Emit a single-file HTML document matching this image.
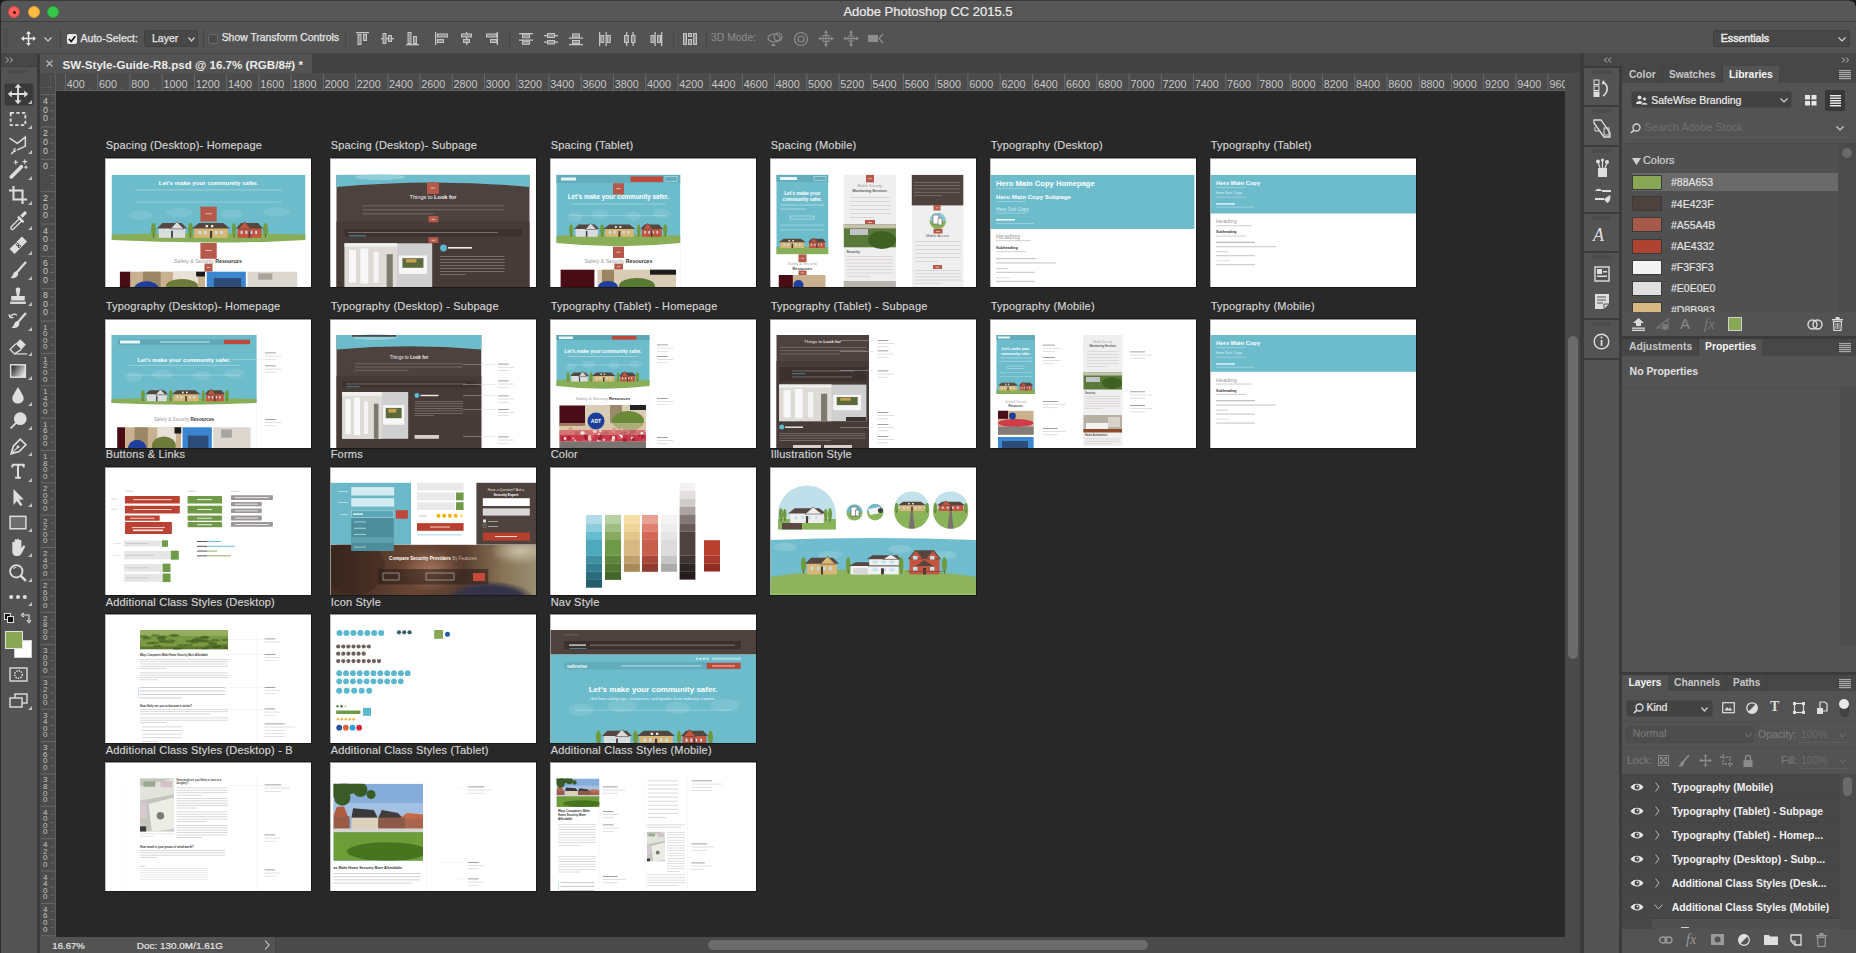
<!DOCTYPE html><html><head><meta charset="utf-8"><title>Photoshop</title><style>
*{margin:0;padding:0;box-sizing:border-box}
html,body{width:1856px;height:953px;overflow:hidden;background:#535353;font-family:"Liberation Sans",sans-serif;color:#ddd;position:relative}
.a{position:absolute}
.t{white-space:nowrap;line-height:1.2}
svg.a{overflow:visible}
</style></head><body><div class="a" style="left:0px;top:0px;width:1856px;height:21px;background:#565656;"></div><div class="a" style="left:0px;top:21px;width:1856px;height:1px;background:#3e3e3e;"></div><div class="a" style="left:0px;top:0px;width:1856px;height:1px;background:#3a3a3a;"></div><div class="a" style="left:8px;top:6px;width:12px;height:12px;border-radius:6px;background:#fc605c;border:0.5px solid #d24a46"></div><div class="a" style="left:12.5px;top:10.5px;width:3px;height:3px;border-radius:2px;background:#4d0000"></div><div class="a" style="left:28px;top:6px;width:12px;height:12px;border-radius:6px;background:#fdbc40;border:0.5px solid #d9a033"></div><div class="a" style="left:47px;top:6px;width:12px;height:12px;border-radius:6px;background:#34c84a;border:0.5px solid #2aa63b"></div><div class="a t" style="left:0;top:4.2px;width:1856px;text-align:center;font-size:13px;color:#ececec;-webkit-text-stroke:0.2px #ececec">Adobe Photoshop CC 2015.5</div><div class="a" style="left:0px;top:22px;width:1856px;height:32px;background:#535353;"></div><div class="a" style="left:0px;top:53px;width:1856px;height:1px;background:#474747;"></div><svg class="a" style="left:4px;top:28px" width="5" height="20" viewBox="0 0 5 20" ><rect x="0" y="0" width="4" height="1" fill="#464646"/><rect x="0" y="2" width="4" height="1" fill="#464646"/><rect x="0" y="4" width="4" height="1" fill="#464646"/><rect x="0" y="6" width="4" height="1" fill="#464646"/><rect x="0" y="8" width="4" height="1" fill="#464646"/><rect x="0" y="10" width="4" height="1" fill="#464646"/><rect x="0" y="12" width="4" height="1" fill="#464646"/><rect x="0" y="14" width="4" height="1" fill="#464646"/><rect x="0" y="16" width="4" height="1" fill="#464646"/><rect x="0" y="18" width="4" height="1" fill="#464646"/></svg><svg class="a" style="left:21px;top:31px" width="15" height="15" viewBox="0 0 15 15" ><path d="M7.5 1 L7.5 14 M1 7.5 L14 7.5" stroke="#e6e6e6" stroke-width="1.6"/><path d="M7.5 0 L5 3 L10 3Z M7.5 15 L5 12 L10 12Z M0 7.5 L3 5 L3 10Z M15 7.5 L12 5 L12 10Z" fill="#e6e6e6"/></svg><svg class="a" style="left:44px;top:37px" width="8" height="5" viewBox="0 0 8 5" ><path d="M0.5 0.5 L4.0 4 L7.5 0.5" stroke="#cfcfcf" stroke-width="1.2" fill="none"/></svg><div class="a" style="left:60px;top:29px;width:1px;height:19px;background:#474747;"></div><div class="a" style="left:203px;top:29px;width:1px;height:19px;background:#474747;"></div><div class="a" style="left:345px;top:29px;width:1px;height:19px;background:#474747;"></div><div class="a" style="left:509px;top:29px;width:1px;height:19px;background:#474747;"></div><div class="a" style="left:673px;top:29px;width:1px;height:19px;background:#474747;"></div><div class="a" style="left:706px;top:29px;width:1px;height:19px;background:#474747;"></div><div class="a" style="left:67px;top:34px;width:10px;height:10px;border-radius:2px;background:#e9e9e9"></div><svg class="a" style="left:67px;top:34px" width="10" height="10" viewBox="0 0 10 10" ><path d="M2 5 L4.2 7.5 L8.3 2.3" stroke="#111" stroke-width="1.7" fill="none"/></svg><div class="a t" style="left:80.5px;top:32.31px;font-size:10.55px;color:#e6e6e6;font-weight:normal;-webkit-text-stroke:0.25px #e6e6e6">Auto-Select:</div><div class="a" style="left:144px;top:30px;width:54px;height:17px;border-radius:3px;background:#474747;border:1px solid #404040"></div><div class="a t" style="left:152px;top:32.31px;font-size:10.55px;color:#e6e6e6;font-weight:normal;-webkit-text-stroke:0.25px #e6e6e6">Layer</div><svg class="a" style="left:188px;top:37px" width="7" height="5" viewBox="0 0 7 5" ><path d="M0.5 0.5 L3.5 4 L6.5 0.5" stroke="#cfcfcf" stroke-width="1.2" fill="none"/></svg><div class="a" style="left:208px;top:34px;width:10px;height:10px;border-radius:2px;background:#4a4a4a;border:1px solid #6a6a6a"></div><div class="a t" style="left:221.7px;top:32.46px;font-size:10.4px;color:#e6e6e6;font-weight:normal;-webkit-text-stroke:0.25px #e6e6e6">Show Transform Controls</div><svg class="a" style="left:356px;top:31.5px" width="14" height="14" viewBox="0 0 14 14" ><rect x="0" y="0" width="13" height="1.3" fill="#c4c4c4"/><rect x="2.0" y="2.5" width="3" height="10" fill="#8c8c8c" stroke="#c4c4c4" stroke-width="1"/><rect x="7.5" y="2.5" width="3" height="6" fill="#8c8c8c" stroke="#c4c4c4" stroke-width="1"/></svg><svg class="a" style="left:381px;top:31.5px" width="14" height="14" viewBox="0 0 14 14" ><rect x="0" y="6" width="13" height="1.3" fill="#c4c4c4"/><rect x="2.0" y="1.5" width="3" height="10" fill="#8c8c8c" stroke="#c4c4c4" stroke-width="1"/><rect x="7.5" y="3.5" width="3" height="6" fill="#8c8c8c" stroke="#c4c4c4" stroke-width="1"/></svg><svg class="a" style="left:406px;top:31.5px" width="14" height="14" viewBox="0 0 14 14" ><rect x="0" y="12" width="13" height="1.3" fill="#c4c4c4"/><rect x="2.0" y="0.5" width="3" height="11" fill="#8c8c8c" stroke="#c4c4c4" stroke-width="1"/><rect x="7.5" y="4.5" width="3" height="7" fill="#8c8c8c" stroke="#c4c4c4" stroke-width="1"/></svg><svg class="a" style="left:435px;top:31.5px" width="14" height="14" viewBox="0 0 14 14" ><rect x="0" y="0" width="1.3" height="13" fill="#c4c4c4"/><rect x="2.5" y="2.0" width="10" height="3" fill="#8c8c8c" stroke="#c4c4c4" stroke-width="1"/><rect x="2.5" y="7.5" width="6" height="3" fill="#8c8c8c" stroke="#c4c4c4" stroke-width="1"/></svg><svg class="a" style="left:460px;top:31.5px" width="14" height="14" viewBox="0 0 14 14" ><rect x="6" y="0" width="1.3" height="13" fill="#c4c4c4"/><rect x="1.5" y="2.0" width="10" height="3" fill="#8c8c8c" stroke="#c4c4c4" stroke-width="1"/><rect x="3.5" y="7.5" width="6" height="3" fill="#8c8c8c" stroke="#c4c4c4" stroke-width="1"/></svg><svg class="a" style="left:485px;top:31.5px" width="14" height="14" viewBox="0 0 14 14" ><rect x="11.7" y="0" width="1.3" height="13" fill="#c4c4c4"/><rect x="1.5" y="2.0" width="10" height="3" fill="#8c8c8c" stroke="#c4c4c4" stroke-width="1"/><rect x="5.5" y="7.5" width="6" height="3" fill="#8c8c8c" stroke="#c4c4c4" stroke-width="1"/></svg><svg class="a" style="left:519px;top:31.5px" width="14" height="14" viewBox="0 0 14 14" ><rect x="0" y="1" width="14" height="1.3" fill="#c4c4c4"/><rect x="0" y="7.5" width="14" height="1.3" fill="#c4c4c4"/><rect x="3.5" y="2.8" width="7" height="3" fill="#8c8c8c" stroke="#c4c4c4" stroke-width="1"/><rect x="3.5" y="9.3" width="7" height="3" fill="#8c8c8c" stroke="#c4c4c4" stroke-width="1"/></svg><svg class="a" style="left:544px;top:31.5px" width="14" height="14" viewBox="0 0 14 14" ><rect x="0" y="3" width="14" height="1.3" fill="#c4c4c4"/><rect x="0" y="9.5" width="14" height="1.3" fill="#c4c4c4"/><rect x="3.5" y="1.5" width="7" height="4" fill="#8c8c8c" stroke="#c4c4c4" stroke-width="1"/><rect x="3.5" y="8.5" width="7" height="3.5" fill="#8c8c8c" stroke="#c4c4c4" stroke-width="1"/></svg><svg class="a" style="left:569px;top:31.5px" width="14" height="14" viewBox="0 0 14 14" ><rect x="0" y="5.5" width="14" height="1.3" fill="#c4c4c4"/><rect x="0" y="12" width="14" height="1.3" fill="#c4c4c4"/><rect x="3.5" y="2.0" width="7" height="3" fill="#8c8c8c" stroke="#c4c4c4" stroke-width="1"/><rect x="3.5" y="8.5" width="7" height="3" fill="#8c8c8c" stroke="#c4c4c4" stroke-width="1"/></svg><svg class="a" style="left:598px;top:31.5px" width="14" height="14" viewBox="0 0 14 14" ><rect x="1" y="0" width="1.3" height="14" fill="#c4c4c4"/><rect x="7.5" y="0" width="1.3" height="14" fill="#c4c4c4"/><rect x="2.8" y="3.5" width="3" height="7" fill="#8c8c8c" stroke="#c4c4c4" stroke-width="1"/><rect x="9.3" y="3.5" width="3" height="7" fill="#8c8c8c" stroke="#c4c4c4" stroke-width="1"/></svg><svg class="a" style="left:623px;top:31.5px" width="14" height="14" viewBox="0 0 14 14" ><rect x="3" y="0" width="1.3" height="14" fill="#c4c4c4"/><rect x="9.5" y="0" width="1.3" height="14" fill="#c4c4c4"/><rect x="1.5" y="3.5" width="4" height="7" fill="#8c8c8c" stroke="#c4c4c4" stroke-width="1"/><rect x="8.5" y="3.5" width="3.5" height="7" fill="#8c8c8c" stroke="#c4c4c4" stroke-width="1"/></svg><svg class="a" style="left:649px;top:31.5px" width="14" height="14" viewBox="0 0 14 14" ><rect x="5.5" y="0" width="1.3" height="14" fill="#c4c4c4"/><rect x="12" y="0" width="1.3" height="14" fill="#c4c4c4"/><rect x="2.0" y="3.5" width="3" height="7" fill="#8c8c8c" stroke="#c4c4c4" stroke-width="1"/><rect x="8.5" y="3.5" width="3" height="7" fill="#8c8c8c" stroke="#c4c4c4" stroke-width="1"/></svg><svg class="a" style="left:683px;top:31.5px" width="14" height="14" viewBox="0 0 14 14" ><rect x="0.5" y="1.5" width="3" height="11" fill="#8c8c8c" stroke="#c4c4c4" stroke-width="1"/><rect x="5.5" y="1.5" width="3" height="3" fill="#8c8c8c" stroke="#c4c4c4" stroke-width="1"/><rect x="5.5" y="7.5" width="3" height="5" fill="#8c8c8c" stroke="#c4c4c4" stroke-width="1"/><rect x="10.5" y="1.5" width="3" height="11" fill="#8c8c8c" stroke="#c4c4c4" stroke-width="1"/></svg><div class="a t" style="left:711px;top:32.46px;font-size:10.4px;color:#8e8e8e;font-weight:normal;">3D Mode:</div><svg class="a" style="left:767px;top:30px" width="18" height="17" viewBox="0 0 18 17" ><ellipse cx="7" cy="8" rx="6" ry="4" stroke="#8e8e8e" stroke-width="1.2" fill="none"/><circle cx="11" cy="7" r="4" stroke="#8e8e8e" stroke-width="1.2" fill="none"/><path d="M6 13 L9 16 L4 16Z" fill="#8e8e8e"/></svg><svg class="a" style="left:793px;top:30px" width="16" height="17" viewBox="0 0 16 17" ><circle cx="8" cy="9" r="6.5" stroke="#8e8e8e" stroke-width="1.2" fill="none"/><circle cx="8" cy="9" r="3" stroke="#8e8e8e" stroke-width="1.2" fill="none"/></svg><svg class="a" style="left:818px;top:30px" width="16" height="17" viewBox="0 0 16 17" ><path d="M8 1 L8 16 M1 8.5 L15 8.5" stroke="#8e8e8e" stroke-width="1.2"/><rect x="5" y="5.5" width="6" height="6" stroke="#8e8e8e" fill="none"/><path d="M8 0 L6 3 L10 3Z M8 17 L6 14 L10 14Z M0 8.5 L3 6.5 L3 10.5Z M16 8.5 L13 6.5 L13 10.5Z" fill="#8e8e8e"/></svg><svg class="a" style="left:843px;top:30px" width="16" height="17" viewBox="0 0 16 17" ><path d="M8 1 L8 16 M1 8.5 L15 8.5" stroke="#8e8e8e" stroke-width="1.2"/><path d="M8 4 L12 8.5 L8 13 L4 8.5Z" stroke="#8e8e8e" fill="none"/><path d="M8 0 L6 3 L10 3Z M8 17 L6 14 L10 14Z M0 8.5 L3 6.5 L3 10.5Z M16 8.5 L13 6.5 L13 10.5Z" fill="#8e8e8e"/></svg><svg class="a" style="left:867px;top:31px" width="18" height="15" viewBox="0 0 18 15" ><rect x="1" y="4" width="10" height="7" fill="#8e8e8e"/><path d="M12 7.5 L16 3 M12 7.5 L16 12" stroke="#8e8e8e" stroke-width="1.2"/></svg><div class="a" style="left:1713px;top:30px;width:137px;height:17px;border-radius:3px;background:#474747;border:1px solid #3f3f3f"></div><div class="a t" style="left:1720.8px;top:32.27px;font-size:10.6px;color:#ececec;font-weight:normal;-webkit-text-stroke:0.45px #ececec">Essentials</div><svg class="a" style="left:1838px;top:37px" width="8" height="5" viewBox="0 0 8 5" ><path d="M0.5 0.5 L4.0 4 L7.5 0.5" stroke="#d0d0d0" stroke-width="1.2" fill="none"/></svg><div class="a" style="left:0px;top:54px;width:37px;height:899px;background:#535353;"></div><div class="a" style="left:37px;top:54px;width:3px;height:899px;background:#3b3b3b;"></div><div class="a" style="left:0px;top:54px;width:37px;height:12px;background:#474747;"></div><svg class="a" style="left:5px;top:57px" width="10" height="7" viewBox="0 0 10 7" ><path d="M1 0.5 L3.5 3 L1 5.5 M5 0.5 L7.5 3 L5 5.5" stroke="#bdbdbd" stroke-width="1" fill="none"/></svg><div class="a" style="left:0px;top:66px;width:37px;height:1px;background:#3e3e3e;"></div><svg class="a" style="left:9px;top:70px" width="20" height="3" viewBox="0 0 20 3" ><rect x="0" y="0" width="1" height="3" fill="#444"/><rect x="2" y="0" width="1" height="3" fill="#444"/><rect x="4" y="0" width="1" height="3" fill="#444"/><rect x="6" y="0" width="1" height="3" fill="#444"/><rect x="8" y="0" width="1" height="3" fill="#444"/><rect x="10" y="0" width="1" height="3" fill="#444"/><rect x="12" y="0" width="1" height="3" fill="#444"/><rect x="14" y="0" width="1" height="3" fill="#444"/><rect x="16" y="0" width="1" height="3" fill="#444"/><rect x="18" y="0" width="1" height="3" fill="#444"/></svg><div class="a" style="left:4px;top:83px;width:30px;height:23px;border-radius:3px;background:#3a3a3a;border:1px solid #454545"></div><svg class="a" style="left:8.7px;top:85px" width="18" height="18" viewBox="0 0 18 18" ><g transform="translate(9,9) scale(1.13) translate(-9,-9)"><path d="M9 2 L9 16 M2 9 L16 9" stroke="#dedede" stroke-width="1.7"/><path d="M9 0 L6 3.5 L12 3.5Z M9 18 L6 14.5 L12 14.5Z M0 9 L3.5 6 L3.5 12Z M18 9 L14.5 6 L14.5 12Z" fill="#dedede"/></g></svg><svg class="a" style="left:28px;top:100px" width="4" height="4" viewBox="0 0 4 4" ><path d="M4 0 L4 4 L0 4Z" fill="#bdbdbd"/></svg><svg class="a" style="left:8.7px;top:110px" width="18" height="18" viewBox="0 0 18 18" ><g transform="translate(9,9) scale(1.13) translate(-9,-9)"><rect x="2.5" y="3.5" width="13" height="11" stroke="#dedede" stroke-width="1.6" stroke-dasharray="3 2" fill="none"/></g></svg><svg class="a" style="left:28px;top:125px" width="4" height="4" viewBox="0 0 4 4" ><path d="M4 0 L4 4 L0 4Z" fill="#bdbdbd"/></svg><svg class="a" style="left:8.7px;top:136px" width="18" height="18" viewBox="0 0 18 18" ><g transform="translate(9,9) scale(1.13) translate(-9,-9)"><path d="M1.5 3 L8.5 7.5 L15.5 2 L15.5 10 L8 13.5 M7 12.5 C5 12 5 15 7 14.5 M6 14 L3 17" stroke="#dedede" stroke-width="1.3" fill="none"/></g></svg><svg class="a" style="left:28px;top:150px" width="4" height="4" viewBox="0 0 4 4" ><path d="M4 0 L4 4 L0 4Z" fill="#bdbdbd"/></svg><svg class="a" style="left:8.7px;top:160px" width="18" height="18" viewBox="0 0 18 18" ><g transform="translate(9,9) scale(1.13) translate(-9,-9)"><path d="M3 16 L12 7" stroke="#dedede" stroke-width="3.2" stroke-linecap="round"/><path d="M7 1 L7 5 M5 3 L9 3 M15 0.5 L15 4.5 M13 2.5 L17 2.5 M16 6 L16 9 M14.5 7.5 L17.5 7.5" stroke="#dedede" stroke-width="1"/></g></svg><svg class="a" style="left:28px;top:176px" width="4" height="4" viewBox="0 0 4 4" ><path d="M4 0 L4 4 L0 4Z" fill="#bdbdbd"/></svg><svg class="a" style="left:8.7px;top:186px" width="18" height="18" viewBox="0 0 18 18" ><g transform="translate(9,9) scale(1.13) translate(-9,-9)"><path d="M5 1 L5 13 L17 13 M1 5 L13 5 L13 17" stroke="#dedede" stroke-width="1.8" fill="none"/></g></svg><svg class="a" style="left:28px;top:201px" width="4" height="4" viewBox="0 0 4 4" ><path d="M4 0 L4 4 L0 4Z" fill="#bdbdbd"/></svg><svg class="a" style="left:8.7px;top:211px" width="18" height="18" viewBox="0 0 18 18" ><g transform="translate(9,9) scale(1.13) translate(-9,-9)"><path d="M3 15 L10 8 L12 10 L5 17 C3.5 18 2 16.5 3 15Z" stroke="#dedede" stroke-width="1.2" fill="none"/><path d="M9 6 L14 11" stroke="#dedede" stroke-width="2"/><path d="M11 5 L14.5 1.5 C15.5 0.5 17.5 2.5 16.5 3.5 L13 7Z" fill="#dedede"/></g></svg><svg class="a" style="left:28px;top:226px" width="4" height="4" viewBox="0 0 4 4" ><path d="M4 0 L4 4 L0 4Z" fill="#bdbdbd"/></svg><svg class="a" style="left:8.7px;top:236px" width="18" height="18" viewBox="0 0 18 18" ><g transform="translate(9,9) scale(1.13) translate(-9,-9)"><path d="M1.5 12.5 L12.5 1.5 L17 6 L6 17Z" fill="#dedede"/><path d="M6.5 7.5 L11 12 M7.5 6.5 L12 11" stroke="#535353" stroke-width="0.8"/><circle cx="9.5" cy="9.5" r="0.8" fill="#535353"/><circle cx="8" cy="9.5" r="0.6" fill="#535353"/><circle cx="11" cy="9.5" r="0.6" fill="#535353"/><circle cx="9.5" cy="8" r="0.6" fill="#535353"/><circle cx="9.5" cy="11" r="0.6" fill="#535353"/></g></svg><svg class="a" style="left:28px;top:251px" width="4" height="4" viewBox="0 0 4 4" ><path d="M4 0 L4 4 L0 4Z" fill="#bdbdbd"/></svg><svg class="a" style="left:8.7px;top:261px" width="18" height="18" viewBox="0 0 18 18" ><g transform="translate(9,9) scale(1.13) translate(-9,-9)"><path d="M16 2 L8 11" stroke="#dedede" stroke-width="2"/><path d="M8 10 C4 10 5 15 2 16 C6 17 10 15 9 11Z" fill="#dedede"/></g></svg><svg class="a" style="left:28px;top:276px" width="4" height="4" viewBox="0 0 4 4" ><path d="M4 0 L4 4 L0 4Z" fill="#bdbdbd"/></svg><svg class="a" style="left:8.7px;top:287px" width="18" height="18" viewBox="0 0 18 18" ><g transform="translate(9,9) scale(1.13) translate(-9,-9)"><path d="M7 3 C7 1 11 1 11 3 L10 9 L8 9Z" fill="#dedede"/><rect x="3" y="9" width="12" height="4" fill="#dedede"/><rect x="2" y="14" width="14" height="2" fill="#dedede"/></g></svg><svg class="a" style="left:28px;top:302px" width="4" height="4" viewBox="0 0 4 4" ><path d="M4 0 L4 4 L0 4Z" fill="#bdbdbd"/></svg><svg class="a" style="left:8.7px;top:312px" width="18" height="18" viewBox="0 0 18 18" ><g transform="translate(9,9) scale(1.13) translate(-9,-9)"><path d="M16 2 L9 10" stroke="#dedede" stroke-width="2"/><path d="M9 9 C5 9 6 14 3 15 C7 16 11 14 10 10Z" fill="#dedede"/><path d="M2 6 C3 3 6 2 8 4 M2 6 L1 3 M2 6 L5 6" stroke="#dedede" stroke-width="1.2" fill="none"/></g></svg><svg class="a" style="left:28px;top:327px" width="4" height="4" viewBox="0 0 4 4" ><path d="M4 0 L4 4 L0 4Z" fill="#bdbdbd"/></svg><svg class="a" style="left:8.7px;top:337px" width="18" height="18" viewBox="0 0 18 18" ><g transform="translate(9,9) scale(1.13) translate(-9,-9)"><path d="M7 7 L11 3 L16 8 L12 12Z" fill="#dedede"/><path d="M7 7 L2 12 L6 16 L12 12" stroke="#dedede" stroke-width="1.2" fill="none"/><path d="M6 16 L17 16" stroke="#dedede" stroke-width="1.1"/></g></svg><svg class="a" style="left:28px;top:352px" width="4" height="4" viewBox="0 0 4 4" ><path d="M4 0 L4 4 L0 4Z" fill="#bdbdbd"/></svg><svg class="a" style="left:8.7px;top:362px" width="18" height="18" viewBox="0 0 18 18" ><g transform="translate(9,9) scale(1.13) translate(-9,-9)"><defs><linearGradient id="gg" x1="0" y1="0.2" x2="1" y2="0.8"><stop offset="0" stop-color="#222"/><stop offset="1" stop-color="#f4f4f4"/></linearGradient></defs><rect x="2.5" y="3.5" width="13" height="11" stroke="#dedede" stroke-width="1.3" fill="url(#gg)"/></g></svg><svg class="a" style="left:28px;top:376px" width="4" height="4" viewBox="0 0 4 4" ><path d="M4 0 L4 4 L0 4Z" fill="#bdbdbd"/></svg><svg class="a" style="left:8.7px;top:386px" width="18" height="18" viewBox="0 0 18 18" ><g transform="translate(9,9) scale(1.13) translate(-9,-9)"><path d="M9 2 C6 7 4 10 4 12 C4 15 6.5 16.5 9 16.5 C11.5 16.5 14 15 14 12 C14 10 12 7 9 2Z" fill="#dedede"/></g></svg><svg class="a" style="left:28px;top:402px" width="4" height="4" viewBox="0 0 4 4" ><path d="M4 0 L4 4 L0 4Z" fill="#bdbdbd"/></svg><svg class="a" style="left:8.7px;top:412px" width="18" height="18" viewBox="0 0 18 18" ><g transform="translate(9,9) scale(1.13) translate(-9,-9)"><circle cx="11" cy="7" r="5" stroke="#dedede" stroke-width="1.3" fill="#dedede"/><path d="M7.5 10.5 L2.5 15.5" stroke="#dedede" stroke-width="1.6"/></g></svg><svg class="a" style="left:28px;top:426px" width="4" height="4" viewBox="0 0 4 4" ><path d="M4 0 L4 4 L0 4Z" fill="#bdbdbd"/></svg><svg class="a" style="left:8.7px;top:438px" width="18" height="18" viewBox="0 0 18 18" ><g transform="translate(9,9) scale(1.13) translate(-9,-9)"><path d="M3 15 L5 8 L11 2 L16 7 L10 13Z" stroke="#dedede" stroke-width="1.5" fill="none"/><path d="M3 15 L8.5 9.5" stroke="#dedede" stroke-width="1"/><circle cx="9" cy="9" r="1.3" fill="#dedede"/></g></svg><svg class="a" style="left:28px;top:452px" width="4" height="4" viewBox="0 0 4 4" ><path d="M4 0 L4 4 L0 4Z" fill="#bdbdbd"/></svg><svg class="a" style="left:8.7px;top:462px" width="18" height="18" viewBox="0 0 18 18" ><g transform="translate(9,9) scale(1.13) translate(-9,-9)"><path d="M4 3.5 L14 3.5 L14 6 M4 3.5 L4 6 M9 3.5 L9 15 M6.5 15 L11.5 15" stroke="#dedede" stroke-width="1.8" fill="none"/></g></svg><svg class="a" style="left:28px;top:478px" width="4" height="4" viewBox="0 0 4 4" ><path d="M4 0 L4 4 L0 4Z" fill="#bdbdbd"/></svg><svg class="a" style="left:8.7px;top:488px" width="18" height="18" viewBox="0 0 18 18" ><g transform="translate(9,9) scale(1.13) translate(-9,-9)"><path d="M5 2 L5 16 L8 12.5 L11 17 L13 16 L10 11.5 L14 11Z" fill="#dedede"/></g></svg><svg class="a" style="left:28px;top:503px" width="4" height="4" viewBox="0 0 4 4" ><path d="M4 0 L4 4 L0 4Z" fill="#bdbdbd"/></svg><svg class="a" style="left:8.7px;top:513px" width="18" height="18" viewBox="0 0 18 18" ><g transform="translate(9,9) scale(1.13) translate(-9,-9)"><rect x="2" y="4" width="14" height="11" stroke="#dedede" stroke-width="1.3" fill="#6e6e6e"/></g></svg><svg class="a" style="left:28px;top:528px" width="4" height="4" viewBox="0 0 4 4" ><path d="M4 0 L4 4 L0 4Z" fill="#bdbdbd"/></svg><svg class="a" style="left:8.7px;top:538px" width="18" height="18" viewBox="0 0 18 18" ><g transform="translate(9,9) scale(1.13) translate(-9,-9)"><path d="M4 9 L4 5 C4 4 6 4 6 5 L6 9 L6 3 C6 2 8 2 8 3 L8 9 L8 2.5 C8 1.5 10 1.5 10 2.5 L10 9 L10 3.5 C10 2.5 12 2.5 12 3.5 L12 10 L13.5 8 C14.5 7 16 8 15 9.5 L12 15 C11 16.5 10 17 8 17 C5 17 4 15 4 13Z" fill="#dedede"/></g></svg><svg class="a" style="left:28px;top:553px" width="4" height="4" viewBox="0 0 4 4" ><path d="M4 0 L4 4 L0 4Z" fill="#bdbdbd"/></svg><svg class="a" style="left:8.7px;top:564px" width="18" height="18" viewBox="0 0 18 18" ><g transform="translate(9,9) scale(1.13) translate(-9,-9)"><circle cx="7.5" cy="7.5" r="5.5" stroke="#dedede" stroke-width="1.6" fill="none"/><path d="M11.5 11.5 L16 16" stroke="#dedede" stroke-width="2.2"/><path d="M5 5.5 C5.5 4.5 6.5 4 7.5 4" stroke="#dedede" stroke-width="0.9" fill="none"/></g></svg><svg class="a" style="left:28px;top:578px" width="4" height="4" viewBox="0 0 4 4" ><path d="M4 0 L4 4 L0 4Z" fill="#bdbdbd"/></svg><svg class="a" style="left:8.7px;top:588px" width="18" height="18" viewBox="0 0 18 18" ><g transform="translate(9,9) scale(1.13) translate(-9,-9)"><circle cx="3" cy="9" r="1.8" fill="#dedede"/><circle cx="9" cy="9" r="1.8" fill="#dedede"/><circle cx="15" cy="9" r="1.8" fill="#dedede"/></g></svg><svg class="a" style="left:28px;top:602px" width="4" height="4" viewBox="0 0 4 4" ><path d="M4 0 L4 4 L0 4Z" fill="#bdbdbd"/></svg><svg class="a" style="left:4px;top:613px" width="28" height="12" viewBox="0 0 28 12" ><rect x="0.5" y="0.5" width="6" height="6" fill="#111" stroke="#ddd" stroke-width="1"/><rect x="3.5" y="3.5" width="6" height="6" fill="#111" stroke="#ddd" stroke-width="1"/><path d="M19 2 L25 2 L25 8 M17 2 L20 0 M17 2 L20 4 M25 10 L23 7 M25 10 L27 7" stroke="#ddd" stroke-width="1.2" fill="none"/></svg><div class="a" style="left:14px;top:640px;width:18px;height:18px;background:#ffffff;border:1px solid #cfcfcf"></div><div class="a" style="left:5px;top:631px;width:18px;height:18px;background:#88a653;border:1px solid #e2e2e2"></div><svg class="a" style="left:9px;top:667px" width="19" height="16" viewBox="0 0 19 16" ><rect x="1" y="1" width="17" height="13" stroke="#dedede" stroke-width="1.4" fill="none"/><circle cx="9.5" cy="7.5" r="3.8" stroke="#dedede" stroke-width="1.4" stroke-dasharray="1.5 1" fill="none"/></svg><svg class="a" style="left:9px;top:693px" width="19" height="16" viewBox="0 0 19 16" ><rect x="6" y="1" width="12" height="9" stroke="#dedede" stroke-width="1.4" fill="#535353"/><rect x="1" y="5" width="12" height="9" stroke="#dedede" stroke-width="1.4" fill="#535353"/></svg><svg class="a" style="left:28px;top:706px" width="4" height="4" viewBox="0 0 4 4" ><path d="M4 0 L4 4 L0 4Z" fill="#bdbdbd"/></svg><div class="a" style="left:40px;top:54px;width:1540px;height:19px;background:#424242;"></div><div class="a" style="left:40px;top:54px;width:272px;height:19px;background:#535353;"></div><svg class="a" style="left:46px;top:60px" width="7" height="7" viewBox="0 0 7 7" ><path d="M0.5 0.5 L6.5 6.5 M6.5 0.5 L0.5 6.5" stroke="#bdbdbd" stroke-width="1.1"/></svg><div class="a t" style="left:62.5px;top:57.72px;font-size:11.6px;color:#ececec;font-weight:bold;">SW-Style-Guide-R8.psd @ 16.7% (RGB/8#) *</div><div class="a" style="left:56px;top:91px;width:1509px;height:846px;background:#282828;"></div><div class="a" style="left:105px;top:157px;width:207px;height:131px;background:#1a1a1a"></div><svg class="a" style="left:105px;top:158px;background:#fff;overflow:hidden" width="206" height="129" viewBox="0 0 206 129"><rect x="6.80" y="16.90" width="193.50" height="65.10" fill="#6dbccc" /><ellipse cx="35.82" cy="57.26" rx="11.61" ry="4.56" fill="#7cc3d2"/><ellipse cx="74.52" cy="54.66" rx="13.55" ry="4.56" fill="#7cc3d2"/><ellipse cx="126.77" cy="55.96" rx="11.61" ry="4.56" fill="#7cc3d2"/><ellipse cx="171.28" cy="54.01" rx="13.55" ry="4.56" fill="#7cc3d2"/><text x="103.55" y="27.00" font-size="6.2" fill="#ffffff" font-family="Liberation Sans" font-weight="bold" text-anchor="middle" >Let's make your community safer.</text><rect x="30.02" y="31.50" width="147.06" height="1.00" fill="#ffffff" opacity="0.32"/><rect x="30.02" y="43.50" width="147.06" height="1.20" fill="#ffffff" opacity="0.22"/><path d="M6.80 76.50 Q103.55 73.75 200.30 76.50 L200.30 82.00 Q103.55 86.95 6.80 82.00Z" fill="#88ae58"/><ellipse cx="48.50" cy="71.55" rx="2.50" ry="6.75" fill="#6f9a3e"/><rect x="48.15" y="76.80" width="0.70" height="3.00" fill="#5a4a3a" /><rect x="53.80" y="69.88" width="26.40" height="9.92" fill="#dcdcdc" /><path d="M52.00 70.38 L57.40 65.08 L76.60 65.08 L82.00 70.38Z" fill="#55463f"/><path d="M65.50 70.88 L71.80 63.80 L79.00 70.88Z" fill="#dcdcdc" stroke="#55463f" stroke-width="0.6"/><rect x="57.10" y="72.86" width="2.10" height="3.17" fill="#bfe3ee" /><rect x="62.50" y="72.86" width="2.10" height="3.17" fill="#bfe3ee" /><rect x="67.90" y="72.86" width="2.10" height="3.17" fill="#bfe3ee" /><rect x="73.30" y="72.86" width="2.10" height="3.17" fill="#bfe3ee" /><rect x="66.10" y="72.86" width="1.80" height="6.94" fill="#4a3a34" /><ellipse cx="85.50" cy="71.55" rx="2.50" ry="6.75" fill="#6f9a3e"/><rect x="85.15" y="76.80" width="0.70" height="3.00" fill="#5a4a3a" /><rect x="89.28" y="69.88" width="33.44" height="9.92" fill="#d9b676" /><path d="M87.00 70.38 L93.84 65.08 L118.16 65.08 L125.00 70.38Z" fill="#55463f"/><rect x="100.68" y="67.00" width="2.28" height="2.24" fill="#f5f0e0" /><rect x="106.00" y="67.00" width="2.28" height="2.24" fill="#f5f0e0" /><rect x="93.46" y="72.86" width="2.66" height="3.17" fill="#bfe3ee" /><rect x="98.93" y="72.86" width="2.66" height="3.17" fill="#bfe3ee" /><rect x="104.40" y="72.86" width="2.66" height="3.17" fill="#bfe3ee" /><rect x="109.88" y="72.86" width="2.66" height="3.17" fill="#bfe3ee" /><rect x="115.35" y="72.86" width="2.66" height="3.17" fill="#bfe3ee" /><rect x="104.86" y="72.86" width="2.28" height="6.94" fill="#4a3a34" /><ellipse cx="129.00" cy="71.55" rx="2.00" ry="6.75" fill="#6f9a3e"/><rect x="128.65" y="76.80" width="0.70" height="3.00" fill="#5a4a3a" /><rect x="132.62" y="69.88" width="23.76" height="9.92" fill="#c4553f" /><path d="M131.00 70.38 L135.86 65.08 L153.14 65.08 L158.00 70.38Z" fill="#55463f"/><path d="M133.70 70.88 L139.64 63.80 L145.85 70.88Z" fill="#c4553f" stroke="#55463f" stroke-width="0.6"/><rect x="135.59" y="72.86" width="1.89" height="3.17" fill="#bfe3ee" /><rect x="140.45" y="72.86" width="1.89" height="3.17" fill="#bfe3ee" /><rect x="145.31" y="72.86" width="1.89" height="3.17" fill="#bfe3ee" /><rect x="150.17" y="72.86" width="1.89" height="3.17" fill="#bfe3ee" /><rect x="143.69" y="72.86" width="1.62" height="6.94" fill="#4a3a34" /><ellipse cx="160.50" cy="71.55" rx="2.50" ry="6.75" fill="#6f9a3e"/><rect x="160.15" y="76.80" width="0.70" height="3.00" fill="#5a4a3a" /><rect x="95.40" y="48.70" width="16.30" height="14.90" fill="#b5594a" /><rect x="100.29" y="55.41" width="6.52" height="0.80" fill="#f0d0c8" /><rect x="95.40" y="85.00" width="16.30" height="15.80" fill="#b5594a" /><rect x="100.29" y="92.11" width="6.52" height="0.80" fill="#f0d0c8" /><text x="103.00" y="105.00" font-size="5.2" fill="#999" font-family="Liberation Sans"  text-anchor="middle" >Safety &amp; Security <tspan font-weight="bold" fill="#333">Resources</tspan></text><rect x="99.50" y="105.60" width="8.00" height="8.00" fill="#b5594a" /><rect x="101.90" y="109.20" width="3.20" height="0.80" fill="#f0d0c8" /><rect x="14.90" y="113.70" width="10.64" height="16.00" fill="#4a0c14" /><defs></defs><rect x="25.54" y="113.70" width="74.47" height="16.00" fill="#c9b190" /><rect x="37.95" y="113.70" width="17.73" height="16.00" fill="#9c8866" /><rect x="68.09" y="113.70" width="24.82" height="16.00" fill="#e8e2d6" /><ellipse cx="76.95" cy="128.10" rx="15.96" ry="7.20" fill="#6c7a3a"/><rect x="91.14" y="113.70" width="8.87" height="4.80" fill="#1a1a1a" /><ellipse cx="41.50" cy="130.50" rx="12.41" ry="7.20" fill="#1e3d9c"/><rect x="101.78" y="113.70" width="39.01" height="16.00" fill="#3a86d0" /><rect x="108.87" y="120.10" width="27.30" height="9.60" fill="#2d4c7a" /><rect x="142.56" y="113.70" width="49.64" height="16.00" fill="#dcd8d0" /><rect x="153.19" y="115.30" width="14.18" height="6.40" fill="#a8a49c" /><rect x="200.00" y="81.00" width="0.50" height="48.00" fill="#eee" /><rect x="0" y="0" width="206" height="0.8" fill="#777"/><rect x="0" y="0" width="0.8" height="129" fill="#aaa"/></svg><div class="a" style="left:330px;top:157px;width:207px;height:131px;background:#1a1a1a"></div><svg class="a" style="left:330px;top:158px;background:#fff;overflow:hidden" width="206" height="129" viewBox="0 0 206 129"><rect x="6.50" y="16.90" width="193.00" height="112.10" fill="#4e423f" /><path d="M6.5 16.9 L199.5 16.9 L199.5 29 Q103 20 6.5 29Z" fill="#6dbccc"/><ellipse cx="50" cy="19" rx="25" ry="3" fill="#9fd6e0" opacity="0.7"/><rect x="6.50" y="63.60" width="193.00" height="65.40" fill="#473b38" /><rect x="97.00" y="24.40" width="12.00" height="11.50" fill="#b5594a" /><rect x="100.60" y="29.57" width="4.80" height="0.80" fill="#f0d0c8" /><text x="103.00" y="41.00" font-size="5.6" fill="#f2f2f2" font-family="Liberation Sans"  text-anchor="middle" >Things to <tspan font-weight="bold">Look for</tspan></text><rect x="32.50" y="47.50" width="141.50" height="0.70" fill="#857976" /><rect x="32.50" y="51.50" width="141.50" height="0.70" fill="#857976" /><rect x="32.50" y="55.50" width="70.75" height="0.70" fill="#857976" /><rect x="98.50" y="58.00" width="9.80" height="6.30" fill="#b5594a" /><rect x="101.44" y="60.84" width="3.92" height="0.80" fill="#f0d0c8" /><rect x="14.60" y="71.00" width="177.40" height="7.50" fill="#3b312f" /><rect x="18.00" y="74.00" width="150.00" height="1.00" fill="#7a6e6a" /><rect x="19.00" y="77.50" width="17.00" height="0.70" fill="#5ab8cc" /><rect x="98.50" y="79.20" width="9.80" height="5.80" fill="#b5594a" /><rect x="101.44" y="81.81" width="3.92" height="0.80" fill="#f0d0c8" /><rect x="14.60" y="85.30" width="87.60" height="43.70" fill="#cfcfcf" /><rect x="14.60" y="85.30" width="52.56" height="43.70" fill="#dedbd6" /><rect x="18.98" y="91.86" width="7.01" height="32.78" fill="#f8f8f8" /><rect x="30.37" y="90.54" width="7.88" height="34.96" fill="#f8f8f8" /><rect x="43.51" y="94.04" width="5.26" height="30.59" fill="#f4f4f4" /><rect x="56.65" y="96.22" width="6.13" height="32.78" fill="#7d7a70" /><rect x="14.60" y="85.30" width="52.56" height="3.50" fill="#f0f0f0" /><rect x="68.91" y="97.54" width="28.03" height="18.35" fill="#f6f6f6" /><rect x="72.42" y="100.16" width="21.02" height="9.61" fill="#5a6a3a" /><rect x="75.92" y="101.03" width="10.51" height="3.50" fill="#c8a050" /><circle cx="113.50" cy="90.00" r="3.40" fill="#5ab8d0" /><rect x="118.00" y="89.00" width="24.00" height="1.60" fill="#eee" /><rect x="110.00" y="98.00" width="64.60" height="0.70" fill="#8e8480" /><rect x="110.00" y="101.00" width="64.60" height="0.70" fill="#8e8480" /><rect x="110.00" y="104.00" width="64.60" height="0.70" fill="#8e8480" /><rect x="110.00" y="107.00" width="64.60" height="0.70" fill="#8e8480" /><rect x="110.00" y="110.00" width="64.60" height="0.70" fill="#8e8480" /><rect x="110.00" y="113.00" width="64.60" height="0.70" fill="#8e8480" /><rect x="110.00" y="116.00" width="25.84" height="0.70" fill="#8e8480" /><rect x="0" y="0" width="206" height="0.8" fill="#777"/><rect x="0" y="0" width="0.8" height="129" fill="#aaa"/></svg><div class="a" style="left:550px;top:157px;width:207px;height:131px;background:#1a1a1a"></div><svg class="a" style="left:550px;top:158px;background:#fff;overflow:hidden" width="206" height="129" viewBox="0 0 206 129"><rect x="6.50" y="16.90" width="123.70" height="68.10" fill="#6dbccc" /><ellipse cx="25.05" cy="59.12" rx="7.42" ry="4.77" fill="#7cc3d2"/><ellipse cx="49.79" cy="56.40" rx="8.66" ry="4.77" fill="#7cc3d2"/><ellipse cx="83.19" cy="57.76" rx="7.42" ry="4.77" fill="#7cc3d2"/><ellipse cx="111.64" cy="55.72" rx="8.66" ry="4.77" fill="#7cc3d2"/><rect x="6.50" y="16.90" width="123.70" height="8.10" fill="#62acbc" /><rect x="80.50" y="18.50" width="32.50" height="5.50" fill="#c0483a" /><rect x="11.00" y="19.50" width="15.00" height="3.00" fill="#e8f4f7" /><rect x="115.00" y="18.70" width="12.00" height="5.00" fill="none" stroke="#d8eef3" stroke-width="0.5"/><text x="68.35" y="41.00" font-size="6.3" fill="#ffffff" font-family="Liberation Sans" font-weight="bold" text-anchor="middle" >Let's make your community safer.</text><rect x="21.34" y="45.50" width="94.01" height="1.00" fill="#ffffff" opacity="0.32"/><rect x="21.34" y="57.00" width="94.01" height="1.20" fill="#ffffff" opacity="0.22"/><path d="M6.50 77.80 Q68.35 74.20 130.20 77.80 L130.20 85.00 Q68.35 91.48 6.50 85.00Z" fill="#88ae58"/><ellipse cx="21.10" cy="71.85" rx="2.10" ry="5.67" fill="#6f9a3e"/><rect x="20.75" y="76.26" width="0.70" height="2.52" fill="#5a4a3a" /><rect x="25.55" y="70.45" width="22.18" height="8.33" fill="#dcdcdc" /><path d="M24.04 70.95 L28.58 66.42 L44.70 66.42 L49.24 70.95Z" fill="#55463f"/><path d="M35.38 71.45 L40.67 65.34 L46.72 71.45Z" fill="#dcdcdc" stroke="#55463f" stroke-width="0.6"/><rect x="28.32" y="72.95" width="1.76" height="2.67" fill="#bfe3ee" /><rect x="32.86" y="72.95" width="1.76" height="2.67" fill="#bfe3ee" /><rect x="37.40" y="72.95" width="1.76" height="2.67" fill="#bfe3ee" /><rect x="41.93" y="72.95" width="1.76" height="2.67" fill="#bfe3ee" /><rect x="35.88" y="72.95" width="1.51" height="5.83" fill="#4a3a34" /><ellipse cx="52.18" cy="71.85" rx="2.10" ry="5.67" fill="#6f9a3e"/><rect x="51.83" y="76.26" width="0.70" height="2.52" fill="#5a4a3a" /><rect x="55.36" y="70.45" width="28.09" height="8.33" fill="#d9b676" /><path d="M53.44 70.95 L59.19 66.42 L79.61 66.42 L85.36 70.95Z" fill="#55463f"/><rect x="64.93" y="68.03" width="1.92" height="1.88" fill="#f5f0e0" /><rect x="69.40" y="68.03" width="1.92" height="1.88" fill="#f5f0e0" /><rect x="58.87" y="72.95" width="2.23" height="2.67" fill="#bfe3ee" /><rect x="63.46" y="72.95" width="2.23" height="2.67" fill="#bfe3ee" /><rect x="68.06" y="72.95" width="2.23" height="2.67" fill="#bfe3ee" /><rect x="72.66" y="72.95" width="2.23" height="2.67" fill="#bfe3ee" /><rect x="77.25" y="72.95" width="2.23" height="2.67" fill="#bfe3ee" /><rect x="68.44" y="72.95" width="1.92" height="5.83" fill="#4a3a34" /><ellipse cx="88.72" cy="71.85" rx="1.68" ry="5.67" fill="#6f9a3e"/><rect x="88.37" y="76.26" width="0.70" height="2.52" fill="#5a4a3a" /><rect x="91.76" y="70.45" width="19.96" height="8.33" fill="#c4553f" /><path d="M90.40 70.95 L94.48 66.42 L109.00 66.42 L113.08 70.95Z" fill="#55463f"/><path d="M92.67 71.45 L97.66 65.34 L102.87 71.45Z" fill="#c4553f" stroke="#55463f" stroke-width="0.6"/><rect x="94.26" y="72.95" width="1.59" height="2.67" fill="#bfe3ee" /><rect x="98.34" y="72.95" width="1.59" height="2.67" fill="#bfe3ee" /><rect x="102.42" y="72.95" width="1.59" height="2.67" fill="#bfe3ee" /><rect x="106.50" y="72.95" width="1.59" height="2.67" fill="#bfe3ee" /><rect x="101.06" y="72.95" width="1.36" height="5.83" fill="#4a3a34" /><ellipse cx="115.18" cy="71.85" rx="2.10" ry="5.67" fill="#6f9a3e"/><rect x="114.83" y="76.26" width="0.70" height="2.52" fill="#5a4a3a" /><rect x="63.00" y="25.30" width="11.00" height="11.20" fill="#b5594a" /><rect x="66.30" y="30.34" width="4.40" height="0.80" fill="#f0d0c8" /><rect x="63.00" y="88.70" width="11.00" height="11.30" fill="#b5594a" /><rect x="66.30" y="93.78" width="4.40" height="0.80" fill="#f0d0c8" /><text x="68.50" y="104.50" font-size="5.2" fill="#999" font-family="Liberation Sans"  text-anchor="middle" >Safety &amp; Security <tspan font-weight="bold" fill="#333">Resources</tspan></text><rect x="64.30" y="105.60" width="8.70" height="6.10" fill="#b5594a" /><rect x="66.91" y="108.34" width="3.48" height="0.80" fill="#f0d0c8" /><rect x="10.60" y="111.70" width="33.80" height="17.30" fill="#4a0c14" /><rect x="47.40" y="111.70" width="78.60" height="17.30" fill="#d8ccb4" /><rect x="52.00" y="111.70" width="12.00" height="17.30" fill="#9c8660" /><rect x="100.00" y="111.70" width="26.00" height="5.00" fill="#1c1c1c" /><ellipse cx="87" cy="128" rx="18" ry="8" fill="#587a32"/><ellipse cx="58" cy="129" rx="10" ry="6" fill="#1e3d9c"/><rect x="130.20" y="84.00" width="0.50" height="45.00" fill="#eee" /><rect x="0" y="0" width="206" height="0.8" fill="#777"/><rect x="0" y="0" width="0.8" height="129" fill="#aaa"/></svg><div class="a" style="left:770px;top:157px;width:207px;height:131px;background:#1a1a1a"></div><svg class="a" style="left:770px;top:158px;background:#fff;overflow:hidden" width="206" height="129" viewBox="0 0 206 129"><rect x="6.50" y="16.90" width="51.70" height="79.20" fill="#6dbccc" /><rect x="6.50" y="16.90" width="51.70" height="7.00" fill="#62acbc" /><rect x="10.00" y="19.00" width="17.00" height="3.00" fill="#e8f4f7" /><rect x="44.00" y="18.50" width="12.00" height="4.00" fill="none" stroke="#d8eef3" stroke-width="0.5"/><text x="32.30" y="37.00" font-size="4.8" fill="#fff" font-family="Liberation Sans" font-weight="bold" text-anchor="middle" >Let's make your</text><text x="32.30" y="43.00" font-size="4.8" fill="#fff" font-family="Liberation Sans" font-weight="bold" text-anchor="middle" >community safer.</text><rect x="10.00" y="46.50" width="44.00" height="1.00" fill="#a8d7e1" /><rect x="10.00" y="50.50" width="26.40" height="1.00" fill="#a8d7e1" /><rect x="20.00" y="58.00" width="24.00" height="3.00" fill="none" stroke="#d8eef3" stroke-width="0.5"/><rect x="10.00" y="66.50" width="44.00" height="1.20" fill="#92ccd8" /><rect x="10.00" y="71.50" width="44.00" height="1.20" fill="#92ccd8" /><rect x="6.50" y="89.00" width="51.70" height="7.10" fill="#88ae58" /><rect x="10.42" y="83.80" width="23.76" height="6.20" fill="#d9b676" /><path d="M8.80 84.30 L13.66 80.80 L30.94 80.80 L35.80 84.30Z" fill="#55463f"/><rect x="18.52" y="82.00" width="1.62" height="1.40" fill="#f5f0e0" /><rect x="22.30" y="82.00" width="1.62" height="1.40" fill="#f5f0e0" /><rect x="13.39" y="85.66" width="1.89" height="1.98" fill="#bfe3ee" /><rect x="17.28" y="85.66" width="1.89" height="1.98" fill="#bfe3ee" /><rect x="21.17" y="85.66" width="1.89" height="1.98" fill="#bfe3ee" /><rect x="25.05" y="85.66" width="1.89" height="1.98" fill="#bfe3ee" /><rect x="28.94" y="85.66" width="1.89" height="1.98" fill="#bfe3ee" /><rect x="21.49" y="85.66" width="1.62" height="4.34" fill="#4a3a34" /><rect x="39.08" y="83.80" width="15.84" height="6.20" fill="#c4553f" /><path d="M38.00 84.30 L41.24 80.80 L52.76 80.80 L56.00 84.30Z" fill="#55463f"/><path d="M39.80 84.80 L43.76 80.00 L47.90 84.80Z" fill="#c4553f" stroke="#55463f" stroke-width="0.6"/><rect x="41.06" y="85.66" width="1.26" height="1.98" fill="#bfe3ee" /><rect x="44.30" y="85.66" width="1.26" height="1.98" fill="#bfe3ee" /><rect x="47.54" y="85.66" width="1.26" height="1.98" fill="#bfe3ee" /><rect x="50.78" y="85.66" width="1.26" height="1.98" fill="#bfe3ee" /><rect x="46.46" y="85.66" width="1.08" height="4.34" fill="#4a3a34" /><rect x="28.50" y="96.40" width="8.00" height="7.80" fill="#b5594a" /><rect x="30.90" y="99.91" width="3.20" height="0.80" fill="#f0d0c8" /><text x="32.30" y="107.00" font-size="3.8" fill="#aaa" font-family="Liberation Sans"  text-anchor="middle" >Safety &amp; Security</text><text x="32.30" y="112.00" font-size="3.8" fill="#444" font-family="Liberation Sans" font-weight="bold" text-anchor="middle" >Resources</text><rect x="28.50" y="112.50" width="8.00" height="4.50" fill="#b5594a" /><rect x="30.90" y="114.53" width="3.20" height="0.80" fill="#f0d0c8" /><rect x="8.80" y="117.00" width="46.70" height="12.00" fill="#c9b190" /><rect x="8.80" y="117.00" width="14.00" height="12.00" fill="#4a0c14" /><circle cx="28.50" cy="127.00" r="5.00" fill="#1e3d9c" /><rect x="73.80" y="16.90" width="52.10" height="112.10" fill="#f0efef" /><rect x="96.00" y="16.90" width="8.00" height="7.50" fill="#b5594a" /><rect x="98.40" y="20.27" width="3.20" height="0.80" fill="#f0d0c8" /><text x="99.80" y="28.50" font-size="3.6" fill="#999" font-family="Liberation Sans"  text-anchor="middle" >Mobile Security</text><text x="99.80" y="33.50" font-size="3.6" fill="#555" font-family="Liberation Sans" font-weight="bold" text-anchor="middle" >Monitoring Services</text><rect x="80.00" y="39.00" width="40.00" height="0.90" fill="#d6d2d0" /><rect x="80.00" y="43.00" width="40.00" height="0.90" fill="#d6d2d0" /><rect x="80.00" y="47.00" width="40.00" height="0.90" fill="#d6d2d0" /><rect x="80.00" y="51.00" width="40.00" height="0.90" fill="#d6d2d0" /><rect x="80.00" y="55.00" width="40.00" height="0.90" fill="#d6d2d0" /><rect x="80.00" y="59.00" width="24.00" height="0.90" fill="#d6d2d0" /><rect x="95.00" y="62.00" width="10.00" height="4.50" fill="#b5594a" /><rect x="98.00" y="64.03" width="4.00" height="0.80" fill="#f0d0c8" /><rect x="73.80" y="66.30" width="52.10" height="23.00" fill="#5a7a3a" /><rect x="73.80" y="66.30" width="52.10" height="4.00" fill="#c8c0b0" /><rect x="80.00" y="71.00" width="18.00" height="6.00" fill="#c0c4c8" /><ellipse cx="112" cy="82" rx="14" ry="9" fill="#3e6022"/><text x="76.50" y="94.50" font-size="3.4" fill="#555" font-family="Liberation Sans" font-weight="bold" text-anchor="start" >Security</text><rect x="76.50" y="98.00" width="46.00" height="0.90" fill="#d6d2d0" /><rect x="76.50" y="101.30" width="46.00" height="0.90" fill="#d6d2d0" /><rect x="76.50" y="104.60" width="46.00" height="0.90" fill="#d6d2d0" /><rect x="76.50" y="107.90" width="46.00" height="0.90" fill="#d6d2d0" /><rect x="76.50" y="111.20" width="46.00" height="0.90" fill="#d6d2d0" /><rect x="76.50" y="114.50" width="46.00" height="0.90" fill="#d6d2d0" /><rect x="76.50" y="117.80" width="23.00" height="0.90" fill="#d6d2d0" /><rect x="73.80" y="123.00" width="52.10" height="6.00" fill="#b8b4ae" /><rect x="141.80" y="16.90" width="51.50" height="112.10" fill="#f0efef" /><rect x="141.80" y="16.90" width="51.50" height="30.50" fill="#4e423f" /><rect x="144.00" y="24.00" width="46.00" height="0.70" fill="#857976" /><rect x="144.00" y="27.30" width="46.00" height="0.70" fill="#857976" /><rect x="144.00" y="30.60" width="46.00" height="0.70" fill="#857976" /><rect x="144.00" y="33.90" width="46.00" height="0.70" fill="#857976" /><rect x="144.00" y="37.20" width="27.60" height="0.70" fill="#857976" /><rect x="163.50" y="47.00" width="7.00" height="5.50" fill="#b5594a" /><rect x="165.60" y="49.48" width="2.80" height="0.80" fill="#f0d0c8" /><circle cx="167.80" cy="63.20" r="8.20" fill="#8ab05a" /><path d="M159.6 63.2 A8.2 8.2 0 0 1 176 63.2Z" fill="#8ccde0"/><rect x="163.00" y="57.00" width="6.00" height="9.00" fill="#fff" stroke="#555" stroke-width="0.6"/><rect x="168.00" y="60.00" width="4.00" height="7.00" fill="#fff" stroke="#555" stroke-width="0.6"/><rect x="163.50" y="71.00" width="9.00" height="4.50" fill="#b5594a" /><rect x="166.20" y="73.03" width="3.60" height="0.80" fill="#f0d0c8" /><text x="167.50" y="79.00" font-size="3.6" fill="#666" font-family="Liberation Sans"  text-anchor="middle" >Mobile Access</text><rect x="145.00" y="83.00" width="46.00" height="0.90" fill="#d6d2d0" /><rect x="145.00" y="87.00" width="46.00" height="0.90" fill="#d6d2d0" /><rect x="145.00" y="91.00" width="46.00" height="0.90" fill="#d6d2d0" /><rect x="145.00" y="95.00" width="46.00" height="0.90" fill="#d6d2d0" /><rect x="145.00" y="99.00" width="46.00" height="0.90" fill="#d6d2d0" /><rect x="145.00" y="103.00" width="23.00" height="0.90" fill="#d6d2d0" /><rect x="163.00" y="107.00" width="9.00" height="4.00" fill="#b5594a" /><rect x="165.70" y="108.80" width="3.60" height="0.80" fill="#f0d0c8" /><rect x="145.00" y="112.00" width="46.00" height="0.90" fill="#d6d2d0" /><rect x="145.00" y="115.20" width="46.00" height="0.90" fill="#d6d2d0" /><rect x="145.00" y="118.40" width="46.00" height="0.90" fill="#d6d2d0" /><rect x="145.00" y="121.60" width="46.00" height="0.90" fill="#d6d2d0" /><rect x="145.00" y="124.80" width="27.60" height="0.90" fill="#d6d2d0" /><rect x="0" y="0" width="206" height="0.8" fill="#777"/><rect x="0" y="0" width="0.8" height="129" fill="#aaa"/></svg><div class="a" style="left:990px;top:157px;width:207px;height:131px;background:#1a1a1a"></div><svg class="a" style="left:990px;top:158px;background:#fff;overflow:hidden" width="206" height="129" viewBox="0 0 206 129"><rect x="0.00" y="16.90" width="204.40" height="54.10" fill="#6dbccc" /><text x="6.00" y="28.00" font-size="7.6" fill="#fff" font-family="Liberation Sans" font-weight="bold" text-anchor="start" >Hero Main Copy Homepage</text><rect x="6.00" y="29.80" width="30.00" height="0.90" fill="#9fd2dc" /><text x="6.00" y="41.00" font-size="6.2" fill="#fff" font-family="Liberation Sans" font-weight="bold" text-anchor="start" >Hero Main Copy Subpage</text><rect x="6.00" y="43.00" width="30.00" height="0.90" fill="#9fd2dc" /><text x="6.00" y="52.50" font-size="4.8" fill="#d6eef3" font-family="Liberation Sans"  text-anchor="start" >Hero Sub Copy</text><rect x="6.00" y="54.60" width="30.00" height="0.90" fill="#9fd2dc" /><rect x="6.00" y="61.00" width="19.00" height="1.60" fill="#eaf6f8" /><rect x="6.00" y="65.00" width="38.00" height="0.90" fill="#9fd2dc" /><text x="6.00" y="80.50" font-size="6.4" fill="#999" font-family="Liberation Sans"  text-anchor="start" >Heading</text><rect x="6.00" y="82.30" width="35.00" height="0.90" fill="#cccccc" /><text x="6.00" y="90.50" font-size="3.8" fill="#333" font-family="Liberation Sans" font-weight="bold" text-anchor="start" >Subheading</text><rect x="6.00" y="93.20" width="30.00" height="0.90" fill="#cccccc" /><rect x="6.00" y="100.00" width="40.00" height="1.20" fill="#c8c8c8" /><rect x="6.00" y="104.50" width="60.00" height="0.90" fill="#bcbcbc" /><rect x="6.00" y="110.00" width="12.00" height="0.90" fill="#cccccc" /><rect x="6.00" y="113.80" width="39.00" height="0.90" fill="#bcbcbc" /><rect x="6.00" y="119.30" width="14.00" height="0.90" fill="#ddd" /><rect x="6.00" y="122.80" width="39.00" height="0.90" fill="#bcbcbc" /><rect x="0" y="0" width="206" height="0.8" fill="#777"/><rect x="0" y="0" width="0.8" height="129" fill="#aaa"/></svg><div class="a" style="left:1210px;top:157px;width:207px;height:131px;background:#1a1a1a"></div><svg class="a" style="left:1210px;top:158px;background:#fff;overflow:hidden" width="206" height="129" viewBox="0 0 206 129"><rect x="0.00" y="16.90" width="206.00" height="38.60" fill="#6dbccc" /><text x="6.00" y="26.90" font-size="5.8" fill="#fff" font-family="Liberation Sans" font-weight="bold" text-anchor="start" >Hero Main Copy</text><rect x="6.00" y="29.10" width="30.00" height="0.90" fill="#9fd2dc" /><text x="6.00" y="36.20" font-size="3.8" fill="#d6eef3" font-family="Liberation Sans"  text-anchor="start" >Hero Sub Copy</text><rect x="6.00" y="38.70" width="30.00" height="0.90" fill="#9fd2dc" /><rect x="6.00" y="45.20" width="19.00" height="1.40" fill="#eaf6f8" /><rect x="6.00" y="48.70" width="38.00" height="0.90" fill="#9fd2dc" /><text x="6.00" y="65.30" font-size="5.6" fill="#999" font-family="Liberation Sans"  text-anchor="start" >Heading</text><rect x="6.00" y="67.30" width="36.00" height="0.90" fill="#c8c8c8" /><text x="6.00" y="75.30" font-size="3.6" fill="#333" font-family="Liberation Sans" font-weight="bold" text-anchor="start" >Subheading</text><rect x="6.00" y="77.60" width="30.00" height="0.90" fill="#c8c8c8" /><rect x="6.00" y="83.80" width="39.00" height="1.20" fill="#bcbcbc" /><rect x="6.00" y="88.30" width="60.00" height="0.90" fill="#bcbcbc" /><rect x="6.00" y="93.30" width="12.00" height="0.90" fill="#c8c8c8" /><rect x="6.00" y="97.30" width="39.00" height="0.90" fill="#bcbcbc" /><rect x="6.00" y="102.30" width="14.00" height="0.90" fill="#ddd" /><rect x="6.00" y="106.30" width="39.00" height="0.90" fill="#bcbcbc" /><rect x="0" y="0" width="206" height="0.8" fill="#777"/><rect x="0" y="0" width="0.8" height="129" fill="#aaa"/></svg><div class="a" style="left:105px;top:318px;width:207px;height:131px;background:#1a1a1a"></div><svg class="a" style="left:105px;top:319px;background:#fff;overflow:hidden" width="206" height="129" viewBox="0 0 206 129"><rect x="6.50" y="16.00" width="145.10" height="68.00" fill="#6dbccc" /><ellipse cx="28.26" cy="58.16" rx="8.71" ry="4.76" fill="#7cc3d2"/><ellipse cx="57.28" cy="55.44" rx="10.16" ry="4.76" fill="#7cc3d2"/><ellipse cx="96.46" cy="56.80" rx="8.71" ry="4.76" fill="#7cc3d2"/><ellipse cx="129.83" cy="54.76" rx="10.16" ry="4.76" fill="#7cc3d2"/><rect x="13.00" y="20.30" width="132.00" height="5.40" fill="#5fa6b6" /><rect x="119.00" y="20.80" width="26.00" height="4.20" fill="#c0483a" /><rect x="15.00" y="21.50" width="20.00" height="3.00" fill="#eaf5f8" /><rect x="55.00" y="22.50" width="50.00" height="1.00" fill="#c8e6ec" /><text x="79.05" y="43.00" font-size="5.8" fill="#ffffff" font-family="Liberation Sans" font-weight="bold" text-anchor="middle" >Let's make your community safer.</text><rect x="23.91" y="45.80" width="110.28" height="1.00" fill="#ffffff" opacity="0.32"/><rect x="23.91" y="55.50" width="110.28" height="1.20" fill="#ffffff" opacity="0.22"/><path d="M6.50 80.00 Q79.05 78.00 151.60 80.00 L151.60 84.00 Q79.05 87.60 6.50 84.00Z" fill="#88ae58"/><ellipse cx="37.88" cy="76.06" rx="1.88" ry="5.06" fill="#6f9a3e"/><rect x="37.52" y="80.00" width="0.70" height="2.25" fill="#5a4a3a" /><rect x="41.85" y="74.81" width="19.80" height="7.44" fill="#dcdcdc" /><path d="M40.50 75.31 L44.55 71.21 L58.95 71.21 L63.00 75.31Z" fill="#55463f"/><path d="M50.62 75.81 L55.35 70.25 L60.75 75.81Z" fill="#dcdcdc" stroke="#55463f" stroke-width="0.6"/><rect x="44.32" y="77.04" width="1.58" height="2.38" fill="#bfe3ee" /><rect x="48.37" y="77.04" width="1.58" height="2.38" fill="#bfe3ee" /><rect x="52.42" y="77.04" width="1.58" height="2.38" fill="#bfe3ee" /><rect x="56.47" y="77.04" width="1.58" height="2.38" fill="#bfe3ee" /><rect x="51.08" y="77.04" width="1.35" height="5.21" fill="#4a3a34" /><ellipse cx="65.62" cy="76.06" rx="1.88" ry="5.06" fill="#6f9a3e"/><rect x="65.28" y="80.00" width="0.70" height="2.25" fill="#5a4a3a" /><rect x="68.46" y="74.81" width="25.08" height="7.44" fill="#d9b676" /><path d="M66.75 75.31 L71.88 71.21 L90.12 71.21 L95.25 75.31Z" fill="#55463f"/><rect x="77.01" y="72.65" width="1.71" height="1.68" fill="#f5f0e0" /><rect x="81.00" y="72.65" width="1.71" height="1.68" fill="#f5f0e0" /><rect x="71.59" y="77.04" width="2.00" height="2.38" fill="#bfe3ee" /><rect x="75.70" y="77.04" width="2.00" height="2.38" fill="#bfe3ee" /><rect x="79.80" y="77.04" width="2.00" height="2.38" fill="#bfe3ee" /><rect x="83.91" y="77.04" width="2.00" height="2.38" fill="#bfe3ee" /><rect x="88.01" y="77.04" width="2.00" height="2.38" fill="#bfe3ee" /><rect x="80.14" y="77.04" width="1.71" height="5.21" fill="#4a3a34" /><ellipse cx="98.25" cy="76.06" rx="1.50" ry="5.06" fill="#6f9a3e"/><rect x="97.90" y="80.00" width="0.70" height="2.25" fill="#5a4a3a" /><rect x="100.97" y="74.81" width="17.82" height="7.44" fill="#c4553f" /><path d="M99.75 75.31 L103.39 71.21 L116.36 71.21 L120.00 75.31Z" fill="#55463f"/><path d="M101.78 75.81 L106.23 70.25 L110.89 75.81Z" fill="#c4553f" stroke="#55463f" stroke-width="0.6"/><rect x="103.19" y="77.04" width="1.42" height="2.38" fill="#bfe3ee" /><rect x="106.84" y="77.04" width="1.42" height="2.38" fill="#bfe3ee" /><rect x="110.48" y="77.04" width="1.42" height="2.38" fill="#bfe3ee" /><rect x="114.13" y="77.04" width="1.42" height="2.38" fill="#bfe3ee" /><rect x="109.27" y="77.04" width="1.21" height="5.21" fill="#4a3a34" /><ellipse cx="121.88" cy="76.06" rx="1.88" ry="5.06" fill="#6f9a3e"/><rect x="121.53" y="80.00" width="0.70" height="2.25" fill="#5a4a3a" /><text x="79.00" y="101.60" font-size="4.6" fill="#999" font-family="Liberation Sans"  text-anchor="middle" >Safety &amp; Security <tspan font-weight="bold" fill="#333">Resources</tspan></text><rect x="12.20" y="108.30" width="8.00" height="20.70" fill="#4a0c14" /><defs></defs><rect x="20.20" y="108.30" width="55.99" height="20.70" fill="#c9b190" /><rect x="29.53" y="108.30" width="13.33" height="20.70" fill="#9c8866" /><rect x="52.19" y="108.30" width="18.66" height="20.70" fill="#e8e2d6" /><ellipse cx="58.86" cy="126.93" rx="12.00" ry="9.31" fill="#6c7a3a"/><rect x="69.52" y="108.30" width="6.67" height="6.21" fill="#1a1a1a" /><ellipse cx="32.20" cy="130.03" rx="9.33" ry="9.31" fill="#1e3d9c"/><rect x="77.52" y="108.30" width="29.33" height="20.70" fill="#3a86d0" /><rect x="82.85" y="116.58" width="20.53" height="12.42" fill="#2d4c7a" /><rect x="108.18" y="108.30" width="37.32" height="20.70" fill="#dcd8d0" /><rect x="116.17" y="110.37" width="10.66" height="8.28" fill="#a8a49c" /><rect x="151.60" y="83.00" width="0.50" height="46.00" fill="#eee" /><rect x="126.00" y="40.30" width="34.00" height="0.40" fill="#ddd" /><rect x="160.00" y="33.50" width="10.80" height="0.80" fill="#8a8a8a" /><rect x="160.00" y="36.70" width="16.20" height="0.70" fill="#d2d2d2" /><rect x="160.00" y="39.90" width="10.80" height="0.70" fill="#d2d2d2" /><rect x="160.00" y="46.50" width="10.80" height="0.80" fill="#8a8a8a" /><rect x="160.00" y="49.70" width="16.20" height="0.70" fill="#d2d2d2" /><rect x="160.00" y="52.90" width="10.80" height="0.70" fill="#d2d2d2" /><rect x="160.00" y="100.00" width="10.80" height="0.80" fill="#8a8a8a" /><rect x="160.00" y="103.20" width="16.20" height="0.70" fill="#d2d2d2" /><rect x="160.00" y="106.40" width="10.80" height="0.70" fill="#d2d2d2" /><rect x="0" y="0" width="206" height="0.8" fill="#777"/><rect x="0" y="0" width="0.8" height="129" fill="#aaa"/></svg><div class="a" style="left:330px;top:318px;width:207px;height:131px;background:#1a1a1a"></div><svg class="a" style="left:330px;top:319px;background:#fff;overflow:hidden" width="206" height="129" viewBox="0 0 206 129"><rect x="6.50" y="16.00" width="144.80" height="113.00" fill="#4e423f" /><path d="M6.5 16 L151.3 16 L151.3 30.5 Q79 24 6.5 30.5Z" fill="#6dbccc"/><ellipse cx="45" cy="18" rx="22" ry="3" fill="#a5d9e3" opacity="0.7"/><rect x="22.00" y="16.00" width="44.00" height="1.80" fill="#4a4a4a" /><rect x="6.50" y="56.80" width="144.80" height="72.20" fill="#473b38" /><text x="79.00" y="40.00" font-size="4.6" fill="#eee" font-family="Liberation Sans"  text-anchor="middle" >Things to <tspan font-weight="bold">Look for</tspan></text><rect x="25.00" y="44.50" width="107.00" height="0.65" fill="#857976" /><rect x="25.00" y="47.70" width="107.00" height="0.65" fill="#857976" /><rect x="25.00" y="50.90" width="53.50" height="0.65" fill="#857976" /><rect x="12.20" y="62.00" width="133.30" height="6.40" fill="#3b312f" /><rect x="16.00" y="64.50" width="120.00" height="0.90" fill="#7a6e6a" /><rect x="16.50" y="67.50" width="13.00" height="0.60" fill="#5ab8cc" /><rect x="12.20" y="73.00" width="66.00" height="46.80" fill="#cfcfcf" /><rect x="12.20" y="73.00" width="39.60" height="46.80" fill="#dedbd6" /><rect x="15.50" y="80.02" width="5.28" height="35.10" fill="#f8f8f8" /><rect x="24.08" y="78.62" width="5.94" height="37.44" fill="#f8f8f8" /><rect x="33.98" y="82.36" width="3.96" height="32.76" fill="#f4f4f4" /><rect x="43.88" y="84.70" width="4.62" height="35.10" fill="#7d7a70" /><rect x="12.20" y="73.00" width="39.60" height="3.74" fill="#f0f0f0" /><rect x="53.12" y="86.10" width="21.12" height="19.66" fill="#f6f6f6" /><rect x="55.76" y="88.91" width="15.84" height="10.30" fill="#5a6a3a" /><rect x="58.40" y="89.85" width="7.92" height="3.74" fill="#c8a050" /><circle cx="86.90" cy="76.50" r="2.40" fill="#5ab8d0" /><rect x="90.50" y="75.80" width="18.00" height="1.40" fill="#eee" /><rect x="84.60" y="82.00" width="48.40" height="0.65" fill="#8e8480" /><rect x="84.60" y="84.40" width="48.40" height="0.65" fill="#8e8480" /><rect x="84.60" y="86.80" width="48.40" height="0.65" fill="#8e8480" /><rect x="84.60" y="89.20" width="48.40" height="0.65" fill="#8e8480" /><rect x="84.60" y="91.60" width="48.40" height="0.65" fill="#8e8480" /><rect x="84.60" y="94.00" width="48.40" height="0.65" fill="#8e8480" /><rect x="84.60" y="96.40" width="19.36" height="0.65" fill="#8e8480" /><rect x="84.60" y="116.00" width="24.40" height="3.80" fill="#d6cfcc" /><rect x="133.00" y="45.50" width="33.00" height="0.40" fill="#ccc" /><rect x="133.00" y="65.00" width="33.00" height="0.40" fill="#ccc" /><rect x="133.00" y="76.50" width="33.00" height="0.40" fill="#ccc" /><rect x="133.00" y="90.30" width="33.00" height="0.40" fill="#ccc" /><rect x="133.00" y="117.50" width="33.00" height="0.40" fill="#ccc" /><rect x="168.00" y="44.70" width="10.80" height="0.80" fill="#8a8a8a" /><rect x="168.00" y="47.90" width="16.20" height="0.70" fill="#d2d2d2" /><rect x="168.00" y="51.10" width="10.80" height="0.70" fill="#d2d2d2" /><rect x="168.00" y="61.50" width="10.80" height="0.80" fill="#8a8a8a" /><rect x="168.00" y="64.70" width="16.20" height="0.70" fill="#d2d2d2" /><rect x="168.00" y="67.90" width="10.80" height="0.70" fill="#d2d2d2" /><rect x="168.00" y="76.50" width="10.80" height="0.80" fill="#8a8a8a" /><rect x="168.00" y="79.70" width="16.20" height="0.70" fill="#d2d2d2" /><rect x="168.00" y="82.90" width="10.80" height="0.70" fill="#d2d2d2" /><rect x="168.00" y="90.00" width="10.80" height="0.80" fill="#8a8a8a" /><rect x="168.00" y="93.20" width="16.20" height="0.70" fill="#d2d2d2" /><rect x="168.00" y="96.40" width="10.80" height="0.70" fill="#d2d2d2" /><rect x="168.00" y="117.50" width="10.80" height="0.80" fill="#8a8a8a" /><rect x="168.00" y="120.70" width="16.20" height="0.70" fill="#d2d2d2" /><rect x="168.00" y="123.90" width="10.80" height="0.70" fill="#d2d2d2" /><rect x="0" y="0" width="206" height="0.8" fill="#777"/><rect x="0" y="0" width="0.8" height="129" fill="#aaa"/></svg><div class="a" style="left:550px;top:318px;width:207px;height:131px;background:#1a1a1a"></div><svg class="a" style="left:550px;top:319px;background:#fff;overflow:hidden" width="206" height="129" viewBox="0 0 206 129"><rect x="6.50" y="16.00" width="93.00" height="51.00" fill="#6dbccc" /><ellipse cx="20.45" cy="47.62" rx="5.58" ry="3.57" fill="#7cc3d2"/><ellipse cx="39.05" cy="45.58" rx="6.51" ry="3.57" fill="#7cc3d2"/><ellipse cx="64.16" cy="46.60" rx="5.58" ry="3.57" fill="#7cc3d2"/><ellipse cx="85.55" cy="45.07" rx="6.51" ry="3.57" fill="#7cc3d2"/><rect x="6.50" y="16.00" width="93.00" height="4.80" fill="#5fa6b6" /><rect x="62.00" y="17.00" width="24.40" height="3.60" fill="#c0483a" /><rect x="9.00" y="17.50" width="14.00" height="2.50" fill="#eaf5f8" /><text x="53.00" y="34.30" font-size="4.8" fill="#ffffff" font-family="Liberation Sans" font-weight="bold" text-anchor="middle" >Let's make your community safer.</text><rect x="17.66" y="37.00" width="70.68" height="1.00" fill="#ffffff" opacity="0.32"/><rect x="17.66" y="45.50" width="70.68" height="1.20" fill="#ffffff" opacity="0.22"/><path d="M6.50 61.00 Q53.00 58.00 99.50 61.00 L99.50 67.00 Q53.00 72.40 6.50 67.00Z" fill="#88ae58"/><ellipse cx="18.05" cy="57.43" rx="1.55" ry="4.19" fill="#6f9a3e"/><rect x="17.70" y="60.68" width="0.70" height="1.86" fill="#5a4a3a" /><rect x="21.34" y="56.39" width="16.37" height="6.15" fill="#dcdcdc" /><path d="M20.22 56.89 L23.57 53.41 L35.47 53.41 L38.82 56.89Z" fill="#55463f"/><path d="M28.59 57.39 L32.50 52.62 L36.96 57.39Z" fill="#dcdcdc" stroke="#55463f" stroke-width="0.6"/><rect x="23.38" y="58.23" width="1.30" height="1.97" fill="#bfe3ee" /><rect x="26.73" y="58.23" width="1.30" height="1.97" fill="#bfe3ee" /><rect x="30.08" y="58.23" width="1.30" height="1.97" fill="#bfe3ee" /><rect x="33.43" y="58.23" width="1.30" height="1.97" fill="#bfe3ee" /><rect x="28.96" y="58.23" width="1.12" height="4.31" fill="#4a3a34" /><ellipse cx="40.99" cy="57.43" rx="1.55" ry="4.19" fill="#6f9a3e"/><rect x="40.64" y="60.68" width="0.70" height="1.86" fill="#5a4a3a" /><rect x="43.33" y="56.39" width="20.73" height="6.15" fill="#d9b676" /><path d="M41.92 56.89 L46.16 53.41 L61.24 53.41 L65.48 56.89Z" fill="#55463f"/><rect x="50.40" y="54.60" width="1.41" height="1.39" fill="#f5f0e0" /><rect x="53.70" y="54.60" width="1.41" height="1.39" fill="#f5f0e0" /><rect x="45.93" y="58.23" width="1.65" height="1.97" fill="#bfe3ee" /><rect x="49.32" y="58.23" width="1.65" height="1.97" fill="#bfe3ee" /><rect x="52.71" y="58.23" width="1.65" height="1.97" fill="#bfe3ee" /><rect x="56.10" y="58.23" width="1.65" height="1.97" fill="#bfe3ee" /><rect x="59.50" y="58.23" width="1.65" height="1.97" fill="#bfe3ee" /><rect x="52.99" y="58.23" width="1.41" height="4.31" fill="#4a3a34" /><ellipse cx="67.96" cy="57.43" rx="1.24" ry="4.19" fill="#6f9a3e"/><rect x="67.61" y="60.68" width="0.70" height="1.86" fill="#5a4a3a" /><rect x="70.20" y="56.39" width="14.73" height="6.15" fill="#c4553f" /><path d="M69.20 56.89 L72.21 53.41 L82.93 53.41 L85.94 56.89Z" fill="#55463f"/><path d="M70.87 57.39 L74.56 52.62 L78.41 57.39Z" fill="#c4553f" stroke="#55463f" stroke-width="0.6"/><rect x="72.05" y="58.23" width="1.17" height="1.97" fill="#bfe3ee" /><rect x="75.06" y="58.23" width="1.17" height="1.97" fill="#bfe3ee" /><rect x="78.07" y="58.23" width="1.17" height="1.97" fill="#bfe3ee" /><rect x="81.09" y="58.23" width="1.17" height="1.97" fill="#bfe3ee" /><rect x="77.07" y="58.23" width="1.00" height="4.31" fill="#4a3a34" /><ellipse cx="87.49" cy="57.43" rx="1.55" ry="4.19" fill="#6f9a3e"/><rect x="87.14" y="60.68" width="0.70" height="1.86" fill="#5a4a3a" /><text x="53.00" y="80.80" font-size="4.2" fill="#999" font-family="Liberation Sans"  text-anchor="middle" >Safety &amp; Security <tspan font-weight="bold" fill="#333">Resources</tspan></text><rect x="9.50" y="86.00" width="86.50" height="43.00" fill="#d8ccb4" /><rect x="9.50" y="86.60" width="25.50" height="20.40" fill="#4a0c18" /><rect x="60.00" y="86.00" width="12.00" height="18.00" fill="#9c8a6c" /><rect x="80.00" y="86.00" width="16.00" height="5.00" fill="#222" /><ellipse cx="78" cy="102" rx="16" ry="10" fill="#6a8a3a"/><rect x="9.50" y="111.00" width="86.50" height="11.50" fill="#c83848" /><circle cx="63.38" cy="118.90" r="1.85" fill="#f0f0f0" /><circle cx="82.19" cy="119.31" r="1.20" fill="#f0f0f0" /><circle cx="87.43" cy="111.36" r="1.46" fill="#e05060" /><circle cx="42.44" cy="111.22" r="1.20" fill="#e05060" /><circle cx="44.81" cy="112.18" r="1.94" fill="#f4c0c0" /><circle cx="23.31" cy="119.57" r="1.07" fill="#f4c0c0" /><circle cx="20.46" cy="110.02" r="1.95" fill="#e05060" /><circle cx="76.42" cy="121.52" r="1.10" fill="#e05060" /><circle cx="34.52" cy="121.54" r="1.55" fill="#e05060" /><circle cx="25.21" cy="121.62" r="1.14" fill="#f4c0c0" /><circle cx="35.35" cy="114.33" r="1.10" fill="#e05060" /><circle cx="32.32" cy="113.98" r="1.88" fill="#f0f0f0" /><circle cx="61.05" cy="118.49" r="0.98" fill="#a02030" /><circle cx="80.30" cy="115.77" r="1.28" fill="#f4c0c0" /><circle cx="50.37" cy="112.11" r="1.21" fill="#f0f0f0" /><circle cx="91.61" cy="114.29" r="1.39" fill="#f4c0c0" /><circle cx="41.17" cy="116.94" r="0.91" fill="#f0f0f0" /><circle cx="70.72" cy="117.48" r="2.05" fill="#f0f0f0" /><circle cx="74.87" cy="121.16" r="2.03" fill="#a02030" /><circle cx="53.83" cy="120.71" r="1.20" fill="#f4c0c0" /><circle cx="18.85" cy="118.98" r="1.86" fill="#a02030" /><circle cx="12.67" cy="121.35" r="1.01" fill="#a02030" /><circle cx="53.86" cy="114.35" r="1.08" fill="#a02030" /><circle cx="89.44" cy="116.54" r="1.27" fill="#a02030" /><circle cx="35.98" cy="119.59" r="1.65" fill="#a02030" /><circle cx="95.72" cy="111.94" r="0.96" fill="#f4c0c0" /><circle cx="12.25" cy="118.89" r="1.31" fill="#a02030" /><circle cx="48.92" cy="115.06" r="0.97" fill="#f0f0f0" /><circle cx="78.84" cy="114.01" r="1.15" fill="#e05060" /><circle cx="64.03" cy="119.46" r="1.03" fill="#f4c0c0" /><circle cx="41.76" cy="110.71" r="1.40" fill="#e05060" /><circle cx="48.70" cy="121.99" r="1.92" fill="#f4c0c0" /><circle cx="92.55" cy="118.27" r="1.28" fill="#a02030" /><circle cx="34.67" cy="114.85" r="1.08" fill="#f4c0c0" /><circle cx="80.61" cy="116.38" r="1.12" fill="#f4c0c0" /><circle cx="84.56" cy="112.16" r="1.49" fill="#a02030" /><circle cx="14.96" cy="119.54" r="1.33" fill="#f0f0f0" /><circle cx="75.21" cy="114.36" r="1.75" fill="#a02030" /><circle cx="81.75" cy="113.18" r="2.08" fill="#a02030" /><circle cx="92.27" cy="114.08" r="1.11" fill="#f0f0f0" /><circle cx="50.53" cy="119.28" r="1.29" fill="#a02030" /><circle cx="49.54" cy="119.80" r="1.68" fill="#a02030" /><circle cx="39.59" cy="117.73" r="1.79" fill="#f4c0c0" /><circle cx="39.78" cy="120.11" r="1.94" fill="#f4c0c0" /><circle cx="93.93" cy="121.48" r="1.52" fill="#e05060" /><circle cx="26.68" cy="114.34" r="1.92" fill="#a02030" /><circle cx="69.31" cy="118.64" r="1.78" fill="#e05060" /><circle cx="62.85" cy="121.23" r="1.52" fill="#f4c0c0" /><circle cx="35.68" cy="116.64" r="1.94" fill="#a02030" /><circle cx="71.82" cy="110.33" r="1.09" fill="#f4c0c0" /><circle cx="63.48" cy="112.17" r="1.81" fill="#e05060" /><circle cx="64.07" cy="110.50" r="1.47" fill="#e05060" /><circle cx="23.84" cy="120.70" r="1.03" fill="#e05060" /><circle cx="51.25" cy="116.58" r="1.40" fill="#a02030" /><circle cx="42.40" cy="117.34" r="1.61" fill="#e05060" /><circle cx="71.61" cy="114.49" r="1.32" fill="#a02030" /><circle cx="83.53" cy="120.40" r="1.73" fill="#a02030" /><circle cx="92.92" cy="116.60" r="1.26" fill="#a02030" /><circle cx="56.66" cy="114.07" r="1.60" fill="#a02030" /><circle cx="80.30" cy="115.03" r="1.88" fill="#a02030" /><rect x="9.50" y="104.00" width="86.50" height="7.00" fill="#d9c4a0" opacity="0.6"/><rect x="9.50" y="111.00" width="86.50" height="5.00" fill="#e8dcc8" opacity="0.35"/><rect x="9.50" y="122.50" width="86.50" height="6.50" fill="#7a7472" /><circle cx="46.00" cy="102.00" r="8.50" fill="#1c3f9c" /><text x="46.00" y="104.00" font-size="5" fill="#fff" font-family="Liberation Sans" font-weight="bold" text-anchor="middle" >ADT</text><rect x="99.50" y="66.00" width="0.50" height="63.00" fill="#eee" /><rect x="107.00" y="25.50" width="10.80" height="0.80" fill="#8a8a8a" /><rect x="107.00" y="28.70" width="16.20" height="0.70" fill="#d2d2d2" /><rect x="107.00" y="31.90" width="10.80" height="0.70" fill="#d2d2d2" /><rect x="107.00" y="37.00" width="10.80" height="0.80" fill="#8a8a8a" /><rect x="107.00" y="40.20" width="16.20" height="0.70" fill="#d2d2d2" /><rect x="107.00" y="43.40" width="10.80" height="0.70" fill="#d2d2d2" /><rect x="107.00" y="79.00" width="10.80" height="0.80" fill="#8a8a8a" /><rect x="107.00" y="82.20" width="16.20" height="0.70" fill="#d2d2d2" /><rect x="107.00" y="85.40" width="10.80" height="0.70" fill="#d2d2d2" /><rect x="107.00" y="118.00" width="10.80" height="0.80" fill="#8a8a8a" /><rect x="107.00" y="121.20" width="16.20" height="0.70" fill="#d2d2d2" /><rect x="107.00" y="124.40" width="10.80" height="0.70" fill="#d2d2d2" /><rect x="0" y="0" width="206" height="0.8" fill="#777"/><rect x="0" y="0" width="0.8" height="129" fill="#aaa"/></svg><div class="a" style="left:770px;top:318px;width:207px;height:131px;background:#1a1a1a"></div><svg class="a" style="left:770px;top:319px;background:#fff;overflow:hidden" width="206" height="129" viewBox="0 0 206 129"><rect x="6.50" y="16.00" width="92.50" height="113.00" fill="#4e423f" /><rect x="6.50" y="42.00" width="92.50" height="87.00" fill="#473b38" /><text x="52.50" y="23.50" font-size="4.4" fill="#eee" font-family="Liberation Sans"  text-anchor="middle" >Things to <tspan font-weight="bold">Look for</tspan></text><rect x="10.00" y="28.20" width="86.00" height="0.65" fill="#857976" /><rect x="10.00" y="31.40" width="86.00" height="0.65" fill="#857976" /><rect x="10.00" y="34.60" width="60.20" height="0.65" fill="#857976" /><rect x="9.50" y="48.00" width="86.90" height="14.30" fill="#3b312f" /><rect x="22.00" y="51.50" width="62.00" height="0.90" fill="#7a6e6a" /><rect x="22.00" y="54.50" width="13.00" height="0.60" fill="#5ab8cc" /><rect x="22.00" y="57.50" width="60.00" height="0.90" fill="#7a6e6a" /><rect x="9.20" y="65.60" width="87.20" height="36.60" fill="#cfcfcf" /><rect x="9.20" y="65.60" width="52.32" height="36.60" fill="#dedbd6" /><rect x="13.56" y="71.09" width="6.98" height="27.45" fill="#f8f8f8" /><rect x="24.90" y="69.99" width="7.85" height="29.28" fill="#f8f8f8" /><rect x="37.98" y="72.92" width="5.23" height="25.62" fill="#f4f4f4" /><rect x="51.06" y="74.75" width="6.10" height="27.45" fill="#7d7a70" /><rect x="9.20" y="65.60" width="52.32" height="2.93" fill="#f0f0f0" /><rect x="63.26" y="75.85" width="27.90" height="15.37" fill="#f6f6f6" /><rect x="66.75" y="78.04" width="20.93" height="8.05" fill="#5a6a3a" /><rect x="70.24" y="78.78" width="10.46" height="2.93" fill="#c8a050" /><rect x="76.00" y="98.00" width="20.00" height="4.00" fill="#3b312f" /><circle cx="11.70" cy="108.00" r="2.50" fill="#5ab8d0" /><rect x="15.00" y="107.50" width="18.00" height="1.40" fill="#eee" /><rect x="9.50" y="114.00" width="86.00" height="0.65" fill="#8e8480" /><rect x="9.50" y="116.40" width="86.00" height="0.65" fill="#8e8480" /><rect x="9.50" y="118.80" width="86.00" height="0.65" fill="#8e8480" /><rect x="9.50" y="121.20" width="51.60" height="0.65" fill="#8e8480" /><rect x="23.00" y="126.00" width="28.00" height="3.00" fill="#d6cfcc" /><rect x="54.00" y="126.00" width="28.00" height="3.00" fill="#d6cfcc" /><rect x="70.00" y="21.50" width="33.00" height="0.40" fill="#ccc" /><rect x="70.00" y="32.00" width="33.00" height="0.40" fill="#ccc" /><rect x="70.00" y="51.50" width="33.00" height="0.40" fill="#ccc" /><rect x="70.00" y="108.50" width="33.00" height="0.40" fill="#ccc" /><rect x="107.60" y="21.00" width="10.80" height="0.80" fill="#8a8a8a" /><rect x="107.60" y="24.20" width="16.20" height="0.70" fill="#d2d2d2" /><rect x="107.60" y="27.40" width="10.80" height="0.70" fill="#d2d2d2" /><rect x="107.60" y="31.50" width="10.80" height="0.80" fill="#8a8a8a" /><rect x="107.60" y="34.70" width="16.20" height="0.70" fill="#d2d2d2" /><rect x="107.60" y="37.90" width="10.80" height="0.70" fill="#d2d2d2" /><rect x="107.60" y="51.50" width="10.80" height="0.80" fill="#8a8a8a" /><rect x="107.60" y="54.70" width="16.20" height="0.70" fill="#d2d2d2" /><rect x="107.60" y="57.90" width="10.80" height="0.70" fill="#d2d2d2" /><rect x="107.60" y="93.00" width="10.80" height="0.80" fill="#8a8a8a" /><rect x="107.60" y="96.20" width="16.20" height="0.70" fill="#d2d2d2" /><rect x="107.60" y="99.40" width="10.80" height="0.70" fill="#d2d2d2" /><rect x="107.60" y="105.00" width="10.80" height="0.80" fill="#8a8a8a" /><rect x="107.60" y="108.20" width="16.20" height="0.70" fill="#d2d2d2" /><rect x="107.60" y="111.40" width="10.80" height="0.70" fill="#d2d2d2" /><rect x="107.60" y="117.00" width="10.80" height="0.80" fill="#8a8a8a" /><rect x="107.60" y="120.20" width="16.20" height="0.70" fill="#d2d2d2" /><rect x="107.60" y="123.40" width="10.80" height="0.70" fill="#d2d2d2" /><rect x="0" y="0" width="206" height="0.8" fill="#777"/><rect x="0" y="0" width="0.8" height="129" fill="#aaa"/></svg><div class="a" style="left:990px;top:318px;width:207px;height:131px;background:#1a1a1a"></div><svg class="a" style="left:990px;top:319px;background:#fff;overflow:hidden" width="206" height="129" viewBox="0 0 206 129"><rect x="6.50" y="16.00" width="38.50" height="59.00" fill="#6dbccc" /><rect x="6.50" y="16.00" width="38.50" height="5.00" fill="#62acbc" /><rect x="8.00" y="17.50" width="12.00" height="2.00" fill="#eaf5f8" /><text x="25.70" y="31.00" font-size="3.6" fill="#fff" font-family="Liberation Sans" font-weight="bold" text-anchor="middle" >Let's make your</text><text x="25.70" y="36.00" font-size="3.6" fill="#fff" font-family="Liberation Sans" font-weight="bold" text-anchor="middle" >community safer.</text><rect x="9.00" y="38.50" width="33.00" height="0.90" fill="#a8d7e1" /><rect x="9.00" y="41.80" width="33.00" height="0.90" fill="#a8d7e1" /><rect x="17.00" y="47.00" width="17.00" height="2.50" fill="none" stroke="#d8eef3" stroke-width="0.4"/><rect x="9.00" y="53.00" width="33.00" height="0.90" fill="#92ccd8" /><rect x="9.00" y="57.00" width="33.00" height="0.90" fill="#92ccd8" /><rect x="6.50" y="71.00" width="38.50" height="4.00" fill="#88ae58" /><rect x="9.20" y="66.23" width="17.60" height="5.27" fill="#d9b676" /><path d="M8.00 66.73 L11.60 63.68 L24.40 63.68 L28.00 66.73Z" fill="#55463f"/><rect x="15.20" y="64.70" width="1.20" height="1.19" fill="#f5f0e0" /><rect x="18.00" y="64.70" width="1.20" height="1.19" fill="#f5f0e0" /><rect x="11.40" y="67.81" width="1.40" height="1.69" fill="#bfe3ee" /><rect x="14.28" y="67.81" width="1.40" height="1.69" fill="#bfe3ee" /><rect x="17.16" y="67.81" width="1.40" height="1.69" fill="#bfe3ee" /><rect x="20.04" y="67.81" width="1.40" height="1.69" fill="#bfe3ee" /><rect x="22.92" y="67.81" width="1.40" height="1.69" fill="#bfe3ee" /><rect x="17.40" y="67.81" width="1.20" height="3.69" fill="#4a3a34" /><rect x="29.84" y="66.23" width="12.32" height="5.27" fill="#c4553f" /><path d="M29.00 66.73 L31.52 63.68 L40.48 63.68 L43.00 66.73Z" fill="#55463f"/><path d="M30.40 67.23 L33.48 63.00 L36.70 67.23Z" fill="#c4553f" stroke="#55463f" stroke-width="0.6"/><rect x="31.38" y="67.81" width="0.98" height="1.69" fill="#bfe3ee" /><rect x="33.90" y="67.81" width="0.98" height="1.69" fill="#bfe3ee" /><rect x="36.42" y="67.81" width="0.98" height="1.69" fill="#bfe3ee" /><rect x="38.94" y="67.81" width="0.98" height="1.69" fill="#bfe3ee" /><rect x="35.58" y="67.81" width="0.84" height="3.69" fill="#4a3a34" /><text x="25.70" y="83.50" font-size="2.8" fill="#aaa" font-family="Liberation Sans"  text-anchor="middle" >Safety &amp; Security</text><text x="25.70" y="87.50" font-size="2.8" fill="#444" font-family="Liberation Sans" font-weight="bold" text-anchor="middle" >Resources</text><rect x="8.00" y="91.80" width="35.60" height="23.90" fill="#c9b190" /><rect x="8.00" y="91.80" width="10.00" height="8.00" fill="#4a0c18" /><ellipse cx="25.7" cy="104" rx="17.8" ry="4" fill="#d23c4a"/><rect x="8.00" y="107.60" width="35.60" height="8.10" fill="#857c78" /><circle cx="22.50" cy="97.00" r="3.40" fill="#1c3f9c" /><rect x="8.00" y="118.00" width="35.60" height="11.00" fill="#3a86d0" /><rect x="12.00" y="122.00" width="26.00" height="7.00" fill="#2d4c7a" /><rect x="52.80" y="25.70" width="12.00" height="0.80" fill="#8a8a8a" /><rect x="52.80" y="28.90" width="18.00" height="0.70" fill="#d2d2d2" /><rect x="52.80" y="32.10" width="12.00" height="0.70" fill="#d2d2d2" /><rect x="52.80" y="38.00" width="12.00" height="0.80" fill="#8a8a8a" /><rect x="52.80" y="41.20" width="18.00" height="0.70" fill="#d2d2d2" /><rect x="52.80" y="44.40" width="12.00" height="0.70" fill="#d2d2d2" /><rect x="52.80" y="82.00" width="15.00" height="0.80" fill="#8a8a8a" /><rect x="52.80" y="85.20" width="22.50" height="0.70" fill="#d2d2d2" /><rect x="52.80" y="88.40" width="15.00" height="0.70" fill="#d2d2d2" /><rect x="52.80" y="109.00" width="15.00" height="0.80" fill="#8a8a8a" /><rect x="52.80" y="112.20" width="22.50" height="0.70" fill="#d2d2d2" /><rect x="52.80" y="115.40" width="15.00" height="0.70" fill="#d2d2d2" /><rect x="93.00" y="16.00" width="39.60" height="111.00" fill="#f0efef" /><text x="112.80" y="24.00" font-size="2.8" fill="#aaa" font-family="Liberation Sans"  text-anchor="middle" >Mobile Security</text><text x="112.80" y="28.00" font-size="2.8" fill="#555" font-family="Liberation Sans" font-weight="bold" text-anchor="middle" >Monitoring Services</text><rect x="97.00" y="32.00" width="32.00" height="0.80" fill="#d6d2d0" /><rect x="97.00" y="35.00" width="32.00" height="0.80" fill="#d6d2d0" /><rect x="97.00" y="38.00" width="32.00" height="0.80" fill="#d6d2d0" /><rect x="97.00" y="41.00" width="32.00" height="0.80" fill="#d6d2d0" /><rect x="97.00" y="44.00" width="32.00" height="0.80" fill="#d6d2d0" /><rect x="97.00" y="47.00" width="19.20" height="0.80" fill="#d6d2d0" /><rect x="93.50" y="53.50" width="38.50" height="17.00" fill="#5a7a3a" /><rect x="93.50" y="53.50" width="38.50" height="3.00" fill="#c8c0b0" /><ellipse cx="122" cy="64" rx="10" ry="6" fill="#3e6022"/><rect x="96.00" y="58.00" width="14.00" height="5.00" fill="#c0c4c8" /><text x="95.00" y="74.50" font-size="2.6" fill="#555" font-family="Liberation Sans" font-weight="bold" text-anchor="start" >Security</text><rect x="95.00" y="77.00" width="35.00" height="0.80" fill="#d6d2d0" /><rect x="95.00" y="79.40" width="35.00" height="0.80" fill="#d6d2d0" /><rect x="95.00" y="81.80" width="35.00" height="0.80" fill="#d6d2d0" /><rect x="95.00" y="84.20" width="35.00" height="0.80" fill="#d6d2d0" /><rect x="95.00" y="86.60" width="35.00" height="0.80" fill="#d6d2d0" /><rect x="95.00" y="89.00" width="17.50" height="0.80" fill="#d6d2d0" /><rect x="93.50" y="96.00" width="38.50" height="17.40" fill="#b8b0a4" /><rect x="96.00" y="104.00" width="22.00" height="9.00" fill="#f2f2f2" /><rect x="118.00" y="98.00" width="12.00" height="10.00" fill="#d8d4cc" /><rect x="93.50" y="110.00" width="38.50" height="3.40" fill="#8a4a2a" /><text x="95.00" y="117.00" font-size="2.6" fill="#555" font-family="Liberation Sans" font-weight="bold" text-anchor="start" >Home Automation</text><rect x="95.00" y="119.50" width="35.00" height="0.80" fill="#d6d2d0" /><rect x="95.00" y="121.90" width="35.00" height="0.80" fill="#d6d2d0" /><rect x="95.00" y="124.30" width="28.00" height="0.80" fill="#d6d2d0" /><rect x="140.00" y="32.50" width="15.00" height="0.80" fill="#8a8a8a" /><rect x="140.00" y="35.70" width="22.50" height="0.70" fill="#d2d2d2" /><rect x="140.00" y="38.90" width="15.00" height="0.70" fill="#d2d2d2" /><rect x="140.00" y="72.40" width="15.00" height="0.80" fill="#8a8a8a" /><rect x="140.00" y="75.60" width="22.50" height="0.70" fill="#d2d2d2" /><rect x="140.00" y="78.80" width="15.00" height="0.70" fill="#d2d2d2" /><rect x="140.00" y="86.00" width="15.00" height="0.80" fill="#8a8a8a" /><rect x="140.00" y="89.20" width="22.50" height="0.70" fill="#d2d2d2" /><rect x="140.00" y="92.40" width="15.00" height="0.70" fill="#d2d2d2" /><rect x="0" y="0" width="206" height="0.8" fill="#777"/><rect x="0" y="0" width="0.8" height="129" fill="#aaa"/></svg><div class="a" style="left:1210px;top:318px;width:207px;height:131px;background:#1a1a1a"></div><svg class="a" style="left:1210px;top:319px;background:#fff;overflow:hidden" width="206" height="129" viewBox="0 0 206 129"><rect x="0.00" y="16.00" width="206.00" height="36.80" fill="#6dbccc" /><text x="6.00" y="26.00" font-size="5.8" fill="#fff" font-family="Liberation Sans" font-weight="bold" text-anchor="start" >Hero Main Copy</text><rect x="6.00" y="28.20" width="30.00" height="0.90" fill="#9fd2dc" /><text x="6.00" y="35.30" font-size="3.8" fill="#d6eef3" font-family="Liberation Sans"  text-anchor="start" >Hero Sub Copy</text><rect x="6.00" y="37.80" width="30.00" height="0.90" fill="#9fd2dc" /><rect x="6.00" y="44.30" width="19.00" height="1.40" fill="#eaf6f8" /><rect x="6.00" y="47.80" width="38.00" height="0.90" fill="#9fd2dc" /><text x="6.00" y="62.60" font-size="5.6" fill="#999" font-family="Liberation Sans"  text-anchor="start" >Heading</text><rect x="6.00" y="64.60" width="36.00" height="0.90" fill="#c8c8c8" /><text x="6.00" y="72.60" font-size="3.6" fill="#333" font-family="Liberation Sans" font-weight="bold" text-anchor="start" >Subheading</text><rect x="6.00" y="74.90" width="30.00" height="0.90" fill="#c8c8c8" /><rect x="6.00" y="81.10" width="39.00" height="1.20" fill="#bcbcbc" /><rect x="6.00" y="85.60" width="60.00" height="0.90" fill="#bcbcbc" /><rect x="6.00" y="90.60" width="12.00" height="0.90" fill="#c8c8c8" /><rect x="6.00" y="94.60" width="39.00" height="0.90" fill="#bcbcbc" /><rect x="6.00" y="99.60" width="14.00" height="0.90" fill="#ddd" /><rect x="6.00" y="103.60" width="39.00" height="0.90" fill="#bcbcbc" /><rect x="0" y="0" width="206" height="0.8" fill="#777"/><rect x="0" y="0" width="0.8" height="129" fill="#aaa"/></svg><div class="a" style="left:105px;top:466px;width:207px;height:130px;background:#1a1a1a"></div><svg class="a" style="left:105px;top:467px;background:#fff;overflow:hidden" width="206" height="128" viewBox="0 0 206 128"><rect x="20.00" y="23.80" width="8.00" height="0.80" fill="#ccc" /><rect x="82.60" y="23.80" width="8.00" height="0.80" fill="#ccc" /><rect x="126.00" y="23.80" width="8.00" height="0.80" fill="#ccc" /><rect x="6.00" y="31.50" width="6.00" height="0.80" fill="#ccc" /><rect x="6.00" y="41.80" width="6.00" height="0.80" fill="#ccc" /><rect x="19.90" y="28.90" width="54.90" height="7.60" fill="#bb4232" rx="0.6"/><rect x="28.13" y="32.09" width="38.43" height="1.00" fill="#f3d6d0" /><rect x="19.90" y="38.70" width="54.90" height="7.90" fill="#bb4232" rx="0.6"/><rect x="28.13" y="42.02" width="38.43" height="1.00" fill="#f3d6d0" /><rect x="20.00" y="48.60" width="34.70" height="5.10" fill="#bb4232" rx="0.6"/><rect x="25.20" y="50.74" width="24.29" height="1.00" fill="#f3d6d0" /><rect x="20.00" y="55.00" width="46.90" height="12.10" fill="#bb4232" rx="0.6"/><rect x="27.04" y="60.08" width="32.83" height="1.00" fill="#f3d6d0" /><rect x="28.00" y="62.50" width="30.00" height="1.60" fill="#fbeee8" /><rect x="82.60" y="28.90" width="34.40" height="7.60" fill="#6f9a47" rx="0.6"/><rect x="92.00" y="32.09" width="15.00" height="1.00" fill="#e6f0dc" /><rect x="82.60" y="38.70" width="34.40" height="7.90" fill="#6f9a47" rx="0.6"/><rect x="92.00" y="42.02" width="15.00" height="1.00" fill="#e6f0dc" /><rect x="82.60" y="48.60" width="34.40" height="5.10" fill="#6f9a47" rx="0.6"/><rect x="92.00" y="50.74" width="15.00" height="1.00" fill="#e6f0dc" /><rect x="82.60" y="55.00" width="34.40" height="5.20" fill="#6f9a47" rx="0.6"/><rect x="92.00" y="57.18" width="15.00" height="1.00" fill="#e6f0dc" /><rect x="126.00" y="28.20" width="41.90" height="4.70" fill="#9c9898" rx="0.6"/><rect x="130.00" y="30.17" width="33.90" height="0.90" fill="#eeeeee" /><rect x="126.00" y="34.90" width="30.80" height="4.30" fill="#9c9898" rx="0.6"/><rect x="130.00" y="36.71" width="22.80" height="0.90" fill="#eeeeee" /><rect x="126.00" y="41.60" width="30.80" height="4.30" fill="#9c9898" rx="0.6"/><rect x="130.00" y="43.41" width="22.80" height="0.90" fill="#eeeeee" /><rect x="126.00" y="48.60" width="30.80" height="4.80" fill="#9c9898" rx="0.6"/><rect x="130.00" y="50.62" width="22.80" height="0.90" fill="#eeeeee" /><rect x="126.00" y="55.00" width="41.90" height="4.80" fill="#9c9898" rx="0.6"/><rect x="130.00" y="57.02" width="33.90" height="0.90" fill="#eeeeee" /><rect x="19.00" y="73.60" width="38.00" height="5.90" fill="#e6e6e6" /><rect x="57.00" y="73.30" width="6.00" height="6.50" fill="#6f9a47" /><rect x="21.00" y="76.25" width="22.80" height="0.80" fill="#c4c4c4" /><rect x="19.00" y="84.00" width="46.80" height="8.40" fill="#e6e6e6" /><rect x="65.80" y="83.70" width="8.00" height="9.00" fill="#6f9a47" /><rect x="21.00" y="87.78" width="28.08" height="0.80" fill="#c4c4c4" /><rect x="19.00" y="97.00" width="38.70" height="7.70" fill="#e6e6e6" /><rect x="57.70" y="96.70" width="7.80" height="8.30" fill="#6f9a47" /><rect x="21.00" y="100.47" width="23.22" height="0.80" fill="#c4c4c4" /><rect x="19.00" y="106.80" width="38.70" height="8.00" fill="#e6e6e6" /><rect x="57.70" y="106.50" width="7.80" height="8.60" fill="#6f9a47" /><rect x="21.00" y="110.40" width="23.22" height="0.80" fill="#c4c4c4" /><rect x="8.00" y="76.00" width="8.00" height="0.80" fill="#ddd" /><rect x="8.00" y="88.00" width="8.00" height="0.80" fill="#ddd" /><rect x="92.00" y="74.00" width="10.00" height="0.90" fill="#444" /><rect x="102.00" y="74.00" width="14.00" height="0.90" fill="#5ab8d0" /><rect x="92.00" y="78.80" width="10.00" height="0.90" fill="#444" /><rect x="102.00" y="78.80" width="28.00" height="0.90" fill="#5ab8d0" /><rect x="92.00" y="83.60" width="10.00" height="0.90" fill="#444" /><rect x="102.00" y="83.60" width="10.00" height="0.90" fill="#88a653" /><rect x="92.00" y="88.40" width="10.00" height="0.90" fill="#444" /><rect x="102.00" y="88.40" width="24.00" height="0.90" fill="#88a653" /><rect x="0" y="0" width="206" height="0.8" fill="#777"/><rect x="0" y="0" width="0.8" height="128" fill="#aaa"/></svg><div class="a" style="left:330px;top:466px;width:207px;height:130px;background:#1a1a1a"></div><svg class="a" style="left:330px;top:467px;background:#fff;overflow:hidden" width="206" height="128" viewBox="0 0 206 128"><rect x="0.00" y="15.80" width="81.20" height="61.80" fill="#6ab8c8" /><rect x="21.20" y="20.10" width="43.00" height="8.40" fill="#d4ecf1" /><rect x="21.20" y="31.20" width="43.00" height="8.40" fill="#d4ecf1" /><rect x="8.00" y="24.00" width="10.00" height="0.80" fill="#c0e4ec" /><rect x="8.00" y="35.00" width="10.00" height="0.80" fill="#c0e4ec" /><rect x="10.00" y="47.00" width="8.00" height="0.80" fill="#c0e4ec" /><rect x="21.20" y="43.20" width="42.60" height="7.60" fill="#5aa7b8" stroke="#d8f0f5" stroke-width="0.4"/><rect x="23.00" y="46.50" width="10.00" height="1.20" fill="#fff" /><rect x="65.80" y="43.20" width="12.10" height="8.50" fill="#c0483a" /><rect x="81.20" y="15.80" width="65.20" height="61.80" fill="#ffffff" /><rect x="87.00" y="15.80" width="46.60" height="7.70" fill="#e9e9e9" /><rect x="87.00" y="25.50" width="38.00" height="7.80" fill="#e9e9e9" /><rect x="126.00" y="25.50" width="7.60" height="7.80" fill="#6f9a47" /><rect x="87.00" y="35.20" width="38.00" height="7.80" fill="#e9e9e9" /><rect x="126.00" y="35.20" width="7.60" height="7.80" fill="#6f9a47" /><rect x="89.00" y="48.50" width="8.00" height="0.80" fill="#bbb" /><circle cx="108.50" cy="48.80" r="2.00" fill="#f0b400" /><circle cx="114.20" cy="48.80" r="2.00" fill="#f0b400" /><circle cx="119.90" cy="48.80" r="2.00" fill="#f0b400" /><circle cx="125.60" cy="48.80" r="2.00" fill="#f0b400" /><circle cx="131.30" cy="48.80" r="2.00" fill="#f6e6a0" /><rect x="87.00" y="56.10" width="46.60" height="7.70" fill="#b8402f" /><rect x="100.00" y="59.50" width="20.00" height="1.00" fill="#f3d6d0" /><rect x="87.50" y="67.50" width="44.00" height="0.80" fill="#8cd0e0" /><rect x="146.40" y="15.80" width="59.60" height="61.80" fill="#4e423f" /><text x="176.00" y="24.00" font-size="3.4" fill="#e8e0dc" font-family="Liberation Sans"  text-anchor="middle" >Have a Question? Ask a</text><text x="176.00" y="28.50" font-size="3.4" fill="#fff" font-family="Liberation Sans" font-weight="bold" text-anchor="middle" >Security Expert</text><rect x="152.80" y="31.20" width="47.00" height="7.80" fill="#ffffff" /><rect x="152.80" y="41.40" width="47.00" height="7.20" fill="#d8d8d8" /><rect x="153.00" y="52.50" width="3.00" height="3.00" fill="#ddd" /><rect x="153.00" y="57.50" width="3.00" height="3.00" fill="none" stroke="#aaa" stroke-width="0.4"/><rect x="158.00" y="54.00" width="10.00" height="0.80" fill="#bbb" /><rect x="158.00" y="59.00" width="10.00" height="0.80" fill="#bbb" /><rect x="152.80" y="65.50" width="47.00" height="8.10" fill="#b8402f" /><rect x="165.00" y="69.00" width="22.00" height="1.00" fill="#f3d6d0" /><defs><linearGradient id="fph" x1="0" y1="0" x2="1" y2="0"><stop offset="0" stop-color="#3e2a20"/><stop offset="0.4" stop-color="#6a4634"/><stop offset="0.65" stop-color="#5a3e30"/><stop offset="0.85" stop-color="#8a7658"/><stop offset="1" stop-color="#9a8e72"/></linearGradient><radialGradient id="fface"><stop offset="0" stop-color="#b07e64"/><stop offset="1" stop-color="#b07e64" stop-opacity="0"/></radialGradient><radialGradient id="fbright"><stop offset="0" stop-color="#d8d0b8"/><stop offset="1" stop-color="#d8d0b8" stop-opacity="0"/></radialGradient><radialGradient id="fjack"><stop offset="0" stop-color="#2e3048"/><stop offset="0.7" stop-color="#34344a"/><stop offset="1" stop-color="#34344a" stop-opacity="0"/></radialGradient></defs><svg x="0.00" y="77.60" width="206.00" height="51.40" overflow="hidden"><g transform="translate(0.00,-77.60)"><rect x="0.00" y="77.60" width="206.00" height="51.40" fill="url(#fph)" /><ellipse cx="100" cy="103" rx="30" ry="22" fill="url(#fface)" opacity="0.85"/><ellipse cx="190" cy="84" rx="30" ry="14" fill="url(#fbright)" opacity="0.8"/><ellipse cx="160" cy="132" rx="45" ry="18" fill="url(#fjack)"/><ellipse cx="25" cy="100" rx="30" ry="28" fill="#2e1e16" opacity="0.35"/></g></svg><rect x="21.20" y="51.00" width="42.60" height="33.00" fill="#4e8e9c" /><rect x="24.00" y="54.50" width="12.00" height="0.80" fill="#b8dce4" /><rect x="24.00" y="60.80" width="12.00" height="0.80" fill="#b8dce4" /><rect x="24.00" y="67.10" width="12.00" height="0.80" fill="#b8dce4" /><rect x="24.00" y="73.40" width="12.00" height="0.80" fill="#b8dce4" /><rect x="24.00" y="79.70" width="12.00" height="0.80" fill="#b8dce4" /><rect x="21.20" y="70.00" width="42.60" height="6.00" fill="#5ea0ae" /><text x="103.00" y="93.00" font-size="4.6" fill="#fff" font-family="Liberation Sans" font-weight="bold" text-anchor="middle" >Compare Security Providers <tspan fill="#c8b8a8" font-weight="normal">By Features</tspan></text><rect x="48.30" y="102.00" width="110.00" height="15.50" fill="#2a1e18" opacity="0.55"/><rect x="53.00" y="106.00" width="16.00" height="7.00" fill="none" stroke="#ddd" stroke-width="0.5"/><rect x="96.00" y="106.00" width="28.00" height="7.00" fill="none" stroke="#ddd" stroke-width="0.5"/><rect x="143.00" y="106.00" width="12.00" height="8.00" fill="#c8483a" /><rect x="0" y="0" width="206" height="0.8" fill="#777"/><rect x="0" y="0" width="0.8" height="128" fill="#aaa"/></svg><div class="a" style="left:550px;top:466px;width:207px;height:130px;background:#1a1a1a"></div><svg class="a" style="left:550px;top:467px;background:#fff;overflow:hidden" width="206" height="128" viewBox="0 0 206 128"><rect x="36.00" y="48.00" width="16.00" height="8.50" fill="#b2dce7" /><rect x="36.00" y="56.40" width="16.00" height="8.20" fill="#8ecddc" /><rect x="36.00" y="64.50" width="16.00" height="7.80" fill="#66bdd1" /><rect x="36.00" y="72.20" width="16.00" height="16.50" fill="#4ea9bf" /><rect x="36.00" y="88.60" width="16.00" height="8.20" fill="#3e8fa4" /><rect x="36.00" y="96.70" width="16.00" height="8.10" fill="#347e91" /><rect x="36.00" y="104.70" width="16.00" height="8.20" fill="#2c6d7d" /><rect x="36.00" y="112.80" width="16.00" height="7.90" fill="#245c6a" /><rect x="55.00" y="48.00" width="16.00" height="8.50" fill="#b9cfa4" /><rect x="55.00" y="56.40" width="16.00" height="8.20" fill="#a0bd83" /><rect x="55.00" y="64.50" width="16.00" height="7.80" fill="#86aa60" /><rect x="55.00" y="72.20" width="16.00" height="16.50" fill="#6f9a47" /><rect x="55.00" y="88.60" width="16.00" height="8.20" fill="#5e853b" /><rect x="55.00" y="96.70" width="16.00" height="8.10" fill="#537633" /><rect x="55.00" y="104.70" width="16.00" height="8.20" fill="#45672b" /><rect x="73.90" y="48.00" width="16.00" height="8.50" fill="#f6dea6" /><rect x="73.90" y="56.40" width="16.00" height="8.20" fill="#eed396" /><rect x="73.90" y="64.50" width="16.00" height="7.80" fill="#e5c689" /><rect x="73.90" y="72.20" width="16.00" height="16.50" fill="#d8b983" /><rect x="73.90" y="88.60" width="16.00" height="8.20" fill="#c0a06a" /><rect x="73.90" y="96.70" width="16.00" height="8.10" fill="#a88a58" /><rect x="92.00" y="48.00" width="16.00" height="8.50" fill="#e8a090" /><rect x="92.00" y="56.40" width="16.00" height="8.20" fill="#df8070" /><rect x="92.00" y="64.50" width="16.00" height="7.80" fill="#d66655" /><rect x="92.00" y="72.20" width="16.00" height="16.50" fill="#c85e4c" /><rect x="92.00" y="88.60" width="16.00" height="8.20" fill="#a9473a" /><rect x="92.00" y="96.70" width="16.00" height="8.10" fill="#8e3a2f" /><rect x="111.00" y="48.00" width="16.00" height="8.50" fill="#f4f4f4" /><rect x="111.00" y="56.40" width="16.00" height="8.20" fill="#ededed" /><rect x="111.00" y="64.50" width="16.00" height="7.80" fill="#e5e5e5" /><rect x="111.00" y="72.20" width="16.00" height="16.50" fill="#dcdcdc" /><rect x="111.00" y="88.60" width="16.00" height="8.20" fill="#c6c6c6" /><rect x="111.00" y="96.70" width="16.00" height="8.10" fill="#ababab" /><rect x="129.60" y="15.80" width="15.80" height="8.20" fill="#f2f2f2" /><rect x="129.60" y="23.90" width="15.80" height="8.20" fill="#e2dfde" /><rect x="129.60" y="32.00" width="15.80" height="8.10" fill="#d0cbc9" /><rect x="129.60" y="40.00" width="15.80" height="8.10" fill="#aba3a0" /><rect x="129.60" y="48.00" width="15.80" height="8.50" fill="#837875" /><rect x="129.60" y="56.40" width="15.80" height="8.20" fill="#675c59" /><rect x="129.60" y="64.50" width="15.80" height="24.20" fill="#4e423f" /><rect x="129.60" y="88.60" width="15.80" height="8.20" fill="#3e3431" /><rect x="129.60" y="96.70" width="15.80" height="8.10" fill="#2e2624" /><rect x="129.60" y="104.70" width="15.80" height="7.90" fill="#231d1b" /><rect x="154.00" y="73.20" width="16.00" height="15.40" fill="#b8402f" /><rect x="154.00" y="88.60" width="16.00" height="8.10" fill="#a93a2b" /><rect x="154.00" y="96.70" width="16.00" height="7.80" fill="#8f2f22" /><rect x="0" y="0" width="206" height="0.8" fill="#777"/><rect x="0" y="0" width="0.8" height="128" fill="#aaa"/></svg><div class="a" style="left:770px;top:466px;width:207px;height:130px;background:#1a1a1a"></div><svg class="a" style="left:770px;top:467px;background:#fff;overflow:hidden" width="206" height="128" viewBox="0 0 206 128"><path d="M8 62.4 L8 45 A29 29 0 0 1 65.8 45 L65.8 62.4Z" fill="#bfe0ea"/><path d="M8 52 L65.8 52 L65.8 62.4 L8 62.4Z" fill="#8ab45a"/><rect x="12.00" y="56.00" width="20.00" height="6.40" fill="#5a4a44" /><rect x="20.28" y="46.08" width="33.44" height="9.92" fill="#efefef" /><path d="M18.00 46.58 L24.84 41.28 L49.16 41.28 L56.00 46.58Z" fill="#55463f"/><path d="M35.10 47.08 L43.08 40.00 L52.20 47.08Z" fill="#efefef" stroke="#55463f" stroke-width="0.6"/><rect x="24.46" y="49.06" width="2.66" height="3.17" fill="#bfe3ee" /><rect x="31.30" y="49.06" width="2.66" height="3.17" fill="#bfe3ee" /><rect x="38.14" y="49.06" width="2.66" height="3.17" fill="#bfe3ee" /><rect x="44.98" y="49.06" width="2.66" height="3.17" fill="#bfe3ee" /><rect x="35.86" y="49.06" width="2.28" height="6.94" fill="#4a3a34" /><ellipse cx="11.00" cy="47.30" rx="2.00" ry="6.30" fill="#6f9a3e"/><rect x="10.65" y="52.20" width="0.70" height="2.80" fill="#5a4a3a" /><ellipse cx="60.00" cy="47.30" rx="2.00" ry="6.30" fill="#6f9a3e"/><rect x="59.65" y="52.20" width="0.70" height="2.80" fill="#5a4a3a" /><ellipse cx="14.75" cy="47.40" rx="1.75" ry="5.40" fill="#6f9a3e"/><rect x="14.40" y="51.60" width="0.70" height="2.40" fill="#5a4a3a" /><ellipse cx="55.75" cy="47.40" rx="1.75" ry="5.40" fill="#6f9a3e"/><rect x="55.40" y="51.60" width="0.70" height="2.40" fill="#5a4a3a" /><circle cx="84.50" cy="45.60" r="8.00" fill="#8ab45a" /><path d="M76.5 45.6 A8 8 0 0 1 92.5 45.6Z" fill="#6dbccc"/><rect x="81.00" y="40.00" width="6.00" height="9.00" fill="#fff" stroke="#555" stroke-width="0.6"/><rect x="85.50" y="43.00" width="3.50" height="6.00" fill="#fff" stroke="#555" stroke-width="0.6"/><circle cx="105.20" cy="45.20" r="8.20" fill="#8ab45a" /><path d="M97 45.2 A8.2 8.2 0 0 1 113.4 45.2Z" fill="#6dbccc"/><path d="M98 42 L110 40 L111 46 L100 48Z" fill="#f2f2f2"/><circle cx="110.50" cy="43.50" r="2.60" fill="#444" /><circle cx="141.80" cy="44.20" r="17.60" fill="#8ab45a" /><path d="M124.20 42 A17.6 17.6 0 0 1 159.40 42Z" fill="#c0e1ea"/><path d="M140.80 44 L142.80 44 L144.80 61.5 L138.80 61.5Z" fill="#7a706c"/><ellipse cx="126.55" cy="40.50" rx="1.75" ry="4.50" fill="#6f9a3e"/><rect x="126.20" y="44.00" width="0.70" height="2.00" fill="#5a4a3a" /><ellipse cx="157.05" cy="40.50" rx="1.75" ry="4.50" fill="#6f9a3e"/><rect x="156.70" y="44.00" width="0.70" height="2.00" fill="#5a4a3a" /><circle cx="180.60" cy="44.20" r="17.60" fill="#8ab45a" /><path d="M163.00 42 A17.6 17.6 0 0 1 198.20 42Z" fill="#c0e1ea"/><path d="M179.60 44 L181.60 44 L183.60 61.5 L177.60 61.5Z" fill="#7a706c"/><ellipse cx="165.35" cy="40.50" rx="1.75" ry="4.50" fill="#6f9a3e"/><rect x="165.00" y="44.00" width="0.70" height="2.00" fill="#5a4a3a" /><ellipse cx="195.85" cy="40.50" rx="1.75" ry="4.50" fill="#6f9a3e"/><rect x="195.50" y="44.00" width="0.70" height="2.00" fill="#5a4a3a" /><rect x="129.68" y="37.80" width="24.64" height="6.20" fill="#d9b676" /><path d="M128.00 38.30 L133.04 34.80 L150.96 34.80 L156.00 38.30Z" fill="#55463f"/><rect x="138.08" y="36.00" width="1.68" height="1.40" fill="#f5f0e0" /><rect x="142.00" y="36.00" width="1.68" height="1.40" fill="#f5f0e0" /><rect x="132.76" y="39.66" width="1.96" height="1.98" fill="#bfe3ee" /><rect x="136.79" y="39.66" width="1.96" height="1.98" fill="#bfe3ee" /><rect x="140.82" y="39.66" width="1.96" height="1.98" fill="#bfe3ee" /><rect x="144.86" y="39.66" width="1.96" height="1.98" fill="#bfe3ee" /><rect x="148.89" y="39.66" width="1.96" height="1.98" fill="#bfe3ee" /><rect x="141.16" y="39.66" width="1.68" height="4.34" fill="#4a3a34" /><rect x="168.68" y="37.80" width="24.64" height="6.20" fill="#c4553f" /><path d="M167.00 38.30 L172.04 34.80 L189.96 34.80 L195.00 38.30Z" fill="#55463f"/><path d="M169.80 38.80 L175.96 34.00 L182.40 38.80Z" fill="#c4553f" stroke="#55463f" stroke-width="0.6"/><rect x="171.76" y="39.66" width="1.96" height="1.98" fill="#bfe3ee" /><rect x="176.80" y="39.66" width="1.96" height="1.98" fill="#bfe3ee" /><rect x="181.84" y="39.66" width="1.96" height="1.98" fill="#bfe3ee" /><rect x="186.88" y="39.66" width="1.96" height="1.98" fill="#bfe3ee" /><rect x="180.16" y="39.66" width="1.68" height="4.34" fill="#4a3a34" /><path d="M0 73 Q103 69 206 73 L206 129 L0 129Z" fill="#6fbdcf"/><ellipse cx="15" cy="80" rx="12" ry="4" fill="#84c6d4"/><ellipse cx="60" cy="88" rx="12" ry="4" fill="#84c6d4"/><ellipse cx="130" cy="82" rx="12" ry="4" fill="#84c6d4"/><ellipse cx="175" cy="88" rx="12" ry="4" fill="#84c6d4"/><path d="M0 110 Q103 94 206 110 L206 129 L0 129Z" fill="#8db45c"/><rect x="0.00" y="126.50" width="206.00" height="2.50" fill="#9cc46a" /><ellipse cx="33.50" cy="97.65" rx="2.50" ry="7.65" fill="#6f9a3e"/><rect x="33.15" y="103.60" width="0.70" height="3.40" fill="#5a4a3a" /><rect x="37.04" y="96.18" width="29.92" height="11.22" fill="#d9b676" /><path d="M35.00 96.68 L41.12 90.75 L62.88 90.75 L69.00 96.68Z" fill="#55463f"/><path d="M50.30 97.18 L57.44 89.30 L65.60 97.18Z" fill="#d9b676" stroke="#55463f" stroke-width="0.6"/><rect x="40.78" y="99.54" width="2.38" height="3.59" fill="#bfe3ee" /><rect x="46.90" y="99.54" width="2.38" height="3.59" fill="#bfe3ee" /><rect x="53.02" y="99.54" width="2.38" height="3.59" fill="#bfe3ee" /><rect x="59.14" y="99.54" width="2.38" height="3.59" fill="#bfe3ee" /><rect x="50.98" y="99.54" width="2.04" height="7.86" fill="#4a3a34" /><ellipse cx="78.25" cy="97.65" rx="2.25" ry="7.65" fill="#6f9a3e"/><rect x="77.90" y="103.60" width="0.70" height="3.40" fill="#5a4a3a" /><rect x="80.60" y="98.36" width="19.60" height="9.05" fill="#f2f2f2" /><path d="M79.13 98.96 L85.50 95.34 L101.18 95.34 L101.18 98.96Z" fill="#55463f"/><rect x="99.22" y="91.72" width="29.40" height="15.68" fill="#f2f2f2" /><path d="M96.77 92.33 L102.65 88.30 L127.15 88.30 L130.58 92.33Z" fill="#55463f"/><path d="M112.94 92.33 L120.78 87.30 L128.62 92.33Z" fill="#f2f2f2" stroke="#55463f" stroke-width="0.6"/><rect x="98.24" y="98.36" width="31.36" height="1.01" fill="#55463f" /><rect x="102.65" y="93.73" width="4.90" height="2.81" fill="#bfe3ee" /><rect x="102.65" y="101.37" width="4.90" height="2.81" fill="#bfe3ee" /><rect x="110.98" y="93.73" width="4.90" height="2.81" fill="#bfe3ee" /><rect x="110.98" y="101.37" width="4.90" height="2.81" fill="#bfe3ee" /><rect x="119.31" y="93.73" width="4.90" height="2.81" fill="#bfe3ee" /><rect x="119.31" y="101.37" width="4.90" height="2.81" fill="#bfe3ee" /><rect x="83.05" y="100.97" width="14.70" height="6.43" fill="#d8d8d8" /><rect x="110.98" y="101.37" width="2.94" height="6.03" fill="#4a3a34" /><ellipse cx="131.25" cy="97.65" rx="2.25" ry="7.65" fill="#6f9a3e"/><rect x="130.90" y="103.60" width="0.70" height="3.40" fill="#5a4a3a" /><rect x="139.50" y="91.00" width="30.00" height="16.40" fill="#c4553f" /><path d="M138 92 L145 83.3 L164 83.3 L171 92Z" fill="#55463f"/><path d="M139 92 L146 83.3 L153 92Z" fill="#c4553f" stroke="#55463f" stroke-width="0.6"/><path d="M156 92 L163 83.3 L170 92Z" fill="#c4553f" stroke="#55463f" stroke-width="0.6"/><path d="M146 99 L154.5 93 L163 99Z" fill="#55463f"/><rect x="143.00" y="89.00" width="4.50" height="3.50" fill="#bfe3ee" /><rect x="143.00" y="100.00" width="4.50" height="3.50" fill="#bfe3ee" /><rect x="160.00" y="89.00" width="4.50" height="3.50" fill="#bfe3ee" /><rect x="160.00" y="100.00" width="4.50" height="3.50" fill="#bfe3ee" /><rect x="153.00" y="101.00" width="3.00" height="6.40" fill="#4a3a34" /><rect x="137.00" y="104.00" width="36.00" height="0.60" fill="#6a4a40" /><ellipse cx="174.50" cy="97.65" rx="2.50" ry="7.65" fill="#6f9a3e"/><rect x="174.15" y="103.60" width="0.70" height="3.40" fill="#5a4a3a" /><rect x="0" y="0" width="206" height="0.8" fill="#777"/><rect x="0" y="0" width="0.8" height="128" fill="#aaa"/></svg><div class="a" style="left:105px;top:613px;width:207px;height:131px;background:#1a1a1a"></div><svg class="a" style="left:105px;top:614px;background:#fff;overflow:hidden" width="206" height="129" viewBox="0 0 206 129"><rect x="6.80" y="16.00" width="0.40" height="113.00" fill="#f0f0f0" /><rect x="151.60" y="16.00" width="0.40" height="113.00" fill="#f0f0f0" /><svg x="35.00" y="16.00" width="88.00" height="19.50" overflow="hidden"><g transform="translate(-35.00,-16.00)"><rect x="35.00" y="16.00" width="88.00" height="19.50" fill="#7a9a44" /><rect x="35.00" y="16.00" width="88.00" height="5.85" fill="#95ad5e" /><ellipse cx="73.14" cy="35.44" rx="4.40" ry="1.17" fill="#3f5a1c" opacity="0.55"/><ellipse cx="50.44" cy="21.42" rx="4.40" ry="1.17" fill="#3f5a1c" opacity="0.55"/><ellipse cx="107.65" cy="29.55" rx="4.40" ry="1.17" fill="#3f5a1c" opacity="0.55"/><ellipse cx="104.93" cy="32.09" rx="4.40" ry="1.17" fill="#3f5a1c" opacity="0.55"/><ellipse cx="58.11" cy="27.71" rx="4.40" ry="1.17" fill="#3f5a1c" opacity="0.55"/><ellipse cx="56.01" cy="23.60" rx="4.40" ry="1.17" fill="#3f5a1c" opacity="0.55"/><ellipse cx="57.98" cy="22.67" rx="4.40" ry="1.17" fill="#3f5a1c" opacity="0.55"/><ellipse cx="41.89" cy="24.22" rx="4.40" ry="1.17" fill="#3f5a1c" opacity="0.55"/><ellipse cx="95.70" cy="27.22" rx="4.40" ry="1.17" fill="#3f5a1c" opacity="0.55"/><ellipse cx="121.60" cy="31.22" rx="4.40" ry="1.17" fill="#3f5a1c" opacity="0.55"/><ellipse cx="83.19" cy="31.08" rx="4.40" ry="1.17" fill="#3f5a1c" opacity="0.55"/><ellipse cx="45.35" cy="29.13" rx="4.40" ry="1.17" fill="#3f5a1c" opacity="0.55"/><ellipse cx="102.87" cy="27.49" rx="4.40" ry="1.17" fill="#3f5a1c" opacity="0.55"/><ellipse cx="76.43" cy="31.46" rx="4.40" ry="1.17" fill="#3f5a1c" opacity="0.55"/><ellipse cx="121.04" cy="25.95" rx="4.40" ry="1.17" fill="#3f5a1c" opacity="0.55"/><ellipse cx="71.52" cy="34.59" rx="4.40" ry="1.17" fill="#3f5a1c" opacity="0.55"/><ellipse cx="113.46" cy="31.75" rx="4.40" ry="1.17" fill="#3f5a1c" opacity="0.55"/><ellipse cx="89.04" cy="28.31" rx="4.40" ry="1.17" fill="#3f5a1c" opacity="0.55"/><ellipse cx="100.00" cy="34.59" rx="4.40" ry="1.17" fill="#3f5a1c" opacity="0.55"/><ellipse cx="70.33" cy="21.43" rx="4.40" ry="1.17" fill="#3f5a1c" opacity="0.55"/><ellipse cx="90.83" cy="25.66" rx="4.40" ry="1.17" fill="#3f5a1c" opacity="0.55"/><ellipse cx="122.71" cy="33.73" rx="4.40" ry="1.17" fill="#3f5a1c" opacity="0.55"/><ellipse cx="111.58" cy="32.27" rx="4.40" ry="1.17" fill="#3f5a1c" opacity="0.55"/><ellipse cx="56.25" cy="24.75" rx="4.40" ry="1.17" fill="#3f5a1c" opacity="0.55"/><ellipse cx="68.06" cy="21.51" rx="4.40" ry="1.17" fill="#3f5a1c" opacity="0.55"/><ellipse cx="107.72" cy="29.69" rx="4.40" ry="1.17" fill="#3f5a1c" opacity="0.55"/><ellipse cx="94.14" cy="24.33" rx="4.40" ry="1.17" fill="#3f5a1c" opacity="0.55"/><ellipse cx="99.48" cy="23.67" rx="4.40" ry="1.17" fill="#3f5a1c" opacity="0.55"/><ellipse cx="84.88" cy="27.13" rx="4.40" ry="1.17" fill="#3f5a1c" opacity="0.55"/><ellipse cx="99.73" cy="23.04" rx="4.40" ry="1.17" fill="#3f5a1c" opacity="0.55"/><ellipse cx="110.48" cy="26.27" rx="4.40" ry="1.17" fill="#3f5a1c" opacity="0.55"/><ellipse cx="111.56" cy="33.38" rx="4.40" ry="1.17" fill="#3f5a1c" opacity="0.55"/><ellipse cx="49.52" cy="28.87" rx="4.40" ry="1.17" fill="#3f5a1c" opacity="0.55"/><ellipse cx="98.58" cy="26.23" rx="4.40" ry="1.17" fill="#3f5a1c" opacity="0.55"/><ellipse cx="52.60" cy="32.01" rx="4.40" ry="1.17" fill="#3f5a1c" opacity="0.55"/><ellipse cx="38.91" cy="22.34" rx="4.40" ry="1.17" fill="#3f5a1c" opacity="0.55"/><ellipse cx="65.03" cy="28.31" rx="4.40" ry="1.17" fill="#3f5a1c" opacity="0.55"/><ellipse cx="89.93" cy="26.46" rx="4.40" ry="1.17" fill="#3f5a1c" opacity="0.55"/><ellipse cx="66.19" cy="26.68" rx="4.40" ry="1.17" fill="#3f5a1c" opacity="0.55"/><ellipse cx="57.62" cy="26.49" rx="4.40" ry="1.17" fill="#3f5a1c" opacity="0.55"/><rect x="35.00" y="32.58" width="88.00" height="2.92" fill="#3a5218" opacity="0.5"/></g></svg><text x="35.00" y="41.80" font-size="2.6" fill="#333" font-family="Liberation Sans" font-weight="bold" text-anchor="start" >Ways Companies Make Home Security More Affordable</text><rect x="35.00" y="45.00" width="88.00" height="0.80" fill="#d0d0d0" /><rect x="35.00" y="47.30" width="88.00" height="0.80" fill="#d0d0d0" /><rect x="35.00" y="49.60" width="88.00" height="0.80" fill="#d0d0d0" /><rect x="35.00" y="51.90" width="88.00" height="0.80" fill="#d0d0d0" /><rect x="35.00" y="54.20" width="26.40" height="0.80" fill="#d0d0d0" /><rect x="35.00" y="58.50" width="88.00" height="0.80" fill="#d0d0d0" /><rect x="35.00" y="60.80" width="88.00" height="0.80" fill="#d0d0d0" /><rect x="35.00" y="63.10" width="88.00" height="0.80" fill="#d0d0d0" /><rect x="35.00" y="65.40" width="17.60" height="0.80" fill="#d0d0d0" /><rect x="33.50" y="72.40" width="0.50" height="12.00" fill="#8cd0e0" /><rect x="35.00" y="73.00" width="85.00" height="0.90" fill="#c8c8c8" /><rect x="35.00" y="76.50" width="85.00" height="0.90" fill="#c8c8c8" /><rect x="35.00" y="80.00" width="85.00" height="0.90" fill="#c8c8c8" /><rect x="35.00" y="83.50" width="42.50" height="0.90" fill="#c8c8c8" /><text x="35.00" y="92.50" font-size="2.8" fill="#333" font-family="Liberation Sans" font-weight="bold" text-anchor="start" >How likely are you to become a victim?</text><rect x="35.00" y="95.00" width="88.00" height="0.80" fill="#d0d0d0" /><rect x="35.00" y="97.30" width="88.00" height="0.80" fill="#d0d0d0" /><rect x="35.00" y="99.60" width="70.40" height="0.80" fill="#d0d0d0" /><rect x="35.00" y="103.50" width="88.00" height="0.80" fill="#d0d0d0" /><rect x="35.00" y="105.80" width="88.00" height="0.80" fill="#d0d0d0" /><rect x="35.00" y="108.10" width="26.40" height="0.80" fill="#d0d0d0" /><rect x="37.00" y="112.50" width="40.00" height="0.80" fill="#cfcfcf" /><rect x="37.00" y="116.10" width="40.00" height="0.80" fill="#cfcfcf" /><rect x="37.00" y="119.70" width="40.00" height="0.80" fill="#cfcfcf" /><rect x="37.00" y="123.30" width="40.00" height="0.80" fill="#cfcfcf" /><rect x="37.00" y="126.90" width="16.00" height="0.80" fill="#cfcfcf" /><rect x="125.00" y="25.00" width="33.00" height="0.40" fill="#e0e0e0" /><rect x="125.00" y="40.50" width="33.00" height="0.40" fill="#e0e0e0" /><rect x="125.00" y="73.50" width="33.00" height="0.40" fill="#e0e0e0" /><rect x="125.00" y="95.00" width="33.00" height="0.40" fill="#e0e0e0" /><rect x="159.50" y="24.50" width="10.80" height="0.80" fill="#8a8a8a" /><rect x="159.50" y="27.70" width="16.20" height="0.70" fill="#d2d2d2" /><rect x="159.50" y="40.00" width="10.80" height="0.80" fill="#8a8a8a" /><rect x="159.50" y="43.20" width="16.20" height="0.70" fill="#d2d2d2" /><rect x="159.50" y="46.40" width="10.80" height="0.70" fill="#d2d2d2" /><rect x="159.50" y="73.00" width="10.80" height="0.80" fill="#8a8a8a" /><rect x="159.50" y="76.20" width="16.20" height="0.70" fill="#d2d2d2" /><rect x="159.50" y="79.40" width="10.80" height="0.70" fill="#d2d2d2" /><rect x="159.50" y="94.50" width="10.80" height="0.80" fill="#8a8a8a" /><rect x="159.50" y="97.70" width="16.20" height="0.70" fill="#d2d2d2" /><rect x="159.50" y="100.90" width="10.80" height="0.70" fill="#d2d2d2" /><rect x="159.50" y="109.50" width="20.40" height="0.80" fill="#8a8a8a" /><rect x="159.50" y="112.70" width="30.60" height="0.70" fill="#d2d2d2" /><rect x="159.50" y="115.90" width="20.40" height="0.70" fill="#d2d2d2" /><rect x="159.50" y="119.10" width="20.40" height="0.70" fill="#d2d2d2" /><rect x="159.50" y="122.30" width="20.40" height="0.70" fill="#d2d2d2" /><rect x="0" y="0" width="206" height="0.8" fill="#777"/><rect x="0" y="0" width="0.8" height="129" fill="#aaa"/></svg><div class="a" style="left:330px;top:613px;width:207px;height:131px;background:#1a1a1a"></div><svg class="a" style="left:330px;top:614px;background:#fff;overflow:hidden" width="206" height="129" viewBox="0 0 206 129"><circle cx="9.50" cy="19.00" r="3.00" fill="#5ab8cf" /><circle cx="16.45" cy="19.00" r="3.00" fill="#5ab8cf" /><circle cx="23.40" cy="19.00" r="3.00" fill="#5ab8cf" /><circle cx="30.35" cy="19.00" r="3.00" fill="#5ab8cf" /><circle cx="37.30" cy="19.00" r="3.00" fill="#5ab8cf" /><circle cx="44.25" cy="19.00" r="3.00" fill="#5ab8cf" /><circle cx="51.20" cy="19.00" r="3.00" fill="#5ab8cf" /><circle cx="69.00" cy="18.30" r="2.10" fill="#35606a" /><circle cx="74.30" cy="18.30" r="2.10" fill="#35606a" /><circle cx="79.60" cy="18.30" r="2.10" fill="#35606a" /><rect x="104.20" y="16.00" width="8.80" height="8.80" fill="#88a653" /><circle cx="117.50" cy="20.30" r="2.50" fill="#1c5fa8" /><circle cx="8.20" cy="32.50" r="2.10" fill="#6e605c" /><circle cx="13.30" cy="32.50" r="2.10" fill="#6e605c" /><circle cx="18.40" cy="32.50" r="2.10" fill="#6e605c" /><circle cx="23.50" cy="32.50" r="2.10" fill="#6e605c" /><circle cx="28.60" cy="32.50" r="2.10" fill="#6e605c" /><circle cx="33.70" cy="32.50" r="2.10" fill="#6e605c" /><circle cx="38.80" cy="32.50" r="2.10" fill="#6e605c" /><circle cx="8.20" cy="39.70" r="2.10" fill="#6e605c" /><circle cx="13.30" cy="39.70" r="2.10" fill="#6e605c" /><circle cx="18.40" cy="39.70" r="2.10" fill="#6e605c" /><circle cx="23.50" cy="39.70" r="2.10" fill="#6e605c" /><circle cx="28.60" cy="39.70" r="2.10" fill="#6e605c" /><circle cx="33.70" cy="39.70" r="2.10" fill="#6e605c" /><circle cx="8.20" cy="47.10" r="2.10" fill="#6e605c" /><circle cx="13.30" cy="47.10" r="2.10" fill="#6e605c" /><circle cx="18.40" cy="47.10" r="2.10" fill="#6e605c" /><circle cx="23.50" cy="47.10" r="2.10" fill="#6e605c" /><circle cx="28.60" cy="47.10" r="2.10" fill="#6e605c" /><circle cx="33.70" cy="47.10" r="2.10" fill="#6e605c" /><circle cx="38.80" cy="47.10" r="2.10" fill="#6e605c" /><circle cx="43.90" cy="47.10" r="2.10" fill="#6e605c" /><circle cx="49.00" cy="47.10" r="2.10" fill="#6e605c" /><circle cx="9.20" cy="59.20" r="2.90" fill="#5ab8cf" /><circle cx="16.05" cy="59.20" r="2.90" fill="#5ab8cf" /><circle cx="22.90" cy="59.20" r="2.90" fill="#5ab8cf" /><circle cx="29.75" cy="59.20" r="2.90" fill="#5ab8cf" /><circle cx="36.60" cy="59.20" r="2.90" fill="#5ab8cf" /><circle cx="43.45" cy="59.20" r="2.90" fill="#5ab8cf" /><circle cx="50.30" cy="59.20" r="2.90" fill="#5ab8cf" /><circle cx="57.15" cy="59.20" r="2.90" fill="#5ab8cf" /><circle cx="64.00" cy="59.20" r="2.90" fill="#5ab8cf" /><circle cx="70.85" cy="59.20" r="2.90" fill="#5ab8cf" /><circle cx="77.70" cy="59.20" r="2.90" fill="#5ab8cf" /><circle cx="9.20" cy="67.30" r="2.90" fill="#5ab8cf" /><circle cx="16.05" cy="67.30" r="2.90" fill="#5ab8cf" /><circle cx="22.90" cy="67.30" r="2.90" fill="#5ab8cf" /><circle cx="29.75" cy="67.30" r="2.90" fill="#5ab8cf" /><circle cx="36.60" cy="67.30" r="2.90" fill="#5ab8cf" /><circle cx="43.45" cy="67.30" r="2.90" fill="#5ab8cf" /><circle cx="50.30" cy="67.30" r="2.90" fill="#5ab8cf" /><circle cx="57.15" cy="67.30" r="2.90" fill="#5ab8cf" /><circle cx="64.00" cy="67.30" r="2.90" fill="#5ab8cf" /><circle cx="70.85" cy="67.30" r="2.90" fill="#5ab8cf" /><circle cx="9.20" cy="76.70" r="3.00" fill="#5ab8cf" /><circle cx="16.70" cy="76.70" r="3.00" fill="#5ab8cf" /><circle cx="24.20" cy="76.70" r="3.00" fill="#5ab8cf" /><circle cx="31.70" cy="76.70" r="3.00" fill="#5ab8cf" /><circle cx="39.20" cy="76.70" r="3.00" fill="#5ab8cf" /><circle cx="7.50" cy="92.30" r="1.20" fill="#5a8a3a" /><circle cx="11.50" cy="92.30" r="1.20" fill="#555" /><circle cx="15.50" cy="92.30" r="1.00" fill="#a8c888" /><rect x="6.00" y="96.40" width="24.50" height="3.60" fill="#6f9a47" rx="1"/><rect x="33.00" y="93.80" width="8.00" height="8.00" fill="#5ab8cf" /><circle cx="8.00" cy="105.30" r="1.20" fill="#f4b030" /><circle cx="11.90" cy="105.30" r="1.20" fill="#f4b030" /><circle cx="15.80" cy="105.30" r="1.20" fill="#f4b030" /><circle cx="19.70" cy="105.30" r="1.20" fill="#f4b030" /><circle cx="23.60" cy="105.30" r="1.20" fill="#f4b030" /><circle cx="9.20" cy="113.70" r="2.90" fill="#2a4f9a" /><circle cx="15.85" cy="113.70" r="2.90" fill="#e0603a" /><circle cx="22.50" cy="113.70" r="2.90" fill="#2aa0e0" /><circle cx="29.15" cy="113.70" r="2.90" fill="#d02a3a" /><rect x="0" y="0" width="206" height="0.8" fill="#777"/><rect x="0" y="0" width="0.8" height="129" fill="#aaa"/></svg><div class="a" style="left:550px;top:613px;width:207px;height:131px;background:#1a1a1a"></div><svg class="a" style="left:550px;top:614px;background:#fff;overflow:hidden" width="206" height="129" viewBox="0 0 206 129"><rect x="0.00" y="16.00" width="206.00" height="24.60" fill="#4e423f" /><rect x="14.00" y="20.50" width="15.00" height="0.80" fill="#7a6e6a" /><rect x="14.20" y="27.00" width="176.60" height="8.20" fill="#3a302e" /><rect x="19.00" y="30.50" width="17.00" height="1.20" fill="#eee" /><rect x="40.00" y="30.70" width="145.00" height="0.90" fill="#8a7e7a" /><rect x="19.50" y="34.00" width="17.00" height="0.60" fill="#5ab8cc" /><rect x="0.00" y="40.60" width="206.00" height="88.90" fill="#6dbccc" /><ellipse cx="30.90" cy="95.72" rx="12.36" ry="6.22" fill="#7cc3d2"/><ellipse cx="72.10" cy="92.16" rx="14.42" ry="6.22" fill="#7cc3d2"/><ellipse cx="127.72" cy="93.94" rx="12.36" ry="6.22" fill="#7cc3d2"/><ellipse cx="175.10" cy="91.27" rx="14.42" ry="6.22" fill="#7cc3d2"/><rect x="14.20" y="48.00" width="176.60" height="7.50" fill="#62acbc" /><text x="17.00" y="54.30" font-size="5.6" fill="#fff" font-family="Liberation Sans"  text-anchor="start" letter-spacing="-0.2">safewise</text><rect x="71.00" y="51.50" width="80.00" height="0.90" fill="#c8e6ec" /><rect x="156.70" y="49.00" width="33.90" height="5.80" fill="#c0483a" /><rect x="162.00" y="51.50" width="23.00" height="0.90" fill="#f6d8d0" /><rect x="162.00" y="43.50" width="29.00" height="2.50" fill="#a8d8e2" /><circle cx="147.00" cy="44.80" r="1.30" fill="#c8e8ef" /><circle cx="150.50" cy="44.80" r="1.30" fill="#c8e8ef" /><circle cx="154.00" cy="44.80" r="1.30" fill="#c8e8ef" /><circle cx="157.50" cy="44.80" r="1.30" fill="#c8e8ef" /><text x="103.00" y="78.00" font-size="8.0" fill="#ffffff" font-family="Liberation Sans" font-weight="bold" text-anchor="middle" >Let's make your community safer.</text><rect x="24.72" y="95.50" width="156.56" height="1.20" fill="#ffffff" opacity="0.22"/><path d="M0.00 131.00 Q103.00 131.75 206.00 131.00 L206.00 129.50 Q103.00 128.15 0.00 129.50Z" fill="#88ae58"/><ellipse cx="48.50" cy="123.25" rx="2.50" ry="6.75" fill="#6f9a3e"/><rect x="48.15" y="128.50" width="0.70" height="3.00" fill="#5a4a3a" /><rect x="53.80" y="121.58" width="26.40" height="9.92" fill="#dcdcdc" /><path d="M52.00 122.08 L57.40 116.78 L76.60 116.78 L82.00 122.08Z" fill="#55463f"/><path d="M65.50 122.58 L71.80 115.50 L79.00 122.58Z" fill="#dcdcdc" stroke="#55463f" stroke-width="0.6"/><rect x="57.10" y="124.56" width="2.10" height="3.17" fill="#bfe3ee" /><rect x="62.50" y="124.56" width="2.10" height="3.17" fill="#bfe3ee" /><rect x="67.90" y="124.56" width="2.10" height="3.17" fill="#bfe3ee" /><rect x="73.30" y="124.56" width="2.10" height="3.17" fill="#bfe3ee" /><rect x="66.10" y="124.56" width="1.80" height="6.94" fill="#4a3a34" /><ellipse cx="85.50" cy="123.25" rx="2.50" ry="6.75" fill="#6f9a3e"/><rect x="85.15" y="128.50" width="0.70" height="3.00" fill="#5a4a3a" /><rect x="89.28" y="121.58" width="33.44" height="9.92" fill="#d9b676" /><path d="M87.00 122.08 L93.84 116.78 L118.16 116.78 L125.00 122.08Z" fill="#55463f"/><rect x="100.68" y="118.70" width="2.28" height="2.24" fill="#f5f0e0" /><rect x="106.00" y="118.70" width="2.28" height="2.24" fill="#f5f0e0" /><rect x="93.46" y="124.56" width="2.66" height="3.17" fill="#bfe3ee" /><rect x="98.93" y="124.56" width="2.66" height="3.17" fill="#bfe3ee" /><rect x="104.40" y="124.56" width="2.66" height="3.17" fill="#bfe3ee" /><rect x="109.88" y="124.56" width="2.66" height="3.17" fill="#bfe3ee" /><rect x="115.35" y="124.56" width="2.66" height="3.17" fill="#bfe3ee" /><rect x="104.86" y="124.56" width="2.28" height="6.94" fill="#4a3a34" /><ellipse cx="129.00" cy="123.25" rx="2.00" ry="6.75" fill="#6f9a3e"/><rect x="128.65" y="128.50" width="0.70" height="3.00" fill="#5a4a3a" /><rect x="132.62" y="121.58" width="23.76" height="9.92" fill="#c4553f" /><path d="M131.00 122.08 L135.86 116.78 L153.14 116.78 L158.00 122.08Z" fill="#55463f"/><path d="M133.70 122.58 L139.64 115.50 L145.85 122.58Z" fill="#c4553f" stroke="#55463f" stroke-width="0.6"/><rect x="135.59" y="124.56" width="1.89" height="3.17" fill="#bfe3ee" /><rect x="140.45" y="124.56" width="1.89" height="3.17" fill="#bfe3ee" /><rect x="145.31" y="124.56" width="1.89" height="3.17" fill="#bfe3ee" /><rect x="150.17" y="124.56" width="1.89" height="3.17" fill="#bfe3ee" /><rect x="143.69" y="124.56" width="1.62" height="6.94" fill="#4a3a34" /><ellipse cx="160.50" cy="123.25" rx="2.50" ry="6.75" fill="#6f9a3e"/><rect x="160.15" y="128.50" width="0.70" height="3.00" fill="#5a4a3a" /><text x="103.00" y="86.00" font-size="4.4" fill="#e6f4f8" font-family="Liberation Sans"  text-anchor="middle" >Get free safety tips, resources, and guides from industry experts.</text><rect x="0" y="0" width="206" height="0.8" fill="#777"/><rect x="0" y="0" width="0.8" height="129" fill="#aaa"/></svg><div class="a" style="left:105px;top:761px;width:207px;height:131px;background:#1a1a1a"></div><svg class="a" style="left:105px;top:762px;background:#fff;overflow:hidden" width="206" height="129" viewBox="0 0 206 129"><rect x="6.80" y="16.00" width="0.40" height="113.00" fill="#f0f0f0" /><rect x="151.60" y="16.00" width="0.40" height="113.00" fill="#f0f0f0" /><rect x="20.50" y="24.00" width="0.40" height="105.00" fill="#f2f2f2" /><svg x="35.00" y="16.20" width="34.00" height="53.50" overflow="hidden"><g transform="translate(-35.00,-16.20)"><rect x="35.00" y="16.20" width="34.00" height="53.50" fill="#c4c6be" /><path d="M35.00 24.23 L69.00 16.20 L69.00 32.25 L35.00 38.67Z" fill="#e2e4dc"/><path d="M43.50 41.88 L69.00 35.46 L69.00 67.02 L46.90 69.70Z" fill="#eceee6"/><circle cx="55.40" cy="53.65" r="3.74" fill="#7a7c74" /><rect x="35.00" y="40.27" width="6.80" height="16.05" fill="#d8c8d0" /><rect x="38.40" y="19.41" width="11.90" height="5.35" fill="#9aa890" /><rect x="35.00" y="64.35" width="6.12" height="5.35" fill="#3a3a3a" /><rect x="55.40" y="18.88" width="11.90" height="6.42" fill="#c8aab8" opacity="0.6"/></g></svg><text x="71.50" y="18.50" font-size="2.6" fill="#444" font-family="Liberation Sans" font-weight="bold" text-anchor="start" >How much are you likely to lose to a</text><text x="71.50" y="22.00" font-size="2.6" fill="#444" font-family="Liberation Sans" font-weight="bold" text-anchor="start" >burglary?</text><rect x="71.50" y="25.50" width="51.00" height="0.80" fill="#d0d0d0" /><rect x="71.50" y="27.90" width="51.00" height="0.80" fill="#d0d0d0" /><rect x="71.50" y="30.30" width="51.00" height="0.80" fill="#d0d0d0" /><rect x="71.50" y="32.70" width="25.50" height="0.80" fill="#d0d0d0" /><rect x="71.50" y="36.00" width="51.00" height="0.80" fill="#d0d0d0" /><rect x="71.50" y="38.40" width="51.00" height="0.80" fill="#d0d0d0" /><rect x="71.50" y="40.80" width="51.00" height="0.80" fill="#d0d0d0" /><rect x="71.50" y="43.20" width="51.00" height="0.80" fill="#d0d0d0" /><rect x="71.50" y="45.60" width="20.40" height="0.80" fill="#d0d0d0" /><rect x="71.50" y="49.50" width="51.00" height="0.80" fill="#d0d0d0" /><rect x="71.50" y="51.90" width="51.00" height="0.80" fill="#d0d0d0" /><rect x="71.50" y="54.30" width="51.00" height="0.80" fill="#d0d0d0" /><rect x="71.50" y="56.70" width="51.00" height="0.80" fill="#d0d0d0" /><rect x="71.50" y="59.10" width="30.60" height="0.80" fill="#d0d0d0" /><rect x="71.50" y="63.00" width="51.00" height="0.80" fill="#d0d0d0" /><rect x="71.50" y="65.40" width="51.00" height="0.80" fill="#d0d0d0" /><rect x="71.50" y="67.80" width="51.00" height="0.80" fill="#d0d0d0" /><rect x="71.50" y="70.20" width="51.00" height="0.80" fill="#d0d0d0" /><rect x="71.50" y="72.60" width="51.00" height="0.80" fill="#d0d0d0" /><rect x="71.50" y="75.00" width="25.50" height="0.80" fill="#d0d0d0" /><rect x="35.00" y="71.50" width="34.00" height="0.70" fill="#dcdcdc" /><rect x="35.00" y="73.80" width="13.60" height="0.70" fill="#dcdcdc" /><text x="35.00" y="85.50" font-size="2.8" fill="#333" font-family="Liberation Sans" font-weight="bold" text-anchor="start" >How much is your peace of mind worth?</text><rect x="35.00" y="88.00" width="85.00" height="0.80" fill="#d0d0d0" /><rect x="35.00" y="90.40" width="85.00" height="0.80" fill="#d0d0d0" /><rect x="35.00" y="92.80" width="85.00" height="0.80" fill="#d0d0d0" /><rect x="35.00" y="95.20" width="17.00" height="0.80" fill="#d0d0d0" /><rect x="35.00" y="103.80" width="5.00" height="0.70" fill="#bbb" /><rect x="35.00" y="106.00" width="68.00" height="0.70" fill="#e2e2e2" /><rect x="35.00" y="108.20" width="68.00" height="0.70" fill="#e2e2e2" /><rect x="35.00" y="110.40" width="68.00" height="0.70" fill="#e2e2e2" /><rect x="35.00" y="112.60" width="68.00" height="0.70" fill="#e2e2e2" /><rect x="35.00" y="114.80" width="68.00" height="0.70" fill="#e2e2e2" /><rect x="35.00" y="117.00" width="68.00" height="0.70" fill="#e2e2e2" /><rect x="123.00" y="23.50" width="35.00" height="0.40" fill="#e6e6e6" /><rect x="159.50" y="22.50" width="16.80" height="0.80" fill="#8a8a8a" /><rect x="159.50" y="25.70" width="25.20" height="0.70" fill="#d2d2d2" /><rect x="159.50" y="28.90" width="16.80" height="0.70" fill="#d2d2d2" /><rect x="159.50" y="72.50" width="10.80" height="0.80" fill="#8a8a8a" /><rect x="159.50" y="75.70" width="16.20" height="0.70" fill="#d2d2d2" /><rect x="159.50" y="78.90" width="10.80" height="0.70" fill="#d2d2d2" /><rect x="159.50" y="107.50" width="10.80" height="0.80" fill="#8a8a8a" /><rect x="159.50" y="110.70" width="16.20" height="0.70" fill="#d2d2d2" /><rect x="159.50" y="113.90" width="10.80" height="0.70" fill="#d2d2d2" /><rect x="0" y="0" width="206" height="0.8" fill="#777"/><rect x="0" y="0" width="0.8" height="129" fill="#aaa"/></svg><div class="a" style="left:330px;top:761px;width:207px;height:131px;background:#1a1a1a"></div><svg class="a" style="left:330px;top:762px;background:#fff;overflow:hidden" width="206" height="129" viewBox="0 0 206 129"><rect x="96.50" y="16.00" width="0.40" height="113.00" fill="#f0f0f0" /><svg x="3.40" y="21.70" width="89.60" height="77.10" overflow="hidden"><g transform="translate(-3.40,-21.70)"><rect x="3.40" y="21.70" width="89.60" height="77.10" fill="#86acda" /><rect x="3.40" y="40.97" width="89.60" height="15.42" fill="#a4c0e2" /><path d="M3.40 54.08 L6.98 44.83 L14.15 44.83 L17.74 54.08Z" fill="#b05a40"/><path d="M21.32 56.39 L23.11 46.37 L43.72 47.91 L48.20 56.39Z" fill="#3a3838"/><path d="M48.20 56.39 L51.78 47.91 L67.91 51.00 L73.29 56.39Z" fill="#403c3c"/><path d="M69.70 56.39 L76.87 51.00 L93.00 52.54 L93.00 57.17Z" fill="#c86a48"/><rect x="3.40" y="54.08" width="16.13" height="13.88" fill="#9a5a44" /><rect x="21.32" y="55.62" width="26.88" height="12.34" fill="#dcd2bc" /><rect x="48.20" y="55.62" width="26.88" height="12.34" fill="#8e5a48" /><rect x="75.08" y="56.39" width="17.92" height="11.56" fill="#a8644c" /><rect x="3.40" y="66.42" width="89.60" height="3.85" fill="#d4d4d0" /><rect x="3.40" y="70.27" width="89.60" height="28.53" fill="#6e9c36" /><ellipse cx="57.16" cy="89.55" rx="40.32" ry="9.25" fill="#3f6a1c" opacity="0.8"/><circle cx="7.88" cy="25.55" r="10.75" fill="#3a5a26" /><circle cx="19.53" cy="23.24" r="8.96" fill="#3a5a26" /><circle cx="30.28" cy="27.87" r="7.17" fill="#3a5a26" /><circle cx="12.36" cy="35.58" r="8.06" fill="#3a5a26" /><circle cx="41.03" cy="32.49" r="4.48" fill="#3a5a26" /></g></svg><text x="3.40" y="107.30" font-size="3.6" fill="#333" font-family="Liberation Sans" font-weight="bold" text-anchor="start" >as Make Home Security More Affordable</text><rect x="3.40" y="111.00" width="87.00" height="0.90" fill="#cccccc" /><rect x="3.40" y="114.20" width="87.00" height="0.90" fill="#cccccc" /><rect x="3.40" y="117.40" width="87.00" height="0.90" fill="#cccccc" /><rect x="3.40" y="120.60" width="78.30" height="0.90" fill="#cccccc" /><rect x="128.00" y="25.50" width="9.00" height="0.40" fill="#e8e8e8" /><rect x="110.00" y="100.50" width="27.00" height="0.40" fill="#e8e8e8" /><rect x="125.00" y="116.80" width="12.00" height="0.40" fill="#e8e8e8" /><rect x="138.00" y="24.50" width="16.20" height="0.80" fill="#8a8a8a" /><rect x="138.00" y="27.70" width="24.30" height="0.70" fill="#d2d2d2" /><rect x="138.00" y="30.90" width="16.20" height="0.70" fill="#d2d2d2" /><rect x="138.00" y="100.00" width="10.80" height="0.80" fill="#8a8a8a" /><rect x="138.00" y="103.20" width="16.20" height="0.70" fill="#d2d2d2" /><rect x="138.00" y="106.40" width="10.80" height="0.70" fill="#d2d2d2" /><rect x="138.00" y="116.50" width="10.80" height="0.80" fill="#8a8a8a" /><rect x="138.00" y="119.70" width="16.20" height="0.70" fill="#d2d2d2" /><rect x="138.00" y="122.90" width="10.80" height="0.70" fill="#d2d2d2" /><rect x="0" y="0" width="206" height="0.8" fill="#777"/><rect x="0" y="0" width="0.8" height="129" fill="#aaa"/></svg><div class="a" style="left:550px;top:761px;width:207px;height:131px;background:#1a1a1a"></div><svg class="a" style="left:550px;top:762px;background:#fff;overflow:hidden" width="206" height="129" viewBox="0 0 206 129"><rect x="49.40" y="16.00" width="0.40" height="113.00" fill="#f0f0f0" /><rect x="94.80" y="16.00" width="0.40" height="113.00" fill="#f0f0f0" /><rect x="137.40" y="16.00" width="0.40" height="113.00" fill="#f0f0f0" /><svg x="6.50" y="16.50" width="42.90" height="28.50" overflow="hidden"><g transform="translate(-6.50,-16.50)"><rect x="6.50" y="16.50" width="42.90" height="28.50" fill="#86acda" /><rect x="6.50" y="23.62" width="42.90" height="5.70" fill="#a4c0e2" /><path d="M6.50 28.47 L8.22 25.05 L11.65 25.05 L13.36 28.47Z" fill="#b05a40"/><path d="M15.08 29.33 L15.94 25.62 L25.80 26.19 L27.95 29.33Z" fill="#3a3838"/><path d="M27.95 29.33 L29.67 26.19 L37.39 27.33 L39.96 29.33Z" fill="#403c3c"/><path d="M38.25 29.33 L41.68 27.33 L49.40 27.90 L49.40 29.61Z" fill="#c86a48"/><rect x="6.50" y="28.47" width="7.72" height="5.13" fill="#9a5a44" /><rect x="15.08" y="29.04" width="12.87" height="4.56" fill="#dcd2bc" /><rect x="27.95" y="29.04" width="12.87" height="4.56" fill="#8e5a48" /><rect x="40.82" y="29.33" width="8.58" height="4.27" fill="#a8644c" /><rect x="6.50" y="33.03" width="42.90" height="1.43" fill="#d4d4d0" /><rect x="6.50" y="34.45" width="42.90" height="10.54" fill="#6e9c36" /><ellipse cx="32.24" cy="41.58" rx="19.30" ry="3.42" fill="#3f6a1c" opacity="0.8"/><circle cx="8.64" cy="17.93" r="5.15" fill="#3a5a26" /><circle cx="14.22" cy="17.07" r="4.29" fill="#3a5a26" /><circle cx="19.37" cy="18.78" r="3.43" fill="#3a5a26" /><circle cx="10.79" cy="21.63" r="3.86" fill="#3a5a26" /><circle cx="24.52" cy="20.49" r="2.15" fill="#3a5a26" /></g></svg><text x="8.00" y="50.00" font-size="2.9" fill="#333" font-family="Liberation Sans" font-weight="bold" text-anchor="start" >Ways Companies Make</text><text x="8.00" y="54.00" font-size="2.9" fill="#333" font-family="Liberation Sans" font-weight="bold" text-anchor="start" >Home Security More</text><text x="8.00" y="58.00" font-size="2.9" fill="#333" font-family="Liberation Sans" font-weight="bold" text-anchor="start" >Affordable</text><rect x="8.00" y="62.00" width="38.00" height="0.80" fill="#d6d6d6" /><rect x="8.00" y="64.60" width="38.00" height="0.80" fill="#d6d6d6" /><rect x="8.00" y="67.20" width="38.00" height="0.80" fill="#d6d6d6" /><rect x="8.00" y="69.80" width="38.00" height="0.80" fill="#d6d6d6" /><rect x="8.00" y="72.40" width="38.00" height="0.80" fill="#d6d6d6" /><rect x="8.00" y="75.00" width="38.00" height="0.80" fill="#d6d6d6" /><rect x="8.00" y="77.60" width="38.00" height="0.80" fill="#d6d6d6" /><rect x="8.00" y="80.20" width="38.00" height="0.80" fill="#d6d6d6" /><rect x="8.00" y="82.80" width="22.80" height="0.80" fill="#d6d6d6" /><rect x="8.00" y="94.00" width="38.00" height="0.80" fill="#d6d6d6" /><rect x="8.00" y="96.60" width="38.00" height="0.80" fill="#d6d6d6" /><rect x="8.00" y="99.20" width="38.00" height="0.80" fill="#d6d6d6" /><rect x="8.00" y="101.80" width="38.00" height="0.80" fill="#d6d6d6" /><rect x="8.00" y="104.40" width="38.00" height="0.80" fill="#d6d6d6" /><rect x="8.00" y="107.00" width="38.00" height="0.80" fill="#d6d6d6" /><rect x="8.00" y="109.60" width="22.80" height="0.80" fill="#d6d6d6" /><rect x="8.30" y="119.00" width="0.50" height="10.00" fill="#8cd0e0" /><rect x="10.50" y="120.00" width="34.00" height="0.90" fill="#c8c8c8" /><rect x="10.50" y="124.00" width="34.00" height="0.90" fill="#c8c8c8" /><rect x="10.50" y="128.00" width="34.00" height="0.90" fill="#c8c8c8" /><rect x="52.80" y="24.50" width="15.00" height="0.80" fill="#8a8a8a" /><rect x="52.80" y="27.70" width="22.50" height="0.70" fill="#d2d2d2" /><rect x="52.80" y="30.90" width="15.00" height="0.70" fill="#d2d2d2" /><rect x="52.80" y="49.00" width="10.80" height="0.80" fill="#8a8a8a" /><rect x="52.80" y="52.20" width="16.20" height="0.70" fill="#d2d2d2" /><rect x="52.80" y="55.40" width="10.80" height="0.70" fill="#d2d2d2" /><rect x="52.80" y="62.50" width="10.80" height="0.80" fill="#8a8a8a" /><rect x="52.80" y="65.70" width="16.20" height="0.70" fill="#d2d2d2" /><rect x="52.80" y="68.90" width="10.80" height="0.70" fill="#d2d2d2" /><rect x="52.80" y="114.00" width="15.00" height="0.80" fill="#8a8a8a" /><rect x="52.80" y="117.20" width="22.50" height="0.70" fill="#d2d2d2" /><rect x="52.80" y="120.40" width="15.00" height="0.70" fill="#d2d2d2" /><rect x="98.00" y="18.50" width="30.00" height="0.80" fill="#d0d0d0" /><rect x="98.00" y="22.55" width="30.00" height="0.80" fill="#d0d0d0" /><rect x="98.00" y="26.60" width="30.00" height="0.80" fill="#d0d0d0" /><rect x="98.00" y="30.65" width="30.00" height="0.80" fill="#d0d0d0" /><rect x="98.00" y="34.70" width="30.00" height="0.80" fill="#d0d0d0" /><rect x="98.00" y="38.75" width="30.00" height="0.80" fill="#d0d0d0" /><rect x="98.00" y="42.80" width="30.00" height="0.80" fill="#d0d0d0" /><rect x="98.00" y="46.85" width="30.00" height="0.80" fill="#d0d0d0" /><rect x="98.00" y="50.90" width="30.00" height="0.80" fill="#d0d0d0" /><rect x="98.00" y="54.95" width="18.00" height="0.80" fill="#d0d0d0" /><rect x="97.00" y="62.50" width="38.00" height="0.80" fill="#d0d0d0" /><rect x="97.00" y="64.80" width="34.20" height="0.80" fill="#d0d0d0" /><svg x="96.80" y="69.70" width="18.20" height="29.80" overflow="hidden"><g transform="translate(-96.80,-69.70)"><rect x="96.80" y="69.70" width="18.20" height="29.80" fill="#c4c6be" /><path d="M96.80 74.17 L115.00 69.70 L115.00 78.64 L96.80 82.22Z" fill="#e2e4dc"/><path d="M101.35 84.00 L115.00 80.43 L115.00 98.01 L103.17 99.50Z" fill="#eceee6"/><circle cx="107.72" cy="90.56" r="2.00" fill="#7a7c74" /><rect x="96.80" y="83.11" width="3.64" height="8.94" fill="#d8c8d0" /><rect x="98.62" y="71.49" width="6.37" height="2.98" fill="#9aa890" /><rect x="96.80" y="96.52" width="3.28" height="2.98" fill="#3a3a3a" /><rect x="107.72" y="71.19" width="6.37" height="3.58" fill="#c8aab8" opacity="0.6"/></g></svg><rect x="117.00" y="70.00" width="18.00" height="0.80" fill="#d8d8d8" /><rect x="117.00" y="72.60" width="18.00" height="0.80" fill="#d8d8d8" /><rect x="117.00" y="75.20" width="18.00" height="0.80" fill="#d8d8d8" /><rect x="117.00" y="77.80" width="18.00" height="0.80" fill="#d8d8d8" /><rect x="117.00" y="80.40" width="18.00" height="0.80" fill="#d8d8d8" /><rect x="117.00" y="83.00" width="18.00" height="0.80" fill="#d8d8d8" /><rect x="117.00" y="85.60" width="18.00" height="0.80" fill="#d8d8d8" /><rect x="117.00" y="88.20" width="18.00" height="0.80" fill="#d8d8d8" /><rect x="117.00" y="90.80" width="18.00" height="0.80" fill="#d8d8d8" /><rect x="117.00" y="93.40" width="18.00" height="0.80" fill="#d8d8d8" /><rect x="117.00" y="96.00" width="18.00" height="0.80" fill="#d8d8d8" /><rect x="117.00" y="98.60" width="18.00" height="0.80" fill="#d8d8d8" /><rect x="117.00" y="101.20" width="18.00" height="0.80" fill="#d8d8d8" /><rect x="117.00" y="103.80" width="18.00" height="0.80" fill="#d8d8d8" /><rect x="117.00" y="106.40" width="18.00" height="0.80" fill="#d8d8d8" /><rect x="117.00" y="109.00" width="12.60" height="0.80" fill="#d8d8d8" /><rect x="97.00" y="112.50" width="38.00" height="0.80" fill="#d6d6d6" /><rect x="97.00" y="115.10" width="38.00" height="0.80" fill="#d6d6d6" /><rect x="97.00" y="117.70" width="38.00" height="0.80" fill="#d6d6d6" /><rect x="97.00" y="120.30" width="38.00" height="0.80" fill="#d6d6d6" /><rect x="97.00" y="122.90" width="30.40" height="0.80" fill="#d6d6d6" /><rect x="141.40" y="18.50" width="20.40" height="0.80" fill="#8a8a8a" /><rect x="141.40" y="21.70" width="30.60" height="0.70" fill="#d2d2d2" /><rect x="141.40" y="24.90" width="20.40" height="0.70" fill="#d2d2d2" /><rect x="141.40" y="28.10" width="20.40" height="0.70" fill="#d2d2d2" /><rect x="141.40" y="81.50" width="15.60" height="0.80" fill="#8a8a8a" /><rect x="141.40" y="84.70" width="23.40" height="0.70" fill="#d2d2d2" /><rect x="141.40" y="87.90" width="15.60" height="0.70" fill="#d2d2d2" /><rect x="141.40" y="100.50" width="13.20" height="0.80" fill="#8a8a8a" /><rect x="141.40" y="103.70" width="19.80" height="0.70" fill="#d2d2d2" /><rect x="141.40" y="106.90" width="13.20" height="0.70" fill="#d2d2d2" /><rect x="0" y="0" width="206" height="0.8" fill="#777"/><rect x="0" y="0" width="0.8" height="129" fill="#aaa"/></svg><div class="a t" style="left:105.7px;top:138.59px;font-size:11px;color:#d6d6d6;letter-spacing:0.2px;-webkit-text-stroke:0.15px #d6d6d6">Spacing (Desktop)- Homepage</div><div class="a t" style="left:330.7px;top:138.59px;font-size:11px;color:#d6d6d6;letter-spacing:0.2px;-webkit-text-stroke:0.15px #d6d6d6">Spacing (Desktop)- Subpage</div><div class="a t" style="left:550.7px;top:138.59px;font-size:11px;color:#d6d6d6;letter-spacing:0.2px;-webkit-text-stroke:0.15px #d6d6d6">Spacing (Tablet)</div><div class="a t" style="left:770.7px;top:138.59px;font-size:11px;color:#d6d6d6;letter-spacing:0.2px;-webkit-text-stroke:0.15px #d6d6d6">Spacing (Mobile)</div><div class="a t" style="left:990.7px;top:138.59px;font-size:11px;color:#d6d6d6;letter-spacing:0.2px;-webkit-text-stroke:0.15px #d6d6d6">Typography (Desktop)</div><div class="a t" style="left:1210.7px;top:138.59px;font-size:11px;color:#d6d6d6;letter-spacing:0.2px;-webkit-text-stroke:0.15px #d6d6d6">Typography (Tablet)</div><div class="a t" style="left:105.7px;top:299.59px;font-size:11px;color:#d6d6d6;letter-spacing:0.2px;-webkit-text-stroke:0.15px #d6d6d6">Typography (Desktop)- Homepage</div><div class="a t" style="left:330.7px;top:299.59px;font-size:11px;color:#d6d6d6;letter-spacing:0.2px;-webkit-text-stroke:0.15px #d6d6d6">Typography (Desktop) - Subpage</div><div class="a t" style="left:550.7px;top:299.59px;font-size:11px;color:#d6d6d6;letter-spacing:0.2px;-webkit-text-stroke:0.15px #d6d6d6">Typography (Tablet) - Homepage</div><div class="a t" style="left:770.7px;top:299.59px;font-size:11px;color:#d6d6d6;letter-spacing:0.2px;-webkit-text-stroke:0.15px #d6d6d6">Typography (Tablet) - Subpage</div><div class="a t" style="left:990.7px;top:299.59px;font-size:11px;color:#d6d6d6;letter-spacing:0.2px;-webkit-text-stroke:0.15px #d6d6d6">Typography (Mobile)</div><div class="a t" style="left:1210.7px;top:299.59px;font-size:11px;color:#d6d6d6;letter-spacing:0.2px;-webkit-text-stroke:0.15px #d6d6d6">Typography (Mobile)</div><div class="a t" style="left:105.7px;top:447.59px;font-size:11px;color:#d6d6d6;letter-spacing:0.2px;-webkit-text-stroke:0.15px #d6d6d6">Buttons &amp; Links</div><div class="a t" style="left:330.7px;top:447.59px;font-size:11px;color:#d6d6d6;letter-spacing:0.2px;-webkit-text-stroke:0.15px #d6d6d6">Forms</div><div class="a t" style="left:550.7px;top:447.59px;font-size:11px;color:#d6d6d6;letter-spacing:0.2px;-webkit-text-stroke:0.15px #d6d6d6">Color</div><div class="a t" style="left:770.7px;top:447.59px;font-size:11px;color:#d6d6d6;letter-spacing:0.2px;-webkit-text-stroke:0.15px #d6d6d6">Illustration Style</div><div class="a t" style="left:105.7px;top:595.59px;font-size:11px;color:#d6d6d6;letter-spacing:0.2px;-webkit-text-stroke:0.15px #d6d6d6">Additional Class Styles (Desktop)</div><div class="a t" style="left:330.7px;top:595.59px;font-size:11px;color:#d6d6d6;letter-spacing:0.2px;-webkit-text-stroke:0.15px #d6d6d6">Icon Style</div><div class="a t" style="left:550.7px;top:595.59px;font-size:11px;color:#d6d6d6;letter-spacing:0.2px;-webkit-text-stroke:0.15px #d6d6d6">Nav Style</div><div class="a t" style="left:105.7px;top:743.59px;font-size:11px;color:#d6d6d6;letter-spacing:0.2px;-webkit-text-stroke:0.15px #d6d6d6">Additional Class Styles (Desktop) - B</div><div class="a t" style="left:330.7px;top:743.59px;font-size:11px;color:#d6d6d6;letter-spacing:0.2px;-webkit-text-stroke:0.15px #d6d6d6">Additional Class Styles (Tablet)</div><div class="a t" style="left:550.7px;top:743.59px;font-size:11px;color:#d6d6d6;letter-spacing:0.2px;-webkit-text-stroke:0.15px #d6d6d6">Additional Class Styles (Mobile)</div><div class="a" style="left:40px;top:73px;width:1525px;height:18px;background:#4b4b4b;"></div><div class="a" style="left:40px;top:90px;width:1525px;height:1px;background:#5e5e5e;"></div><svg class="a" style="left:40px;top:73px" width="1525" height="18" viewBox="0 0 1525 18" style="left:40px;top:73px;overflow:hidden"><rect x="25.00" y="1" width="1" height="17" fill="#6a6a6a"/><rect x="33.06" y="15" width="1" height="2" fill="#6a6a6a"/><rect x="41.11" y="14" width="1" height="3" fill="#6a6a6a"/><rect x="49.17" y="15" width="1" height="2" fill="#6a6a6a"/><rect x="57.23" y="1" width="1" height="17" fill="#6a6a6a"/><rect x="65.29" y="15" width="1" height="2" fill="#6a6a6a"/><rect x="73.34" y="14" width="1" height="3" fill="#6a6a6a"/><rect x="81.40" y="15" width="1" height="2" fill="#6a6a6a"/><rect x="89.46" y="1" width="1" height="17" fill="#6a6a6a"/><rect x="97.52" y="15" width="1" height="2" fill="#6a6a6a"/><rect x="105.57" y="14" width="1" height="3" fill="#6a6a6a"/><rect x="113.63" y="15" width="1" height="2" fill="#6a6a6a"/><rect x="121.69" y="1" width="1" height="17" fill="#6a6a6a"/><rect x="129.75" y="15" width="1" height="2" fill="#6a6a6a"/><rect x="137.81" y="14" width="1" height="3" fill="#6a6a6a"/><rect x="145.86" y="15" width="1" height="2" fill="#6a6a6a"/><rect x="153.92" y="1" width="1" height="17" fill="#6a6a6a"/><rect x="161.98" y="15" width="1" height="2" fill="#6a6a6a"/><rect x="170.03" y="14" width="1" height="3" fill="#6a6a6a"/><rect x="178.09" y="15" width="1" height="2" fill="#6a6a6a"/><rect x="186.15" y="1" width="1" height="17" fill="#6a6a6a"/><rect x="194.21" y="15" width="1" height="2" fill="#6a6a6a"/><rect x="202.26" y="14" width="1" height="3" fill="#6a6a6a"/><rect x="210.32" y="15" width="1" height="2" fill="#6a6a6a"/><rect x="218.38" y="1" width="1" height="17" fill="#6a6a6a"/><rect x="226.44" y="15" width="1" height="2" fill="#6a6a6a"/><rect x="234.50" y="14" width="1" height="3" fill="#6a6a6a"/><rect x="242.55" y="15" width="1" height="2" fill="#6a6a6a"/><rect x="250.61" y="1" width="1" height="17" fill="#6a6a6a"/><rect x="258.67" y="15" width="1" height="2" fill="#6a6a6a"/><rect x="266.73" y="14" width="1" height="3" fill="#6a6a6a"/><rect x="274.78" y="15" width="1" height="2" fill="#6a6a6a"/><rect x="282.84" y="1" width="1" height="17" fill="#6a6a6a"/><rect x="290.90" y="15" width="1" height="2" fill="#6a6a6a"/><rect x="298.95" y="14" width="1" height="3" fill="#6a6a6a"/><rect x="307.01" y="15" width="1" height="2" fill="#6a6a6a"/><rect x="315.07" y="1" width="1" height="17" fill="#6a6a6a"/><rect x="323.13" y="15" width="1" height="2" fill="#6a6a6a"/><rect x="331.19" y="14" width="1" height="3" fill="#6a6a6a"/><rect x="339.24" y="15" width="1" height="2" fill="#6a6a6a"/><rect x="347.30" y="1" width="1" height="17" fill="#6a6a6a"/><rect x="355.36" y="15" width="1" height="2" fill="#6a6a6a"/><rect x="363.41" y="14" width="1" height="3" fill="#6a6a6a"/><rect x="371.47" y="15" width="1" height="2" fill="#6a6a6a"/><rect x="379.53" y="1" width="1" height="17" fill="#6a6a6a"/><rect x="387.59" y="15" width="1" height="2" fill="#6a6a6a"/><rect x="395.64" y="14" width="1" height="3" fill="#6a6a6a"/><rect x="403.70" y="15" width="1" height="2" fill="#6a6a6a"/><rect x="411.76" y="1" width="1" height="17" fill="#6a6a6a"/><rect x="419.82" y="15" width="1" height="2" fill="#6a6a6a"/><rect x="427.88" y="14" width="1" height="3" fill="#6a6a6a"/><rect x="435.93" y="15" width="1" height="2" fill="#6a6a6a"/><rect x="443.99" y="1" width="1" height="17" fill="#6a6a6a"/><rect x="452.05" y="15" width="1" height="2" fill="#6a6a6a"/><rect x="460.10" y="14" width="1" height="3" fill="#6a6a6a"/><rect x="468.16" y="15" width="1" height="2" fill="#6a6a6a"/><rect x="476.22" y="1" width="1" height="17" fill="#6a6a6a"/><rect x="484.28" y="15" width="1" height="2" fill="#6a6a6a"/><rect x="492.34" y="14" width="1" height="3" fill="#6a6a6a"/><rect x="500.39" y="15" width="1" height="2" fill="#6a6a6a"/><rect x="508.45" y="1" width="1" height="17" fill="#6a6a6a"/><rect x="516.51" y="15" width="1" height="2" fill="#6a6a6a"/><rect x="524.56" y="14" width="1" height="3" fill="#6a6a6a"/><rect x="532.62" y="15" width="1" height="2" fill="#6a6a6a"/><rect x="540.68" y="1" width="1" height="17" fill="#6a6a6a"/><rect x="548.74" y="15" width="1" height="2" fill="#6a6a6a"/><rect x="556.79" y="14" width="1" height="3" fill="#6a6a6a"/><rect x="564.85" y="15" width="1" height="2" fill="#6a6a6a"/><rect x="572.91" y="1" width="1" height="17" fill="#6a6a6a"/><rect x="580.97" y="15" width="1" height="2" fill="#6a6a6a"/><rect x="589.02" y="14" width="1" height="3" fill="#6a6a6a"/><rect x="597.08" y="15" width="1" height="2" fill="#6a6a6a"/><rect x="605.14" y="1" width="1" height="17" fill="#6a6a6a"/><rect x="613.20" y="15" width="1" height="2" fill="#6a6a6a"/><rect x="621.25" y="14" width="1" height="3" fill="#6a6a6a"/><rect x="629.31" y="15" width="1" height="2" fill="#6a6a6a"/><rect x="637.37" y="1" width="1" height="17" fill="#6a6a6a"/><rect x="645.43" y="15" width="1" height="2" fill="#6a6a6a"/><rect x="653.48" y="14" width="1" height="3" fill="#6a6a6a"/><rect x="661.54" y="15" width="1" height="2" fill="#6a6a6a"/><rect x="669.60" y="1" width="1" height="17" fill="#6a6a6a"/><rect x="677.66" y="15" width="1" height="2" fill="#6a6a6a"/><rect x="685.71" y="14" width="1" height="3" fill="#6a6a6a"/><rect x="693.77" y="15" width="1" height="2" fill="#6a6a6a"/><rect x="701.83" y="1" width="1" height="17" fill="#6a6a6a"/><rect x="709.89" y="15" width="1" height="2" fill="#6a6a6a"/><rect x="717.94" y="14" width="1" height="3" fill="#6a6a6a"/><rect x="726.00" y="15" width="1" height="2" fill="#6a6a6a"/><rect x="734.06" y="1" width="1" height="17" fill="#6a6a6a"/><rect x="742.12" y="15" width="1" height="2" fill="#6a6a6a"/><rect x="750.17" y="14" width="1" height="3" fill="#6a6a6a"/><rect x="758.23" y="15" width="1" height="2" fill="#6a6a6a"/><rect x="766.29" y="1" width="1" height="17" fill="#6a6a6a"/><rect x="774.35" y="15" width="1" height="2" fill="#6a6a6a"/><rect x="782.40" y="14" width="1" height="3" fill="#6a6a6a"/><rect x="790.46" y="15" width="1" height="2" fill="#6a6a6a"/><rect x="798.52" y="1" width="1" height="17" fill="#6a6a6a"/><rect x="806.58" y="15" width="1" height="2" fill="#6a6a6a"/><rect x="814.63" y="14" width="1" height="3" fill="#6a6a6a"/><rect x="822.69" y="15" width="1" height="2" fill="#6a6a6a"/><rect x="830.75" y="1" width="1" height="17" fill="#6a6a6a"/><rect x="838.81" y="15" width="1" height="2" fill="#6a6a6a"/><rect x="846.86" y="14" width="1" height="3" fill="#6a6a6a"/><rect x="854.92" y="15" width="1" height="2" fill="#6a6a6a"/><rect x="862.98" y="1" width="1" height="17" fill="#6a6a6a"/><rect x="871.04" y="15" width="1" height="2" fill="#6a6a6a"/><rect x="879.09" y="14" width="1" height="3" fill="#6a6a6a"/><rect x="887.15" y="15" width="1" height="2" fill="#6a6a6a"/><rect x="895.21" y="1" width="1" height="17" fill="#6a6a6a"/><rect x="903.27" y="15" width="1" height="2" fill="#6a6a6a"/><rect x="911.32" y="14" width="1" height="3" fill="#6a6a6a"/><rect x="919.38" y="15" width="1" height="2" fill="#6a6a6a"/><rect x="927.44" y="1" width="1" height="17" fill="#6a6a6a"/><rect x="935.50" y="15" width="1" height="2" fill="#6a6a6a"/><rect x="943.55" y="14" width="1" height="3" fill="#6a6a6a"/><rect x="951.61" y="15" width="1" height="2" fill="#6a6a6a"/><rect x="959.67" y="1" width="1" height="17" fill="#6a6a6a"/><rect x="967.73" y="15" width="1" height="2" fill="#6a6a6a"/><rect x="975.78" y="14" width="1" height="3" fill="#6a6a6a"/><rect x="983.84" y="15" width="1" height="2" fill="#6a6a6a"/><rect x="991.90" y="1" width="1" height="17" fill="#6a6a6a"/><rect x="999.96" y="15" width="1" height="2" fill="#6a6a6a"/><rect x="1008.01" y="14" width="1" height="3" fill="#6a6a6a"/><rect x="1016.07" y="15" width="1" height="2" fill="#6a6a6a"/><rect x="1024.13" y="1" width="1" height="17" fill="#6a6a6a"/><rect x="1032.19" y="15" width="1" height="2" fill="#6a6a6a"/><rect x="1040.24" y="14" width="1" height="3" fill="#6a6a6a"/><rect x="1048.30" y="15" width="1" height="2" fill="#6a6a6a"/><rect x="1056.36" y="1" width="1" height="17" fill="#6a6a6a"/><rect x="1064.42" y="15" width="1" height="2" fill="#6a6a6a"/><rect x="1072.47" y="14" width="1" height="3" fill="#6a6a6a"/><rect x="1080.53" y="15" width="1" height="2" fill="#6a6a6a"/><rect x="1088.59" y="1" width="1" height="17" fill="#6a6a6a"/><rect x="1096.65" y="15" width="1" height="2" fill="#6a6a6a"/><rect x="1104.70" y="14" width="1" height="3" fill="#6a6a6a"/><rect x="1112.76" y="15" width="1" height="2" fill="#6a6a6a"/><rect x="1120.82" y="1" width="1" height="17" fill="#6a6a6a"/><rect x="1128.88" y="15" width="1" height="2" fill="#6a6a6a"/><rect x="1136.93" y="14" width="1" height="3" fill="#6a6a6a"/><rect x="1144.99" y="15" width="1" height="2" fill="#6a6a6a"/><rect x="1153.05" y="1" width="1" height="17" fill="#6a6a6a"/><rect x="1161.11" y="15" width="1" height="2" fill="#6a6a6a"/><rect x="1169.16" y="14" width="1" height="3" fill="#6a6a6a"/><rect x="1177.22" y="15" width="1" height="2" fill="#6a6a6a"/><rect x="1185.28" y="1" width="1" height="17" fill="#6a6a6a"/><rect x="1193.34" y="15" width="1" height="2" fill="#6a6a6a"/><rect x="1201.39" y="14" width="1" height="3" fill="#6a6a6a"/><rect x="1209.45" y="15" width="1" height="2" fill="#6a6a6a"/><rect x="1217.51" y="1" width="1" height="17" fill="#6a6a6a"/><rect x="1225.57" y="15" width="1" height="2" fill="#6a6a6a"/><rect x="1233.62" y="14" width="1" height="3" fill="#6a6a6a"/><rect x="1241.68" y="15" width="1" height="2" fill="#6a6a6a"/><rect x="1249.74" y="1" width="1" height="17" fill="#6a6a6a"/><rect x="1257.80" y="15" width="1" height="2" fill="#6a6a6a"/><rect x="1265.85" y="14" width="1" height="3" fill="#6a6a6a"/><rect x="1273.91" y="15" width="1" height="2" fill="#6a6a6a"/><rect x="1281.97" y="1" width="1" height="17" fill="#6a6a6a"/><rect x="1290.03" y="15" width="1" height="2" fill="#6a6a6a"/><rect x="1298.08" y="14" width="1" height="3" fill="#6a6a6a"/><rect x="1306.14" y="15" width="1" height="2" fill="#6a6a6a"/><rect x="1314.20" y="1" width="1" height="17" fill="#6a6a6a"/><rect x="1322.26" y="15" width="1" height="2" fill="#6a6a6a"/><rect x="1330.31" y="14" width="1" height="3" fill="#6a6a6a"/><rect x="1338.37" y="15" width="1" height="2" fill="#6a6a6a"/><rect x="1346.43" y="1" width="1" height="17" fill="#6a6a6a"/><rect x="1354.49" y="15" width="1" height="2" fill="#6a6a6a"/><rect x="1362.54" y="14" width="1" height="3" fill="#6a6a6a"/><rect x="1370.60" y="15" width="1" height="2" fill="#6a6a6a"/><rect x="1378.66" y="1" width="1" height="17" fill="#6a6a6a"/><rect x="1386.72" y="15" width="1" height="2" fill="#6a6a6a"/><rect x="1394.77" y="14" width="1" height="3" fill="#6a6a6a"/><rect x="1402.83" y="15" width="1" height="2" fill="#6a6a6a"/><rect x="1410.89" y="1" width="1" height="17" fill="#6a6a6a"/><rect x="1418.95" y="15" width="1" height="2" fill="#6a6a6a"/><rect x="1427.00" y="14" width="1" height="3" fill="#6a6a6a"/><rect x="1435.06" y="15" width="1" height="2" fill="#6a6a6a"/><rect x="1443.12" y="1" width="1" height="17" fill="#6a6a6a"/><rect x="1451.18" y="15" width="1" height="2" fill="#6a6a6a"/><rect x="1459.23" y="14" width="1" height="3" fill="#6a6a6a"/><rect x="1467.29" y="15" width="1" height="2" fill="#6a6a6a"/><rect x="1475.35" y="1" width="1" height="17" fill="#6a6a6a"/><rect x="1483.41" y="15" width="1" height="2" fill="#6a6a6a"/><rect x="1491.46" y="14" width="1" height="3" fill="#6a6a6a"/><rect x="1499.52" y="15" width="1" height="2" fill="#6a6a6a"/><rect x="1507.58" y="1" width="1" height="17" fill="#6a6a6a"/><rect x="1515.64" y="15" width="1" height="2" fill="#6a6a6a"/><rect x="1523.69" y="14" width="1" height="3" fill="#6a6a6a"/><rect x="1531.75" y="15" width="1" height="2" fill="#6a6a6a"/><text x="26.80" y="14.8" font-size="10.8" fill="#c8c8c8" font-family="Liberation Sans">400</text><text x="59.03" y="14.8" font-size="10.8" fill="#c8c8c8" font-family="Liberation Sans">600</text><text x="91.26" y="14.8" font-size="10.8" fill="#c8c8c8" font-family="Liberation Sans">800</text><text x="123.49" y="14.8" font-size="10.8" fill="#c8c8c8" font-family="Liberation Sans">1000</text><text x="155.72" y="14.8" font-size="10.8" fill="#c8c8c8" font-family="Liberation Sans">1200</text><text x="187.95" y="14.8" font-size="10.8" fill="#c8c8c8" font-family="Liberation Sans">1400</text><text x="220.18" y="14.8" font-size="10.8" fill="#c8c8c8" font-family="Liberation Sans">1600</text><text x="252.41" y="14.8" font-size="10.8" fill="#c8c8c8" font-family="Liberation Sans">1800</text><text x="284.64" y="14.8" font-size="10.8" fill="#c8c8c8" font-family="Liberation Sans">2000</text><text x="316.87" y="14.8" font-size="10.8" fill="#c8c8c8" font-family="Liberation Sans">2200</text><text x="349.10" y="14.8" font-size="10.8" fill="#c8c8c8" font-family="Liberation Sans">2400</text><text x="381.33" y="14.8" font-size="10.8" fill="#c8c8c8" font-family="Liberation Sans">2600</text><text x="413.56" y="14.8" font-size="10.8" fill="#c8c8c8" font-family="Liberation Sans">2800</text><text x="445.79" y="14.8" font-size="10.8" fill="#c8c8c8" font-family="Liberation Sans">3000</text><text x="478.02" y="14.8" font-size="10.8" fill="#c8c8c8" font-family="Liberation Sans">3200</text><text x="510.25" y="14.8" font-size="10.8" fill="#c8c8c8" font-family="Liberation Sans">3400</text><text x="542.48" y="14.8" font-size="10.8" fill="#c8c8c8" font-family="Liberation Sans">3600</text><text x="574.71" y="14.8" font-size="10.8" fill="#c8c8c8" font-family="Liberation Sans">3800</text><text x="606.94" y="14.8" font-size="10.8" fill="#c8c8c8" font-family="Liberation Sans">4000</text><text x="639.17" y="14.8" font-size="10.8" fill="#c8c8c8" font-family="Liberation Sans">4200</text><text x="671.40" y="14.8" font-size="10.8" fill="#c8c8c8" font-family="Liberation Sans">4400</text><text x="703.63" y="14.8" font-size="10.8" fill="#c8c8c8" font-family="Liberation Sans">4600</text><text x="735.86" y="14.8" font-size="10.8" fill="#c8c8c8" font-family="Liberation Sans">4800</text><text x="768.09" y="14.8" font-size="10.8" fill="#c8c8c8" font-family="Liberation Sans">5000</text><text x="800.32" y="14.8" font-size="10.8" fill="#c8c8c8" font-family="Liberation Sans">5200</text><text x="832.55" y="14.8" font-size="10.8" fill="#c8c8c8" font-family="Liberation Sans">5400</text><text x="864.78" y="14.8" font-size="10.8" fill="#c8c8c8" font-family="Liberation Sans">5600</text><text x="897.01" y="14.8" font-size="10.8" fill="#c8c8c8" font-family="Liberation Sans">5800</text><text x="929.24" y="14.8" font-size="10.8" fill="#c8c8c8" font-family="Liberation Sans">6000</text><text x="961.47" y="14.8" font-size="10.8" fill="#c8c8c8" font-family="Liberation Sans">6200</text><text x="993.70" y="14.8" font-size="10.8" fill="#c8c8c8" font-family="Liberation Sans">6400</text><text x="1025.93" y="14.8" font-size="10.8" fill="#c8c8c8" font-family="Liberation Sans">6600</text><text x="1058.16" y="14.8" font-size="10.8" fill="#c8c8c8" font-family="Liberation Sans">6800</text><text x="1090.39" y="14.8" font-size="10.8" fill="#c8c8c8" font-family="Liberation Sans">7000</text><text x="1122.62" y="14.8" font-size="10.8" fill="#c8c8c8" font-family="Liberation Sans">7200</text><text x="1154.85" y="14.8" font-size="10.8" fill="#c8c8c8" font-family="Liberation Sans">7400</text><text x="1187.08" y="14.8" font-size="10.8" fill="#c8c8c8" font-family="Liberation Sans">7600</text><text x="1219.31" y="14.8" font-size="10.8" fill="#c8c8c8" font-family="Liberation Sans">7800</text><text x="1251.54" y="14.8" font-size="10.8" fill="#c8c8c8" font-family="Liberation Sans">8000</text><text x="1283.77" y="14.8" font-size="10.8" fill="#c8c8c8" font-family="Liberation Sans">8200</text><text x="1316.00" y="14.8" font-size="10.8" fill="#c8c8c8" font-family="Liberation Sans">8400</text><text x="1348.23" y="14.8" font-size="10.8" fill="#c8c8c8" font-family="Liberation Sans">8600</text><text x="1380.46" y="14.8" font-size="10.8" fill="#c8c8c8" font-family="Liberation Sans">8800</text><text x="1412.69" y="14.8" font-size="10.8" fill="#c8c8c8" font-family="Liberation Sans">9000</text><text x="1444.92" y="14.8" font-size="10.8" fill="#c8c8c8" font-family="Liberation Sans">9200</text><text x="1477.15" y="14.8" font-size="10.8" fill="#c8c8c8" font-family="Liberation Sans">9400</text><text x="1509.38" y="14.8" font-size="10.8" fill="#c8c8c8" font-family="Liberation Sans">9600</text><rect x="0" y="0" width="16" height="18" fill="#4b4b4b"/><rect x="10" y="3.0" width="1" height="1" fill="#666"/><rect x="2" y="14" width="1" height="1" fill="#666"/><rect x="10" y="5.5" width="1" height="1" fill="#666"/><rect x="4" y="14" width="1" height="1" fill="#666"/><rect x="10" y="8.0" width="1" height="1" fill="#666"/><rect x="6" y="14" width="1" height="1" fill="#666"/><rect x="10" y="10.5" width="1" height="1" fill="#666"/><rect x="8" y="14" width="1" height="1" fill="#666"/><rect x="10" y="13.0" width="1" height="1" fill="#666"/><rect x="10" y="14" width="1" height="1" fill="#666"/><rect x="10" y="15.5" width="1" height="1" fill="#666"/><rect x="12" y="14" width="1" height="1" fill="#666"/><rect x="15" y="0" width="1" height="18" fill="#5e5e5e"/></svg><svg class="a" style="left:40px;top:91px" width="16" height="845"><rect x="0" y="0" width="16" height="845" fill="#4b4b4b"/><rect x="15" y="0" width="1" height="845" fill="#5e5e5e"/><rect x="1" y="3.10" width="14" height="1" fill="#6a6a6a"/><rect x="11" y="11.19" width="3" height="1" fill="#6a6a6a"/><rect x="10" y="19.28" width="4" height="1" fill="#6a6a6a"/><rect x="11" y="27.36" width="3" height="1" fill="#6a6a6a"/><text x="3" y="13.10" font-size="8.8" fill="#c8c8c8" font-family="Liberation Sans">4</text><text x="3" y="21.70" font-size="8.8" fill="#c8c8c8" font-family="Liberation Sans">0</text><text x="3" y="30.30" font-size="8.8" fill="#c8c8c8" font-family="Liberation Sans">0</text><rect x="1" y="35.45" width="14" height="1" fill="#6a6a6a"/><rect x="11" y="43.54" width="3" height="1" fill="#6a6a6a"/><rect x="10" y="51.63" width="4" height="1" fill="#6a6a6a"/><rect x="11" y="59.71" width="3" height="1" fill="#6a6a6a"/><text x="3" y="45.45" font-size="8.8" fill="#c8c8c8" font-family="Liberation Sans">2</text><text x="3" y="54.05" font-size="8.8" fill="#c8c8c8" font-family="Liberation Sans">0</text><text x="3" y="62.65" font-size="8.8" fill="#c8c8c8" font-family="Liberation Sans">0</text><rect x="1" y="67.80" width="14" height="1" fill="#6a6a6a"/><rect x="11" y="75.89" width="3" height="1" fill="#6a6a6a"/><rect x="10" y="83.98" width="4" height="1" fill="#6a6a6a"/><rect x="11" y="92.06" width="3" height="1" fill="#6a6a6a"/><text x="3" y="77.80" font-size="8.8" fill="#c8c8c8" font-family="Liberation Sans">0</text><rect x="1" y="100.15" width="14" height="1" fill="#6a6a6a"/><rect x="11" y="108.24" width="3" height="1" fill="#6a6a6a"/><rect x="10" y="116.33" width="4" height="1" fill="#6a6a6a"/><rect x="11" y="124.41" width="3" height="1" fill="#6a6a6a"/><text x="3" y="110.15" font-size="8.8" fill="#c8c8c8" font-family="Liberation Sans">2</text><text x="3" y="118.75" font-size="8.8" fill="#c8c8c8" font-family="Liberation Sans">0</text><text x="3" y="127.35" font-size="8.8" fill="#c8c8c8" font-family="Liberation Sans">0</text><rect x="1" y="132.50" width="14" height="1" fill="#6a6a6a"/><rect x="11" y="140.59" width="3" height="1" fill="#6a6a6a"/><rect x="10" y="148.68" width="4" height="1" fill="#6a6a6a"/><rect x="11" y="156.76" width="3" height="1" fill="#6a6a6a"/><text x="3" y="142.50" font-size="8.8" fill="#c8c8c8" font-family="Liberation Sans">4</text><text x="3" y="151.10" font-size="8.8" fill="#c8c8c8" font-family="Liberation Sans">0</text><text x="3" y="159.70" font-size="8.8" fill="#c8c8c8" font-family="Liberation Sans">0</text><rect x="1" y="164.85" width="14" height="1" fill="#6a6a6a"/><rect x="11" y="172.94" width="3" height="1" fill="#6a6a6a"/><rect x="10" y="181.03" width="4" height="1" fill="#6a6a6a"/><rect x="11" y="189.11" width="3" height="1" fill="#6a6a6a"/><text x="3" y="174.85" font-size="8.8" fill="#c8c8c8" font-family="Liberation Sans">6</text><text x="3" y="183.45" font-size="8.8" fill="#c8c8c8" font-family="Liberation Sans">0</text><text x="3" y="192.05" font-size="8.8" fill="#c8c8c8" font-family="Liberation Sans">0</text><rect x="1" y="197.20" width="14" height="1" fill="#6a6a6a"/><rect x="11" y="205.29" width="3" height="1" fill="#6a6a6a"/><rect x="10" y="213.38" width="4" height="1" fill="#6a6a6a"/><rect x="11" y="221.46" width="3" height="1" fill="#6a6a6a"/><text x="3" y="207.20" font-size="8.8" fill="#c8c8c8" font-family="Liberation Sans">8</text><text x="3" y="215.80" font-size="8.8" fill="#c8c8c8" font-family="Liberation Sans">0</text><text x="3" y="224.40" font-size="8.8" fill="#c8c8c8" font-family="Liberation Sans">0</text><rect x="1" y="229.55" width="14" height="1" fill="#6a6a6a"/><rect x="11" y="237.64" width="3" height="1" fill="#6a6a6a"/><rect x="10" y="245.73" width="4" height="1" fill="#6a6a6a"/><rect x="11" y="253.81" width="3" height="1" fill="#6a6a6a"/><text x="3" y="238.55" font-size="8" fill="#c4c4c4" font-family="Liberation Sans">1</text><text x="3" y="245.10" font-size="8" fill="#c4c4c4" font-family="Liberation Sans">0</text><text x="3" y="251.65" font-size="8" fill="#c4c4c4" font-family="Liberation Sans">0</text><text x="3" y="258.20" font-size="8" fill="#c4c4c4" font-family="Liberation Sans">0</text><rect x="1" y="261.90" width="14" height="1" fill="#6a6a6a"/><rect x="11" y="269.99" width="3" height="1" fill="#6a6a6a"/><rect x="10" y="278.08" width="4" height="1" fill="#6a6a6a"/><rect x="11" y="286.16" width="3" height="1" fill="#6a6a6a"/><text x="3" y="270.90" font-size="8" fill="#c4c4c4" font-family="Liberation Sans">1</text><text x="3" y="277.45" font-size="8" fill="#c4c4c4" font-family="Liberation Sans">2</text><text x="3" y="284.00" font-size="8" fill="#c4c4c4" font-family="Liberation Sans">0</text><text x="3" y="290.55" font-size="8" fill="#c4c4c4" font-family="Liberation Sans">0</text><rect x="1" y="294.25" width="14" height="1" fill="#6a6a6a"/><rect x="11" y="302.34" width="3" height="1" fill="#6a6a6a"/><rect x="10" y="310.43" width="4" height="1" fill="#6a6a6a"/><rect x="11" y="318.51" width="3" height="1" fill="#6a6a6a"/><text x="3" y="303.25" font-size="8" fill="#c4c4c4" font-family="Liberation Sans">1</text><text x="3" y="309.80" font-size="8" fill="#c4c4c4" font-family="Liberation Sans">4</text><text x="3" y="316.35" font-size="8" fill="#c4c4c4" font-family="Liberation Sans">0</text><text x="3" y="322.90" font-size="8" fill="#c4c4c4" font-family="Liberation Sans">0</text><rect x="1" y="326.60" width="14" height="1" fill="#6a6a6a"/><rect x="11" y="334.69" width="3" height="1" fill="#6a6a6a"/><rect x="10" y="342.78" width="4" height="1" fill="#6a6a6a"/><rect x="11" y="350.86" width="3" height="1" fill="#6a6a6a"/><text x="3" y="335.60" font-size="8" fill="#c4c4c4" font-family="Liberation Sans">1</text><text x="3" y="342.15" font-size="8" fill="#c4c4c4" font-family="Liberation Sans">6</text><text x="3" y="348.70" font-size="8" fill="#c4c4c4" font-family="Liberation Sans">0</text><text x="3" y="355.25" font-size="8" fill="#c4c4c4" font-family="Liberation Sans">0</text><rect x="1" y="358.95" width="14" height="1" fill="#6a6a6a"/><rect x="11" y="367.04" width="3" height="1" fill="#6a6a6a"/><rect x="10" y="375.13" width="4" height="1" fill="#6a6a6a"/><rect x="11" y="383.21" width="3" height="1" fill="#6a6a6a"/><text x="3" y="367.95" font-size="8" fill="#c4c4c4" font-family="Liberation Sans">1</text><text x="3" y="374.50" font-size="8" fill="#c4c4c4" font-family="Liberation Sans">8</text><text x="3" y="381.05" font-size="8" fill="#c4c4c4" font-family="Liberation Sans">0</text><text x="3" y="387.60" font-size="8" fill="#c4c4c4" font-family="Liberation Sans">0</text><rect x="1" y="391.30" width="14" height="1" fill="#6a6a6a"/><rect x="11" y="399.39" width="3" height="1" fill="#6a6a6a"/><rect x="10" y="407.48" width="4" height="1" fill="#6a6a6a"/><rect x="11" y="415.56" width="3" height="1" fill="#6a6a6a"/><text x="3" y="400.30" font-size="8" fill="#c4c4c4" font-family="Liberation Sans">2</text><text x="3" y="406.85" font-size="8" fill="#c4c4c4" font-family="Liberation Sans">0</text><text x="3" y="413.40" font-size="8" fill="#c4c4c4" font-family="Liberation Sans">0</text><text x="3" y="419.95" font-size="8" fill="#c4c4c4" font-family="Liberation Sans">0</text><rect x="1" y="423.65" width="14" height="1" fill="#6a6a6a"/><rect x="11" y="431.74" width="3" height="1" fill="#6a6a6a"/><rect x="10" y="439.83" width="4" height="1" fill="#6a6a6a"/><rect x="11" y="447.91" width="3" height="1" fill="#6a6a6a"/><text x="3" y="432.65" font-size="8" fill="#c4c4c4" font-family="Liberation Sans">2</text><text x="3" y="439.20" font-size="8" fill="#c4c4c4" font-family="Liberation Sans">2</text><text x="3" y="445.75" font-size="8" fill="#c4c4c4" font-family="Liberation Sans">0</text><text x="3" y="452.30" font-size="8" fill="#c4c4c4" font-family="Liberation Sans">0</text><rect x="1" y="456.00" width="14" height="1" fill="#6a6a6a"/><rect x="11" y="464.09" width="3" height="1" fill="#6a6a6a"/><rect x="10" y="472.17" width="4" height="1" fill="#6a6a6a"/><rect x="11" y="480.26" width="3" height="1" fill="#6a6a6a"/><text x="3" y="465.00" font-size="8" fill="#c4c4c4" font-family="Liberation Sans">2</text><text x="3" y="471.55" font-size="8" fill="#c4c4c4" font-family="Liberation Sans">4</text><text x="3" y="478.10" font-size="8" fill="#c4c4c4" font-family="Liberation Sans">0</text><text x="3" y="484.65" font-size="8" fill="#c4c4c4" font-family="Liberation Sans">0</text><rect x="1" y="488.35" width="14" height="1" fill="#6a6a6a"/><rect x="11" y="496.44" width="3" height="1" fill="#6a6a6a"/><rect x="10" y="504.52" width="4" height="1" fill="#6a6a6a"/><rect x="11" y="512.61" width="3" height="1" fill="#6a6a6a"/><text x="3" y="497.35" font-size="8" fill="#c4c4c4" font-family="Liberation Sans">2</text><text x="3" y="503.90" font-size="8" fill="#c4c4c4" font-family="Liberation Sans">6</text><text x="3" y="510.45" font-size="8" fill="#c4c4c4" font-family="Liberation Sans">0</text><text x="3" y="517.00" font-size="8" fill="#c4c4c4" font-family="Liberation Sans">0</text><rect x="1" y="520.70" width="14" height="1" fill="#6a6a6a"/><rect x="11" y="528.79" width="3" height="1" fill="#6a6a6a"/><rect x="10" y="536.88" width="4" height="1" fill="#6a6a6a"/><rect x="11" y="544.96" width="3" height="1" fill="#6a6a6a"/><text x="3" y="529.70" font-size="8" fill="#c4c4c4" font-family="Liberation Sans">2</text><text x="3" y="536.25" font-size="8" fill="#c4c4c4" font-family="Liberation Sans">8</text><text x="3" y="542.80" font-size="8" fill="#c4c4c4" font-family="Liberation Sans">0</text><text x="3" y="549.35" font-size="8" fill="#c4c4c4" font-family="Liberation Sans">0</text><rect x="1" y="553.05" width="14" height="1" fill="#6a6a6a"/><rect x="11" y="561.14" width="3" height="1" fill="#6a6a6a"/><rect x="10" y="569.22" width="4" height="1" fill="#6a6a6a"/><rect x="11" y="577.31" width="3" height="1" fill="#6a6a6a"/><text x="3" y="562.05" font-size="8" fill="#c4c4c4" font-family="Liberation Sans">3</text><text x="3" y="568.60" font-size="8" fill="#c4c4c4" font-family="Liberation Sans">0</text><text x="3" y="575.15" font-size="8" fill="#c4c4c4" font-family="Liberation Sans">0</text><text x="3" y="581.70" font-size="8" fill="#c4c4c4" font-family="Liberation Sans">0</text><rect x="1" y="585.40" width="14" height="1" fill="#6a6a6a"/><rect x="11" y="593.49" width="3" height="1" fill="#6a6a6a"/><rect x="10" y="601.58" width="4" height="1" fill="#6a6a6a"/><rect x="11" y="609.66" width="3" height="1" fill="#6a6a6a"/><text x="3" y="594.40" font-size="8" fill="#c4c4c4" font-family="Liberation Sans">3</text><text x="3" y="600.95" font-size="8" fill="#c4c4c4" font-family="Liberation Sans">2</text><text x="3" y="607.50" font-size="8" fill="#c4c4c4" font-family="Liberation Sans">0</text><text x="3" y="614.05" font-size="8" fill="#c4c4c4" font-family="Liberation Sans">0</text><rect x="1" y="617.75" width="14" height="1" fill="#6a6a6a"/><rect x="11" y="625.84" width="3" height="1" fill="#6a6a6a"/><rect x="10" y="633.92" width="4" height="1" fill="#6a6a6a"/><rect x="11" y="642.01" width="3" height="1" fill="#6a6a6a"/><text x="3" y="626.75" font-size="8" fill="#c4c4c4" font-family="Liberation Sans">3</text><text x="3" y="633.30" font-size="8" fill="#c4c4c4" font-family="Liberation Sans">4</text><text x="3" y="639.85" font-size="8" fill="#c4c4c4" font-family="Liberation Sans">0</text><text x="3" y="646.40" font-size="8" fill="#c4c4c4" font-family="Liberation Sans">0</text><rect x="1" y="650.10" width="14" height="1" fill="#6a6a6a"/><rect x="11" y="658.19" width="3" height="1" fill="#6a6a6a"/><rect x="10" y="666.28" width="4" height="1" fill="#6a6a6a"/><rect x="11" y="674.36" width="3" height="1" fill="#6a6a6a"/><text x="3" y="659.10" font-size="8" fill="#c4c4c4" font-family="Liberation Sans">3</text><text x="3" y="665.65" font-size="8" fill="#c4c4c4" font-family="Liberation Sans">6</text><text x="3" y="672.20" font-size="8" fill="#c4c4c4" font-family="Liberation Sans">0</text><text x="3" y="678.75" font-size="8" fill="#c4c4c4" font-family="Liberation Sans">0</text><rect x="1" y="682.45" width="14" height="1" fill="#6a6a6a"/><rect x="11" y="690.54" width="3" height="1" fill="#6a6a6a"/><rect x="10" y="698.62" width="4" height="1" fill="#6a6a6a"/><rect x="11" y="706.71" width="3" height="1" fill="#6a6a6a"/><text x="3" y="691.45" font-size="8" fill="#c4c4c4" font-family="Liberation Sans">3</text><text x="3" y="698.00" font-size="8" fill="#c4c4c4" font-family="Liberation Sans">8</text><text x="3" y="704.55" font-size="8" fill="#c4c4c4" font-family="Liberation Sans">0</text><text x="3" y="711.10" font-size="8" fill="#c4c4c4" font-family="Liberation Sans">0</text><rect x="1" y="714.80" width="14" height="1" fill="#6a6a6a"/><rect x="11" y="722.89" width="3" height="1" fill="#6a6a6a"/><rect x="10" y="730.97" width="4" height="1" fill="#6a6a6a"/><rect x="11" y="739.06" width="3" height="1" fill="#6a6a6a"/><text x="3" y="723.80" font-size="8" fill="#c4c4c4" font-family="Liberation Sans">4</text><text x="3" y="730.35" font-size="8" fill="#c4c4c4" font-family="Liberation Sans">0</text><text x="3" y="736.90" font-size="8" fill="#c4c4c4" font-family="Liberation Sans">0</text><text x="3" y="743.45" font-size="8" fill="#c4c4c4" font-family="Liberation Sans">0</text><rect x="1" y="747.15" width="14" height="1" fill="#6a6a6a"/><rect x="11" y="755.24" width="3" height="1" fill="#6a6a6a"/><rect x="10" y="763.33" width="4" height="1" fill="#6a6a6a"/><rect x="11" y="771.41" width="3" height="1" fill="#6a6a6a"/><text x="3" y="756.15" font-size="8" fill="#c4c4c4" font-family="Liberation Sans">4</text><text x="3" y="762.70" font-size="8" fill="#c4c4c4" font-family="Liberation Sans">2</text><text x="3" y="769.25" font-size="8" fill="#c4c4c4" font-family="Liberation Sans">0</text><text x="3" y="775.80" font-size="8" fill="#c4c4c4" font-family="Liberation Sans">0</text><rect x="1" y="779.50" width="14" height="1" fill="#6a6a6a"/><rect x="11" y="787.59" width="3" height="1" fill="#6a6a6a"/><rect x="10" y="795.67" width="4" height="1" fill="#6a6a6a"/><rect x="11" y="803.76" width="3" height="1" fill="#6a6a6a"/><text x="3" y="788.50" font-size="8" fill="#c4c4c4" font-family="Liberation Sans">4</text><text x="3" y="795.05" font-size="8" fill="#c4c4c4" font-family="Liberation Sans">4</text><text x="3" y="801.60" font-size="8" fill="#c4c4c4" font-family="Liberation Sans">0</text><text x="3" y="808.15" font-size="8" fill="#c4c4c4" font-family="Liberation Sans">0</text><rect x="1" y="811.85" width="14" height="1" fill="#6a6a6a"/><rect x="11" y="819.94" width="3" height="1" fill="#6a6a6a"/><rect x="10" y="828.03" width="4" height="1" fill="#6a6a6a"/><rect x="11" y="836.11" width="3" height="1" fill="#6a6a6a"/><text x="3" y="820.85" font-size="8" fill="#c4c4c4" font-family="Liberation Sans">4</text><text x="3" y="827.40" font-size="8" fill="#c4c4c4" font-family="Liberation Sans">6</text><text x="3" y="833.95" font-size="8" fill="#c4c4c4" font-family="Liberation Sans">0</text><text x="3" y="840.50" font-size="8" fill="#c4c4c4" font-family="Liberation Sans">0</text><rect x="1" y="844.20" width="14" height="1" fill="#6a6a6a"/><rect x="11" y="852.29" width="3" height="1" fill="#6a6a6a"/><rect x="10" y="860.38" width="4" height="1" fill="#6a6a6a"/><rect x="11" y="868.46" width="3" height="1" fill="#6a6a6a"/><text x="3" y="853.20" font-size="8" fill="#c4c4c4" font-family="Liberation Sans">4</text><text x="3" y="859.75" font-size="8" fill="#c4c4c4" font-family="Liberation Sans">8</text><text x="3" y="866.30" font-size="8" fill="#c4c4c4" font-family="Liberation Sans">0</text><text x="3" y="872.85" font-size="8" fill="#c4c4c4" font-family="Liberation Sans">0</text></svg><div class="a" style="left:1565px;top:73px;width:15px;height:864px;background:#4a4a4a;"></div><div class="a" style="left:1568px;top:336px;width:10px;height:323px;border-radius:5px;background:#6b6b6b"></div><div class="a" style="left:40px;top:937px;width:1540px;height:16px;background:#4a4a4a;"></div><div class="a" style="left:40px;top:937px;width:235px;height:16px;background:#535353;"></div><div class="a" style="left:275px;top:937px;width:1px;height:16px;background:#444;"></div><div class="a t" style="left:52.3px;top:939.91px;font-size:9.6px;color:#e6e6e6;font-weight:normal;-webkit-text-stroke:0.2px #e6e6e6">16.67%</div><div class="a t" style="left:136.8px;top:939.58px;font-size:9.95px;color:#e6e6e6;font-weight:normal;-webkit-text-stroke:0.2px #e6e6e6">Doc: 130.0M/1.61G</div><svg class="a" style="left:264px;top:940px" width="6" height="10" viewBox="0 0 6 10" ><path d="M1 0.5 L5 5 L1 9.5" stroke="#d0d0d0" stroke-width="1.1" fill="none"/></svg><div class="a" style="left:708px;top:940px;width:440px;height:10px;border-radius:5px;background:#6b6b6b"></div><div class="a" style="left:1565px;top:937px;width:15px;height:16px;background:#4a4a4a;"></div><div class="a" style="left:1580px;top:54px;width:4px;height:899px;background:#3b3b3b;"></div><div class="a" style="left:1584px;top:54px;width:35px;height:899px;background:#535353;"></div><div class="a" style="left:1619px;top:54px;width:3px;height:899px;background:#3b3b3b;"></div><div class="a" style="left:1584px;top:54px;width:272px;height:12px;background:#474747;"></div><svg class="a" style="left:1603px;top:57px" width="10" height="7" viewBox="0 0 10 7" ><path d="M4 0.5 L1.5 3 L4 5.5 M8 0.5 L5.5 3 L8 5.5" stroke="#bdbdbd" stroke-width="1" fill="none"/></svg><svg class="a" style="left:1841px;top:57px" width="10" height="7" viewBox="0 0 10 7" ><path d="M1 0.5 L3.5 3 L1 5.5 M5 0.5 L7.5 3 L5 5.5" stroke="#bdbdbd" stroke-width="1" fill="none"/></svg><div class="a" style="left:1584px;top:66px;width:35px;height:2px;background:#3b3b3b;"></div><div class="a" style="left:1584px;top:105px;width:35px;height:2px;background:#3b3b3b;"></div><div class="a" style="left:1584px;top:145px;width:35px;height:2px;background:#3b3b3b;"></div><div class="a" style="left:1584px;top:212px;width:35px;height:2px;background:#3b3b3b;"></div><div class="a" style="left:1584px;top:251px;width:35px;height:2px;background:#3b3b3b;"></div><div class="a" style="left:1584px;top:318px;width:35px;height:2px;background:#3b3b3b;"></div><div class="a" style="left:1584px;top:358px;width:35px;height:2px;background:#3b3b3b;"></div><svg class="a" style="left:1592px;top:70px" width="20" height="4" viewBox="0 0 20 4" ><rect x="0" y="0" width="1" height="4" fill="#444"/><rect x="2" y="0" width="1" height="4" fill="#444"/><rect x="4" y="0" width="1" height="4" fill="#444"/><rect x="6" y="0" width="1" height="4" fill="#444"/><rect x="8" y="0" width="1" height="4" fill="#444"/><rect x="10" y="0" width="1" height="4" fill="#444"/><rect x="12" y="0" width="1" height="4" fill="#444"/><rect x="14" y="0" width="1" height="4" fill="#444"/><rect x="16" y="0" width="1" height="4" fill="#444"/><rect x="18" y="0" width="1" height="4" fill="#444"/></svg><svg class="a" style="left:1592px;top:109px" width="20" height="4" viewBox="0 0 20 4" ><rect x="0" y="0" width="1" height="4" fill="#444"/><rect x="2" y="0" width="1" height="4" fill="#444"/><rect x="4" y="0" width="1" height="4" fill="#444"/><rect x="6" y="0" width="1" height="4" fill="#444"/><rect x="8" y="0" width="1" height="4" fill="#444"/><rect x="10" y="0" width="1" height="4" fill="#444"/><rect x="12" y="0" width="1" height="4" fill="#444"/><rect x="14" y="0" width="1" height="4" fill="#444"/><rect x="16" y="0" width="1" height="4" fill="#444"/><rect x="18" y="0" width="1" height="4" fill="#444"/></svg><svg class="a" style="left:1592px;top:149px" width="20" height="4" viewBox="0 0 20 4" ><rect x="0" y="0" width="1" height="4" fill="#444"/><rect x="2" y="0" width="1" height="4" fill="#444"/><rect x="4" y="0" width="1" height="4" fill="#444"/><rect x="6" y="0" width="1" height="4" fill="#444"/><rect x="8" y="0" width="1" height="4" fill="#444"/><rect x="10" y="0" width="1" height="4" fill="#444"/><rect x="12" y="0" width="1" height="4" fill="#444"/><rect x="14" y="0" width="1" height="4" fill="#444"/><rect x="16" y="0" width="1" height="4" fill="#444"/><rect x="18" y="0" width="1" height="4" fill="#444"/></svg><svg class="a" style="left:1592px;top:216px" width="20" height="4" viewBox="0 0 20 4" ><rect x="0" y="0" width="1" height="4" fill="#444"/><rect x="2" y="0" width="1" height="4" fill="#444"/><rect x="4" y="0" width="1" height="4" fill="#444"/><rect x="6" y="0" width="1" height="4" fill="#444"/><rect x="8" y="0" width="1" height="4" fill="#444"/><rect x="10" y="0" width="1" height="4" fill="#444"/><rect x="12" y="0" width="1" height="4" fill="#444"/><rect x="14" y="0" width="1" height="4" fill="#444"/><rect x="16" y="0" width="1" height="4" fill="#444"/><rect x="18" y="0" width="1" height="4" fill="#444"/></svg><svg class="a" style="left:1592px;top:255px" width="20" height="4" viewBox="0 0 20 4" ><rect x="0" y="0" width="1" height="4" fill="#444"/><rect x="2" y="0" width="1" height="4" fill="#444"/><rect x="4" y="0" width="1" height="4" fill="#444"/><rect x="6" y="0" width="1" height="4" fill="#444"/><rect x="8" y="0" width="1" height="4" fill="#444"/><rect x="10" y="0" width="1" height="4" fill="#444"/><rect x="12" y="0" width="1" height="4" fill="#444"/><rect x="14" y="0" width="1" height="4" fill="#444"/><rect x="16" y="0" width="1" height="4" fill="#444"/><rect x="18" y="0" width="1" height="4" fill="#444"/></svg><svg class="a" style="left:1592px;top:322px" width="20" height="4" viewBox="0 0 20 4" ><rect x="0" y="0" width="1" height="4" fill="#444"/><rect x="2" y="0" width="1" height="4" fill="#444"/><rect x="4" y="0" width="1" height="4" fill="#444"/><rect x="6" y="0" width="1" height="4" fill="#444"/><rect x="8" y="0" width="1" height="4" fill="#444"/><rect x="10" y="0" width="1" height="4" fill="#444"/><rect x="12" y="0" width="1" height="4" fill="#444"/><rect x="14" y="0" width="1" height="4" fill="#444"/><rect x="16" y="0" width="1" height="4" fill="#444"/><rect x="18" y="0" width="1" height="4" fill="#444"/></svg><svg class="a" style="left:1593px;top:79px" width="18" height="19" viewBox="0 0 18 19" ><rect x="1" y="1" width="5" height="4.5" stroke="#dedede" stroke-width="1" fill="none"/><rect x="1" y="7" width="5" height="4.5" stroke="#dedede" stroke-width="1" fill="none"/><rect x="0.5" y="12.5" width="6" height="5.5" fill="#dedede"/><path d="M10.5 4 C15.5 6 15.5 13 10 17" stroke="#dedede" stroke-width="1.6" fill="none"/><path d="M8.5 5.5 L10 1 L13 4.5Z" fill="#dedede"/></svg><svg class="a" style="left:1593px;top:119px" width="19" height="19" viewBox="0 0 19 19" ><path d="M1 1 L8 1 L17 14 L17 18 L11 18 L1 4Z" stroke="#dedede" stroke-width="1.3" fill="none"/><rect x="11" y="9" width="5" height="7" stroke="#dedede" fill="none"/><path d="M2 8 L2 12 L6 12" stroke="#dedede" fill="none"/></svg><svg class="a" style="left:1594px;top:158px" width="17" height="20" viewBox="0 0 17 20" ><rect x="4" y="10" width="9" height="9" fill="#dedede"/><path d="M6 10 L4 4 M8.5 10 L8.5 2 M11 10 L13 5" stroke="#dedede" stroke-width="1.2"/><circle cx="4" cy="3.5" r="2" fill="#dedede"/><circle cx="13" cy="4" r="2" fill="#dedede"/><circle cx="8.5" cy="2" r="1.5" fill="#dedede"/></svg><svg class="a" style="left:1593px;top:187px" width="19" height="17" viewBox="0 0 19 17" ><path d="M2 4 C4 1 8 1 9 4Z" fill="#dedede"/><rect x="9" y="3" width="9" height="2" fill="#dedede"/><rect x="2" y="11" width="9" height="2" fill="#dedede"/><path d="M11 12 L17 8 C18 11 17 15 14 16Z" fill="#dedede"/></svg><div class="a t" style="left:1593px;top:225px;font-size:18px;color:#dedede;font-weight:normal;font-family:'Liberation Serif',serif"><i>A</i></div><svg class="a" style="left:1594px;top:266px" width="16" height="16" viewBox="0 0 16 16" ><rect x="1" y="1" width="14" height="14" stroke="#dedede" stroke-width="1.4" fill="none"/><rect x="3" y="3" width="5" height="5" fill="#dedede"/><rect x="3" y="9.5" width="10" height="1.5" fill="#dedede"/><rect x="9" y="5" width="4" height="1.5" fill="#dedede"/></svg><svg class="a" style="left:1594px;top:293px" width="16" height="17" viewBox="0 0 16 17" ><path d="M1 1 L15 1 L15 11 L10 16 L1 16Z" fill="#dedede"/><path d="M3 4 L12 4 M3 7 L12 7 M3 10 L9 10" stroke="#535353" stroke-width="1"/><path d="M10 16 L10 11 L15 11" stroke="#535353" stroke-width="1" fill="none"/></svg><svg class="a" style="left:1593px;top:333px" width="17" height="17" viewBox="0 0 17 17" ><circle cx="8.5" cy="8.5" r="7.3" stroke="#dedede" stroke-width="1.4" fill="none"/><rect x="7.7" y="7" width="1.7" height="6" fill="#dedede"/><circle cx="8.5" cy="4.6" r="1" fill="#dedede"/></svg><div class="a" style="left:1622px;top:66px;width:234px;height:887px;background:#535353;"></div><div class="a" style="left:1622px;top:66px;width:234px;height:17px;background:#474747;"></div><div class="a" style="left:1662px;top:66px;width:1px;height:17px;background:#3f3f3f;"></div><div class="a" style="left:1722px;top:66px;width:1px;height:17px;background:#3f3f3f;"></div><div class="a" style="left:1723px;top:66px;width:56px;height:17px;background:#535353;"></div><div class="a t" style="left:1629px;top:68.75px;font-size:10.2px;color:#c8c8c8;font-weight:bold;">Color</div><div class="a t" style="left:1669px;top:68.84px;font-size:10.1px;color:#c8c8c8;font-weight:bold;">Swatches</div><div class="a t" style="left:1729px;top:68.56px;font-size:10.4px;color:#f4f4f4;font-weight:bold;">Libraries</div><svg class="a" style="left:1839px;top:70px" width="12" height="9" viewBox="0 0 12 9" ><rect x="0" y="0" width="12" height="1.2" fill="#a8a8a8"/><rect x="0" y="2" width="12" height="1.2" fill="#a8a8a8"/><rect x="0" y="4" width="12" height="1.2" fill="#a8a8a8"/><rect x="0" y="6" width="12" height="1.2" fill="#a8a8a8"/><rect x="0" y="8" width="12" height="1.2" fill="#a8a8a8"/></svg><div class="a" style="left:1631px;top:91px;width:161px;height:17px;border-radius:3px;background:#424242;border:1px solid #4a4a4a"></div><svg class="a" style="left:1636px;top:95px" width="12" height="10" viewBox="0 0 12 10" ><circle cx="3.5" cy="2.5" r="2" fill="#e0e0e0"/><path d="M0 9 C0 5 7 5 7 9Z" fill="#e0e0e0"/><circle cx="8.5" cy="4" r="2" fill="#e0e0e0" stroke="#424242" stroke-width="0.8"/><path d="M5 10 C5 6.5 12 6.5 12 10Z" fill="#e0e0e0" stroke="#424242" stroke-width="0.8"/></svg><div class="a t" style="left:1651.2px;top:94.01px;font-size:10.55px;color:#ececec;font-weight:normal;-webkit-text-stroke:0.2px #ececec">SafeWise Branding</div><svg class="a" style="left:1780px;top:98px" width="8" height="5" viewBox="0 0 8 5" ><path d="M0.5 0.5 L4.0 4 L7.5 0.5" stroke="#d0d0d0" stroke-width="1.2" fill="none"/></svg><svg class="a" style="left:1805px;top:95px" width="12" height="11" viewBox="0 0 12 11" ><rect x="0" y="0" width="5" height="4.5" fill="#e6e6e6"/><rect x="6.5" y="0" width="5" height="4.5" fill="#e6e6e6"/><rect x="0" y="6" width="5" height="4.5" fill="#e6e6e6"/><rect x="6.5" y="6" width="5" height="4.5" fill="#e6e6e6"/></svg><div class="a" style="left:1825px;top:90px;width:20px;height:21px;border-radius:2px;background:#383838"></div><svg class="a" style="left:1830px;top:95px" width="11" height="11" viewBox="0 0 11 11" ><rect x="0" y="0.0" width="11" height="1.4" fill="#f0f0f0"/><rect x="0" y="2.5" width="11" height="1.4" fill="#f0f0f0"/><rect x="0" y="5.0" width="11" height="1.4" fill="#f0f0f0"/><rect x="0" y="7.5" width="11" height="1.4" fill="#f0f0f0"/><rect x="0" y="10.0" width="11" height="1.4" fill="#f0f0f0"/></svg><svg class="a" style="left:1630px;top:123px" width="11" height="11" viewBox="0 0 11 11" ><circle cx="6.5" cy="4.5" r="3.5" stroke="#d8d8d8" stroke-width="1.3" fill="none"/><path d="M4 7 L1 10" stroke="#d8d8d8" stroke-width="1.7"/></svg><div class="a t" style="left:1644.6px;top:120.98px;font-size:10.8px;color:#707070;font-weight:normal;">Search Adobe Stock</div><svg class="a" style="left:1836px;top:126px" width="8" height="5" viewBox="0 0 8 5" ><path d="M0.5 0.5 L4.0 4 L7.5 0.5" stroke="#cfcfcf" stroke-width="1.2" fill="none"/></svg><div class="a" style="left:1630px;top:137px;width:217px;height:1px;background:#5f5f5f;"></div><div class="a" style="left:1622px;top:143px;width:234px;height:1px;background:#4a4a4a;"></div><div class="a" style="left:1622px;top:144px;width:234px;height:168px;background:#505050;"></div><div class="a" style="left:1839px;top:144px;width:17px;height:168px;background:#4b4b4b;"></div><div class="a" style="left:1842px;top:148px;width:10px;height:10px;border-radius:5px;background:#6a6a6a"></div><svg class="a" style="left:1632px;top:158px" width="9" height="7" viewBox="0 0 9 7" ><path d="M0 0 L9 0 L4.5 7Z" fill="#d0d0d0"/></svg><div class="a t" style="left:1643px;top:153.98px;font-size:10.9px;color:#d8d8d8;font-weight:normal;-webkit-text-stroke:0.15px #d8d8d8">Colors</div><div class="a" style="left:1632px;top:173px;width:206px;height:18px;background:#6a6a6a;"></div><div class="a" style="left:1632px;top:175.0px;width:30px;height:15px;background:#88a653;border:1px solid #3a3a3a"></div><div class="a t" style="left:1671px;top:176.36px;font-size:10.5px;color:#e6e6e6;font-weight:normal;-webkit-text-stroke:0.15px #e6e6e6">#88A653</div><div class="a" style="left:1632px;top:196.2px;width:30px;height:15px;background:#4e423f;border:1px solid #3a3a3a"></div><div class="a t" style="left:1671px;top:197.56px;font-size:10.5px;color:#e6e6e6;font-weight:normal;-webkit-text-stroke:0.15px #e6e6e6">#4E423F</div><div class="a" style="left:1632px;top:217.4px;width:30px;height:15px;background:#a55a4b;border:1px solid #3a3a3a"></div><div class="a t" style="left:1671px;top:218.76px;font-size:10.5px;color:#e6e6e6;font-weight:normal;-webkit-text-stroke:0.15px #e6e6e6">#A55A4B</div><div class="a" style="left:1632px;top:238.6px;width:30px;height:15px;background:#ae4332;border:1px solid #3a3a3a"></div><div class="a t" style="left:1671px;top:239.96px;font-size:10.5px;color:#e6e6e6;font-weight:normal;-webkit-text-stroke:0.15px #e6e6e6">#AE4332</div><div class="a" style="left:1632px;top:259.8px;width:30px;height:15px;background:#f3f3f3;border:1px solid #3a3a3a"></div><div class="a t" style="left:1671px;top:261.16px;font-size:10.5px;color:#e6e6e6;font-weight:normal;-webkit-text-stroke:0.15px #e6e6e6">#F3F3F3</div><div class="a" style="left:1632px;top:281.0px;width:30px;height:15px;background:#e0e0e0;border:1px solid #3a3a3a"></div><div class="a t" style="left:1671px;top:282.36px;font-size:10.5px;color:#e6e6e6;font-weight:normal;-webkit-text-stroke:0.15px #e6e6e6">#E0E0E0</div><div class="a" style="left:1632px;top:302.2px;width:30px;height:15px;background:#d8b983;border:1px solid #3a3a3a"></div><div class="a t" style="left:1671px;top:303.56px;font-size:10.5px;color:#e6e6e6;font-weight:normal;-webkit-text-stroke:0.15px #e6e6e6">#D8B983</div><div class="a" style="left:1622px;top:312px;width:218px;height:24px;background:#535353;"></div><div class="a" style="left:1839px;top:312px;width:17px;height:24px;background:#535353;"></div><svg class="a" style="left:1632px;top:318px" width="13" height="13" viewBox="0 0 13 13" ><path d="M6.5 0 L12 5 L9 5 L9 8 L4 8 L4 5 L1 5Z" fill="#dcdcdc"/><rect x="0" y="9.5" width="13" height="1.3" fill="#dcdcdc"/><rect x="0" y="11.7" width="13" height="1.3" fill="#dcdcdc"/></svg><svg class="a" style="left:1656px;top:318px" width="15" height="13" viewBox="0 0 15 13" ><path d="M1 10 L12 1 L12 10Z" stroke="#7a7a7a" stroke-width="1.2" fill="none"/><circle cx="9" cy="9" r="3" fill="#7a7a7a"/></svg><div class="a t" style="left:1680px;top:315px;font-size:15px;color:#8a8a8a;font-weight:normal;">A</div><div class="a t" style="left:1704px;top:315px;font-size:15px;color:#7a7a7a;font-weight:normal;font-family:'Liberation Serif',serif"><i>fx</i></div><div class="a" style="left:1728px;top:317px;width:14px;height:14px;background:#88a653;border:1px solid #cfcfcf"></div><svg class="a" style="left:1807px;top:318px" width="16" height="13" viewBox="0 0 16 13" ><ellipse cx="5.5" cy="6.5" rx="4.5" ry="4.5" stroke="#dcdcdc" stroke-width="1.4" fill="none"/><ellipse cx="10.5" cy="6.5" rx="4.5" ry="4.5" stroke="#dcdcdc" stroke-width="1.4" fill="none"/></svg><svg class="a" style="left:1832px;top:317px" width="11" height="14" viewBox="0 0 11 14" ><rect x="0" y="2" width="11" height="1.5" fill="#dcdcdc"/><rect x="3.5" y="0" width="4" height="2" fill="#dcdcdc"/><path d="M1.5 4.5 L9.5 4.5 L9 13.5 L2 13.5Z" stroke="#dcdcdc" stroke-width="1.2" fill="none"/><path d="M4 6 L4 12 M5.5 6 L5.5 12 M7 6 L7 12" stroke="#dcdcdc" stroke-width="0.7"/></svg><div class="a" style="left:1622px;top:336px;width:234px;height:3px;background:#3b3b3b;"></div><div class="a" style="left:1622px;top:339px;width:234px;height:17px;background:#474747;"></div><div class="a" style="left:1698px;top:339px;width:1px;height:17px;background:#3f3f3f;"></div><div class="a" style="left:1699px;top:339px;width:63px;height:17px;background:#535353;"></div><div class="a t" style="left:1629px;top:340.91px;font-size:10.45px;color:#c8c8c8;font-weight:bold;">Adjustments</div><div class="a t" style="left:1705px;top:341.0px;font-size:10.35px;color:#f4f4f4;font-weight:bold;">Properties</div><svg class="a" style="left:1839px;top:343px" width="12" height="9" viewBox="0 0 12 9" ><rect x="0" y="0" width="12" height="1.2" fill="#a8a8a8"/><rect x="0" y="2" width="12" height="1.2" fill="#a8a8a8"/><rect x="0" y="4" width="12" height="1.2" fill="#a8a8a8"/><rect x="0" y="6" width="12" height="1.2" fill="#a8a8a8"/><rect x="0" y="8" width="12" height="1.2" fill="#a8a8a8"/></svg><div class="a t" style="left:1629.6px;top:366.11px;font-size:10.45px;color:#e2e2e2;font-weight:bold;">No Properties</div><div class="a" style="left:1622px;top:387px;width:234px;height:1px;background:#4e4e4e;"></div><div class="a" style="left:1840px;top:388px;width:16px;height:259px;background:#4e4e4e;"></div><div class="a" style="left:1622px;top:672px;width:234px;height:3px;background:#3b3b3b;"></div><div class="a" style="left:1622px;top:675px;width:234px;height:16px;background:#474747;"></div><div class="a" style="left:1622px;top:675px;width:46px;height:16px;background:#535353;"></div><div class="a" style="left:1726px;top:675px;width:1px;height:16px;background:#3f3f3f;"></div><div class="a" style="left:1766px;top:675px;width:1px;height:16px;background:#3f3f3f;"></div><div class="a t" style="left:1628.5px;top:676.85px;font-size:10.2px;color:#f4f4f4;font-weight:bold;">Layers</div><div class="a t" style="left:1674px;top:676.8px;font-size:10.25px;color:#c8c8c8;font-weight:bold;">Channels</div><div class="a t" style="left:1733px;top:677.03px;font-size:10.0px;color:#c8c8c8;font-weight:bold;">Paths</div><svg class="a" style="left:1839px;top:679px" width="12" height="9" viewBox="0 0 12 9" ><rect x="0" y="0" width="12" height="1.2" fill="#a8a8a8"/><rect x="0" y="2" width="12" height="1.2" fill="#a8a8a8"/><rect x="0" y="4" width="12" height="1.2" fill="#a8a8a8"/><rect x="0" y="6" width="12" height="1.2" fill="#a8a8a8"/><rect x="0" y="8" width="12" height="1.2" fill="#a8a8a8"/></svg><div class="a" style="left:1626px;top:700px;width:87px;height:17px;border-radius:3px;background:#434343;border:1px solid #4a4a4a"></div><svg class="a" style="left:1633px;top:703px" width="11" height="11" viewBox="0 0 11 11" ><circle cx="6.5" cy="4.5" r="3.5" stroke="#e0e0e0" stroke-width="1.3" fill="none"/><path d="M4 7 L1 10" stroke="#e0e0e0" stroke-width="1.7"/></svg><div class="a t" style="left:1646.4px;top:701.06px;font-size:10.5px;color:#ececec;font-weight:normal;-webkit-text-stroke:0.2px #ececec">Kind</div><svg class="a" style="left:1701px;top:707px" width="7" height="5" viewBox="0 0 7 5" ><path d="M0.5 0.5 L3.5 4 L6.5 0.5" stroke="#d0d0d0" stroke-width="1.2" fill="none"/></svg><svg class="a" style="left:1722px;top:702px" width="13" height="12" viewBox="0 0 13 12" ><rect x="0.7" y="0.7" width="11.6" height="10" stroke="#dedede" stroke-width="1.2" fill="none"/><path d="M2.5 8.5 L5 5 L6.5 7 L8 5.5 L10.5 8.5Z" fill="#dedede"/></svg><svg class="a" style="left:1746px;top:702px" width="12" height="12" viewBox="0 0 12 12" ><circle cx="6" cy="6" r="5.2" stroke="#dedede" stroke-width="1.3" fill="none"/><path d="M10 2 L2 10 A5.2 5.2 0 0 0 10 2Z" fill="#dedede"/></svg><div class="a t" style="left:1770px;top:699px;font-size:14px;color:#dedede;font-weight:bold;font-family:'Liberation Serif',serif">T</div><svg class="a" style="left:1793px;top:702px" width="12" height="12" viewBox="0 0 12 12" ><rect x="1.5" y="1.5" width="9" height="9" stroke="#dedede" stroke-width="1.2" fill="none"/><rect x="0" y="0" width="3" height="3" fill="#dedede"/><rect x="9" y="0" width="3" height="3" fill="#dedede"/><rect x="0" y="9" width="3" height="3" fill="#dedede"/><rect x="9" y="9" width="3" height="3" fill="#dedede"/></svg><svg class="a" style="left:1817px;top:701px" width="11" height="14" viewBox="0 0 11 14" ><path d="M3 1 L8 1 L10 3 L10 10 L3 10Z" stroke="#dedede" stroke-width="1.2" fill="none"/><rect x="0" y="7" width="6" height="6" fill="#dedede"/></svg><div class="a" style="left:1840px;top:699px;width:9px;height:18px;border-radius:5px;background:#444;border:1px solid #3e3e3e"></div><div class="a" style="left:1839px;top:699px;width:10px;height:10px;border-radius:5px;background:#e8e8e8"></div><div class="a" style="left:1622px;top:721px;width:234px;height:1px;background:#4c4c4c;"></div><div class="a" style="left:1626px;top:726px;width:128px;height:17px;border-radius:3px;background:#4d4d4d;border:1px solid #4a4a4a"></div><div class="a t" style="left:1632.8px;top:727.76px;font-size:10.4px;color:#7a7a7a;font-weight:normal;-webkit-text-stroke:0.15px #7a7a7a">Normal</div><svg class="a" style="left:1745px;top:733px" width="7" height="5" viewBox="0 0 7 5" ><path d="M0.5 0.5 L3.5 4 L6.5 0.5" stroke="#6a6a6a" stroke-width="1.2" fill="none"/></svg><div class="a t" style="left:1758px;top:727.66px;font-size:10.5px;color:#7a7a7a;font-weight:normal;-webkit-text-stroke:0.15px #7a7a7a">Opacity:</div><div class="a t" style="left:1801px;top:727.66px;font-size:10.5px;color:#6a6a6a;font-weight:normal;">100%</div><svg class="a" style="left:1839px;top:733px" width="7" height="5" viewBox="0 0 7 5" ><path d="M0.5 0.5 L3.5 4 L6.5 0.5" stroke="#666" stroke-width="1.2" fill="none"/></svg><div class="a" style="left:1799px;top:742px;width:51px;height:1px;background:#5c5c5c;"></div><div class="a" style="left:1622px;top:747px;width:234px;height:1px;background:#4c4c4c;"></div><div class="a t" style="left:1627px;top:753.56px;font-size:10.5px;color:#7a7a7a;font-weight:normal;-webkit-text-stroke:0.15px #7a7a7a">Lock:</div><svg class="a" style="left:1658px;top:755px" width="11" height="11" viewBox="0 0 11 11" ><rect x="0.5" y="0.5" width="10" height="10" stroke="#8a8a8a" fill="none"/><rect x="2" y="2" width="2.5" height="2.5" fill="#8a8a8a"/><rect x="6.5" y="2" width="2.5" height="2.5" fill="#8a8a8a"/><rect x="4.2" y="4.2" width="2.5" height="2.5" fill="#8a8a8a"/><rect x="2" y="6.5" width="2.5" height="2.5" fill="#8a8a8a"/><rect x="6.5" y="6.5" width="2.5" height="2.5" fill="#8a8a8a"/></svg><svg class="a" style="left:1678px;top:754px" width="12" height="13" viewBox="0 0 12 13" ><path d="M11 1 L5 8" stroke="#8a8a8a" stroke-width="1.8"/><path d="M5 7 C2 7 3 11 0 12.5 C4 13 7 11 6 8Z" fill="#8a8a8a"/></svg><svg class="a" style="left:1699px;top:754px" width="13" height="13" viewBox="0 0 13 13" ><path d="M6.5 1 L6.5 12 M1 6.5 L12 6.5" stroke="#8a8a8a" stroke-width="1.3"/><path d="M6.5 0 L4.5 2.5 L8.5 2.5Z M6.5 13 L4.5 10.5 L8.5 10.5Z M0 6.5 L2.5 4.5 L2.5 8.5Z M13 6.5 L10.5 4.5 L10.5 8.5Z" fill="#8a8a8a"/></svg><svg class="a" style="left:1720px;top:754px" width="13" height="13" viewBox="0 0 13 13" ><path d="M3 0 L3 10 L13 10 M0 3 L10 3 L10 13" stroke="#8a8a8a" stroke-width="1.3" fill="none" stroke-dasharray="2 1"/></svg><svg class="a" style="left:1743px;top:754px" width="10" height="13" viewBox="0 0 10 13" ><path d="M2.5 6 L2.5 3.5 C2.5 0.5 7.5 0.5 7.5 3.5 L7.5 6" stroke="#8a8a8a" stroke-width="1.4" fill="none"/><rect x="0.5" y="6" width="9" height="7" fill="#8a8a8a"/></svg><div class="a t" style="left:1781px;top:753.56px;font-size:10.5px;color:#7a7a7a;font-weight:normal;-webkit-text-stroke:0.15px #7a7a7a">Fill:</div><div class="a t" style="left:1801px;top:753.56px;font-size:10.5px;color:#6a6a6a;font-weight:normal;">100%</div><svg class="a" style="left:1839px;top:759px" width="7" height="5" viewBox="0 0 7 5" ><path d="M0.5 0.5 L3.5 4 L6.5 0.5" stroke="#666" stroke-width="1.2" fill="none"/></svg><div class="a" style="left:1799px;top:768px;width:51px;height:1px;background:#5c5c5c;"></div><div class="a" style="left:1622px;top:774px;width:218px;height:155px;background:#474747;"></div><div class="a" style="left:1840px;top:774px;width:16px;height:155px;background:#4b4b4b;"></div><div class="a" style="left:1843px;top:777px;width:9px;height:19px;border-radius:5px;background:#6a6a6a"></div><div class="a" style="left:1622px;top:798px;width:218px;height:1px;background:#424242;"></div><svg class="a" style="left:1630px;top:782px" width="14" height="10" viewBox="0 0 14 10" ><path d="M0.5 5 C3 0.5 11 0.5 13.5 5 C11 9.5 3 9.5 0.5 5Z" fill="#e8e8e8"/><circle cx="7" cy="5" r="2.5" fill="#474747"/><circle cx="7.6" cy="4.4" r="0.9" fill="#e8e8e8"/></svg><svg class="a" style="left:1655px;top:782px" width="5" height="10" viewBox="0 0 5 10" ><path d="M0.5 0.5 L4 5 L0.5 9.5" stroke="#bdbdbd" stroke-width="1" fill="none"/></svg><div class="a t" style="left:1671.7px;top:782.16px;font-size:10.4px;color:#f2f2f2;font-weight:bold;">Typography (Mobile)</div><div class="a" style="left:1622px;top:822px;width:218px;height:1px;background:#424242;"></div><svg class="a" style="left:1630px;top:806px" width="14" height="10" viewBox="0 0 14 10" ><path d="M0.5 5 C3 0.5 11 0.5 13.5 5 C11 9.5 3 9.5 0.5 5Z" fill="#e8e8e8"/><circle cx="7" cy="5" r="2.5" fill="#474747"/><circle cx="7.6" cy="4.4" r="0.9" fill="#e8e8e8"/></svg><svg class="a" style="left:1655px;top:806px" width="5" height="10" viewBox="0 0 5 10" ><path d="M0.5 0.5 L4 5 L0.5 9.5" stroke="#bdbdbd" stroke-width="1" fill="none"/></svg><div class="a t" style="left:1671.7px;top:806.16px;font-size:10.4px;color:#f2f2f2;font-weight:bold;">Typography (Tablet) - Subpage</div><div class="a" style="left:1622px;top:846px;width:218px;height:1px;background:#424242;"></div><svg class="a" style="left:1630px;top:830px" width="14" height="10" viewBox="0 0 14 10" ><path d="M0.5 5 C3 0.5 11 0.5 13.5 5 C11 9.5 3 9.5 0.5 5Z" fill="#e8e8e8"/><circle cx="7" cy="5" r="2.5" fill="#474747"/><circle cx="7.6" cy="4.4" r="0.9" fill="#e8e8e8"/></svg><svg class="a" style="left:1655px;top:830px" width="5" height="10" viewBox="0 0 5 10" ><path d="M0.5 0.5 L4 5 L0.5 9.5" stroke="#bdbdbd" stroke-width="1" fill="none"/></svg><div class="a t" style="left:1671.7px;top:830.16px;font-size:10.4px;color:#f2f2f2;font-weight:bold;">Typography (Tablet) - Homep...</div><div class="a" style="left:1622px;top:870px;width:218px;height:1px;background:#424242;"></div><svg class="a" style="left:1630px;top:854px" width="14" height="10" viewBox="0 0 14 10" ><path d="M0.5 5 C3 0.5 11 0.5 13.5 5 C11 9.5 3 9.5 0.5 5Z" fill="#e8e8e8"/><circle cx="7" cy="5" r="2.5" fill="#474747"/><circle cx="7.6" cy="4.4" r="0.9" fill="#e8e8e8"/></svg><svg class="a" style="left:1655px;top:854px" width="5" height="10" viewBox="0 0 5 10" ><path d="M0.5 0.5 L4 5 L0.5 9.5" stroke="#bdbdbd" stroke-width="1" fill="none"/></svg><div class="a t" style="left:1671.7px;top:854.16px;font-size:10.4px;color:#f2f2f2;font-weight:bold;">Typography (Desktop) - Subp...</div><div class="a" style="left:1622px;top:894px;width:218px;height:1px;background:#424242;"></div><svg class="a" style="left:1630px;top:878px" width="14" height="10" viewBox="0 0 14 10" ><path d="M0.5 5 C3 0.5 11 0.5 13.5 5 C11 9.5 3 9.5 0.5 5Z" fill="#e8e8e8"/><circle cx="7" cy="5" r="2.5" fill="#474747"/><circle cx="7.6" cy="4.4" r="0.9" fill="#e8e8e8"/></svg><svg class="a" style="left:1655px;top:878px" width="5" height="10" viewBox="0 0 5 10" ><path d="M0.5 0.5 L4 5 L0.5 9.5" stroke="#bdbdbd" stroke-width="1" fill="none"/></svg><div class="a t" style="left:1671.7px;top:878.16px;font-size:10.4px;color:#f2f2f2;font-weight:bold;">Additional Class Styles (Desk...</div><div class="a" style="left:1622px;top:918px;width:218px;height:1px;background:#424242;"></div><svg class="a" style="left:1630px;top:902px" width="14" height="10" viewBox="0 0 14 10" ><path d="M0.5 5 C3 0.5 11 0.5 13.5 5 C11 9.5 3 9.5 0.5 5Z" fill="#e8e8e8"/><circle cx="7" cy="5" r="2.5" fill="#474747"/><circle cx="7.6" cy="4.4" r="0.9" fill="#e8e8e8"/></svg><svg class="a" style="left:1654px;top:904px" width="9" height="6" viewBox="0 0 9 6" ><path d="M0.5 0.5 L4.5 5 L8.5 0.5" stroke="#bdbdbd" stroke-width="1" fill="none"/></svg><div class="a t" style="left:1671.7px;top:902.16px;font-size:10.4px;color:#f2f2f2;font-weight:bold;">Additional Class Styles (Mobile)</div><div class="a" style="left:1652px;top:919px;width:188px;height:10px;background:#505050;"></div><div class="a" style="left:1681px;top:927px;width:8px;height:1px;background:#d0d0d0;"></div><div class="a" style="left:1622px;top:929px;width:234px;height:24px;background:#535353;"></div><svg class="a" style="left:1659px;top:935px" width="14" height="10" viewBox="0 0 14 10" ><rect x="0.7" y="2" width="7" height="6" rx="3" stroke="#9a9a9a" stroke-width="1.4" fill="none"/><rect x="6" y="2" width="7" height="6" rx="3" stroke="#9a9a9a" stroke-width="1.4" fill="none"/></svg><div class="a t" style="left:1686px;top:932px;font-size:14px;color:#9a9a9a;font-weight:normal;font-family:'Liberation Serif',serif"><i>fx</i></div><svg class="a" style="left:1711px;top:934px" width="13" height="11" viewBox="0 0 13 11" ><rect x="0" y="0" width="13" height="11" fill="#9a9a9a"/><circle cx="6.5" cy="5.5" r="3" fill="#535353"/></svg><svg class="a" style="left:1738px;top:934px" width="12" height="12" viewBox="0 0 12 12" ><circle cx="6" cy="6" r="5.3" stroke="#dedede" stroke-width="1.3" fill="none"/><path d="M10 2 L2 10 A5.3 5.3 0 0 1 10 2Z" fill="#dedede"/></svg><svg class="a" style="left:1764px;top:934px" width="14" height="11" viewBox="0 0 14 11" ><path d="M0 1 L5 1 L6 2.5 L14 2.5 L14 11 L0 11Z" fill="#dedede"/></svg><svg class="a" style="left:1790px;top:934px" width="12" height="12" viewBox="0 0 12 12" ><path d="M1 1 L11 1 L11 11 L5 11 L1 7Z" stroke="#dedede" stroke-width="1.3" fill="none"/><path d="M1 7 L5 7 L5 11" stroke="#dedede" stroke-width="1.2" fill="none"/></svg><svg class="a" style="left:1816px;top:933px" width="11" height="14" viewBox="0 0 11 14" ><rect x="0" y="2" width="11" height="1.5" fill="#9a9a9a"/><rect x="3.5" y="0" width="4" height="2" fill="#9a9a9a"/><path d="M1.5 4.5 L9.5 4.5 L9 13.5 L2 13.5Z" stroke="#9a9a9a" stroke-width="1.2" fill="none"/></svg><div class="a" id="winborder" style="left:0;top:0;width:1px;height:953px;background:#2e2e2e"></div><div class="a" style="left:0;top:0;width:6px;height:6px;background:radial-gradient(circle at 6px 6px, transparent 5px, #1a1a1a 5.5px)"></div><div class="a" style="left:1850px;top:0;width:6px;height:6px;background:radial-gradient(circle at 0px 6px, transparent 5px, #1a1a1a 5.5px)"></div></body></html>
